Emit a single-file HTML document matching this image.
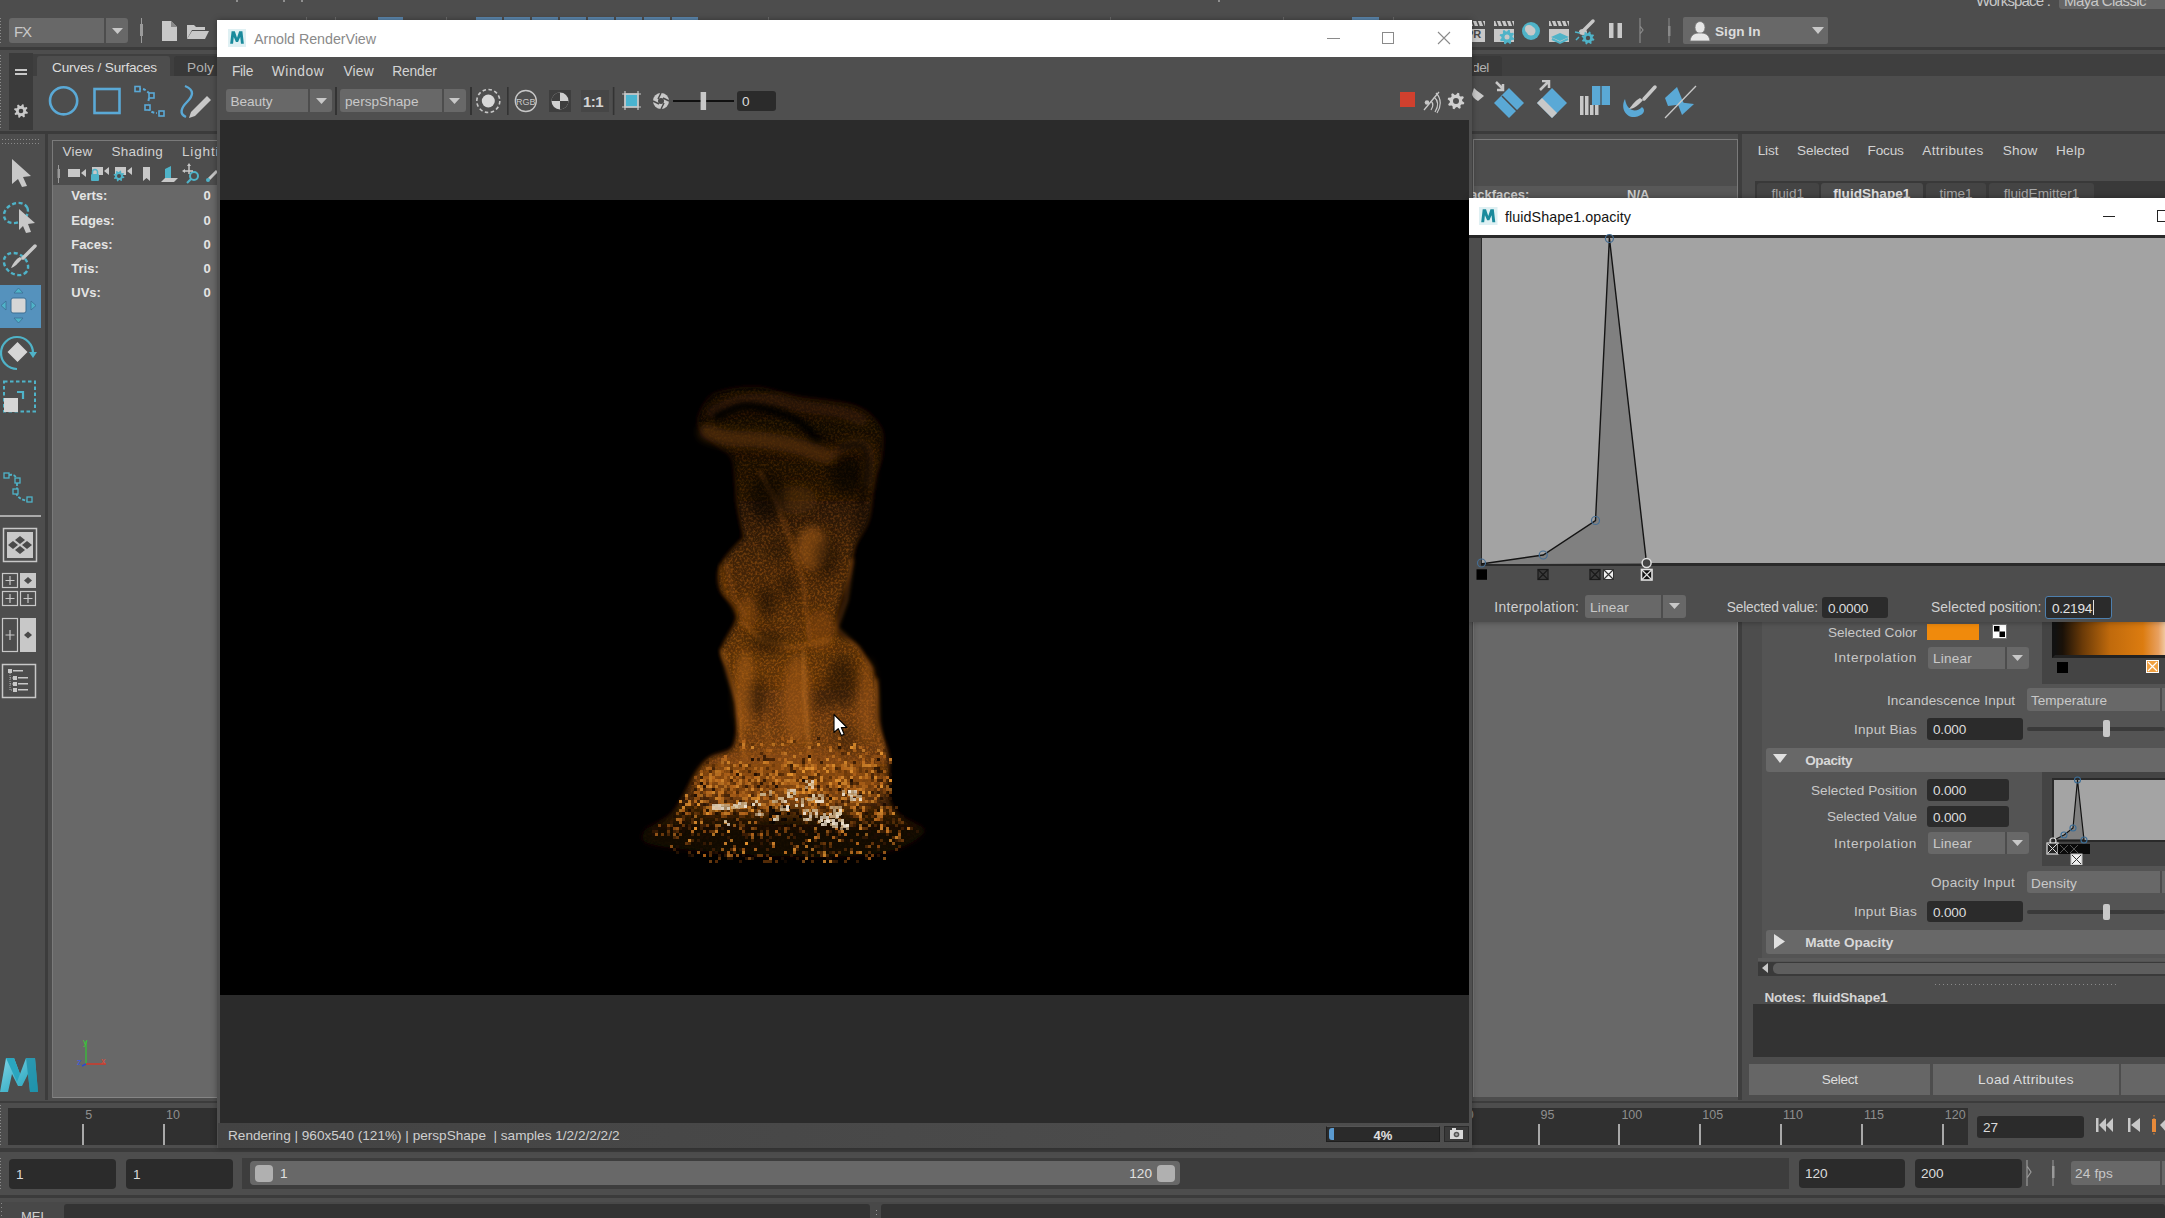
<!DOCTYPE html>
<html><head><meta charset="utf-8">
<style>
*{margin:0;padding:0;box-sizing:border-box}
html,body{width:2165px;height:1218px;overflow:hidden;background:#4d4d4d;font-family:"Liberation Sans",sans-serif;color:#c8c8c8;position:relative}
.a{position:absolute}
.t{position:absolute;white-space:pre;line-height:1}
</style></head><body>
<div class="t" style="left:1976.0px;top:-7.2px;font-size:15px;font-weight:400;color:#c8c8c8;letter-spacing:-0.827px;">Workspace :</div>
<div class="a" style="left:2059px;top:0px;width:106px;height:9px;background:#666666;border-radius:0 0 0 3px"></div>
<div class="t" style="left:2064.0px;top:-7.2px;font-size:15px;font-weight:400;color:#c8c8c8;letter-spacing:-0.599px;">Maya Classic</div>
<div class="a" style="left:236px;top:0px;width:2px;height:2px;background:#8f8f8f;"></div>
<div class="a" style="left:283px;top:0px;width:2px;height:2px;background:#8f8f8f;"></div>
<div class="a" style="left:301px;top:0px;width:2px;height:2px;background:#8f8f8f;"></div>
<div class="a" style="left:1218px;top:0px;width:2px;height:2px;background:#8f8f8f;"></div>
<div class="a" style="left:306px;top:17px;width:1px;height:4px;background:#6a6a6a;"></div>
<div class="a" style="left:335px;top:17px;width:1px;height:4px;background:#6a6a6a;"></div>
<div class="a" style="left:446px;top:17px;width:1px;height:4px;background:#6a6a6a;"></div>
<div class="a" style="left:768px;top:17px;width:1px;height:4px;background:#6a6a6a;"></div>
<div class="a" style="left:1110px;top:17px;width:1px;height:4px;background:#6a6a6a;"></div>
<div class="a" style="left:1283px;top:17px;width:1px;height:4px;background:#6a6a6a;"></div>
<div class="a" style="left:1393px;top:17px;width:1px;height:4px;background:#6a6a6a;"></div>
<div class="a" style="left:378px;top:17px;width:25px;height:4px;background:#5b87ad;"></div>
<div class="a" style="left:476px;top:17px;width:26px;height:4px;background:#5b87ad;"></div>
<div class="a" style="left:504px;top:17px;width:26px;height:4px;background:#5b87ad;"></div>
<div class="a" style="left:532px;top:17px;width:26px;height:4px;background:#5b87ad;"></div>
<div class="a" style="left:560px;top:17px;width:26px;height:4px;background:#5b87ad;"></div>
<div class="a" style="left:588px;top:17px;width:26px;height:4px;background:#5b87ad;"></div>
<div class="a" style="left:616px;top:17px;width:26px;height:4px;background:#5b87ad;"></div>
<div class="a" style="left:644px;top:17px;width:26px;height:4px;background:#5b87ad;"></div>
<div class="a" style="left:672px;top:17px;width:26px;height:4px;background:#5b87ad;"></div>
<div class="a" style="left:1352px;top:17px;width:27px;height:4px;background:#5b87ad;"></div>
<div class="a" style="left:9px;top:18px;width:119px;height:25px;background:#686868;border-radius:3px"></div>
<div class="a" style="left:104px;top:18px;width:2px;height:25px;background:#4d4d4d;"></div>
<svg class="a" style="left:111.5px;top:27.5px;" width="11" height="6" viewBox="0 0 11 6"><polygon points="0,0 11,0 5.5,6" fill="#c8c8c8"/></svg>
<div class="t" style="left:14.0px;top:24.3px;font-size:15px;font-weight:400;color:#c8c8c8;letter-spacing:-1.086px;">FX</div>
<div class="a" style="left:141px;top:18px;width:1px;height:25px;background:#9a9a9a;"></div>
<div class="a" style="left:140px;top:24px;width:3px;height:12px;background:#9a9a9a;"></div>
<svg class="a" style="left:160px;top:20px;" width="20" height="22" viewBox="0 0 20 22"><path d="M2,1 H11 L17,7 V21 H2 Z" fill="#c8c8c8"/><path d="M11,1 V7 H17" fill="#888"/></svg>
<svg class="a" style="left:186px;top:22px;" width="24" height="18" viewBox="0 0 24 18"><path d="M1,3 H8 L10,5 H19 V8 H6 L1,17 Z" fill="#c8c8c8"/><path d="M6,9 H23 L19,17 H1 Z" fill="#c8c8c8"/></svg>
<svg class="a" style="left:1472px;top:18px;" width="230" height="28" viewBox="0 0 230 28"><g transform="translate(-7,3)"><rect x="0" y="0" width="20" height="5" fill="#c8c8c8"/><path d="M2,0 L4,5 M7,0 L9,5 M12,0 L14,5 M17,0 L19,5" stroke="#4a4a4a" stroke-width="1.6"/><rect x="0" y="8" width="20" height="13" fill="#c8c8c8"/></g><text x="-6" y="20" font-size="11" font-weight="700" fill="#4a4a4a" font-family="Liberation Sans">PR</text><g transform="translate(22,3)"><rect x="0" y="0" width="20" height="5" fill="#c8c8c8"/><path d="M2,0 L4,5 M7,0 L9,5 M12,0 L14,5 M17,0 L19,5" stroke="#4a4a4a" stroke-width="1.6"/><rect x="0" y="8" width="20" height="13" fill="#c8c8c8"/></g><polygon points="40.50,19.00 42.36,20.46 41.93,21.87 39.57,22.06 38.89,22.89 39.17,25.24 37.87,25.93 36.07,24.39 35.00,24.50 33.54,26.36 32.13,25.93 31.94,23.57 31.11,22.89 28.76,23.17 28.07,21.87 29.61,20.07 29.50,19.00 27.64,17.54 28.07,16.13 30.43,15.94 31.11,15.11 30.83,12.76 32.13,12.07 33.93,13.61 35.00,13.50 36.46,11.64 37.87,12.07 38.06,14.43 38.89,15.11 41.24,14.83 41.93,16.13 40.39,17.93" fill="#4fb3c8"/><circle cx="35" cy="19" r="2.5" fill="#c8c8c8"/><circle cx="59" cy="13" r="9" fill="#4fb3c8"/><circle cx="59" cy="13" r="4.5" fill="#c8c8c8"/><circle cx="57" cy="11" r="4" fill="#c8c8c8"/><g transform="translate(77,3)"><rect x="0" y="0" width="20" height="5" fill="#c8c8c8"/><path d="M2,0 L4,5 M7,0 L9,5 M12,0 L14,5 M17,0 L19,5" stroke="#4a4a4a" stroke-width="1.6"/><rect x="0" y="8" width="20" height="13" fill="#c8c8c8"/></g><path d="M88,15 L97,19 L88,23 L79,19 Z" fill="#4fb3c8"/><path d="M80,21 L88,25 L96,21" stroke="#4fb3c8" stroke-width="2" fill="none"/><path d="M121,3 L112,12" stroke="#c8c8c8" stroke-width="3.5" stroke-linecap="round"/><ellipse cx="111" cy="14" rx="4" ry="3" fill="#c8c8c8"/><polygon points="120.80,20.00 122.38,21.27 122.01,22.49 119.99,22.67 119.39,23.39 119.61,25.40 118.49,26.01 116.94,24.71 116.00,24.80 114.73,26.38 113.51,26.01 113.33,23.99 112.61,23.39 110.60,23.61 109.99,22.49 111.29,20.94 111.20,20.00 109.62,18.73 109.99,17.51 112.01,17.33 112.61,16.61 112.39,14.60 113.51,13.99 115.06,15.29 116.00,15.20 117.27,13.62 118.49,13.99 118.67,16.01 119.39,16.61 121.40,16.39 122.01,17.51 120.71,19.06" fill="#4fb3c8"/><circle cx="116" cy="20" r="2.2" fill="#4d4d4d"/><path d="M103,14 L108,15 M104,22 L107,19" stroke="#4fb3c8" stroke-width="1.5"/><rect x="137" y="5" width="4.5" height="15" fill="#c8c8c8"/><rect x="145.5" y="5" width="4.5" height="15" fill="#c8c8c8"/><path d="M168,0 V25 M168,8 L171,12 L168,16" stroke="#8a8a8a" stroke-width="1.2" fill="none"/><path d="M197,0 V25" stroke="#8a8a8a" stroke-width="1"/><rect x="196" y="8" width="2.5" height="10" fill="#8a8a8a"/></svg>
<div class="a" style="left:1683px;top:17px;width:145px;height:27px;background:#686868;border-radius:2px"></div>
<svg class="a" style="left:1689px;top:20px;" width="22" height="22" viewBox="0 0 22 22"><ellipse cx="11" cy="7.5" rx="5" ry="6" fill="#e6e6e6" stroke="#777" stroke-width="0.8"/><path d="M1,21 C2,14 6,13 11,13 C16,13 20,14 21,21 Z" fill="#e6e6e6" stroke="#777" stroke-width="0.8"/></svg>
<div class="t" style="left:1715.0px;top:24.9px;font-size:13.6px;font-weight:700;color:#dcdcdc;letter-spacing:0.027px;">Sign In</div>
<svg class="a" style="left:1812.0px;top:26.5px;" width="12" height="7" viewBox="0 0 12 7"><polygon points="0,0 12,0 6.0,7" fill="#c8c8c8"/></svg>
<div class="a" style="left:0px;top:47px;width:2165px;height:3px;background:#3b3b3b;"></div>
<div class="a" style="left:33px;top:54px;width:2165px;height:22px;background:#3f3f3f;"></div>
<div class="a" style="left:9px;top:53px;width:24px;height:77px;background:#3b3b3b;"></div>
<div class="a" style="left:15px;top:69px;width:12px;height:2px;background:#c8c8c8;"></div>
<div class="a" style="left:15px;top:73px;width:12px;height:2px;background:#c8c8c8;"></div>
<svg class="a" style="left:13px;top:103px;" width="16" height="16" viewBox="0 0 16 16"><polygon points="13.00,8.00 14.87,9.37 14.47,10.68 12.16,10.78 11.54,11.54 11.89,13.82 10.68,14.47 8.98,12.90 8.00,13.00 6.63,14.87 5.32,14.47 5.22,12.16 4.46,11.54 2.18,11.89 1.53,10.68 3.10,8.98 3.00,8.00 1.13,6.63 1.53,5.32 3.84,5.22 4.46,4.46 4.11,2.18 5.32,1.53 7.02,3.10 8.00,3.00 9.37,1.13 10.68,1.53 10.78,3.84 11.54,4.46 13.82,4.11 14.47,5.32 12.90,7.02" fill="#c8c8c8"/><circle cx="8" cy="8" r="2.3" fill="#3b3b3b"/></svg>
<div class="a" style="left:37px;top:56px;width:133px;height:22px;background:#4d4d4d;border-radius:3px 3px 0 0"></div>
<div class="t" style="left:52.0px;top:60.9px;font-size:13.6px;font-weight:400;color:#dddddd;letter-spacing:-0.179px;">Curves / Surfaces</div>
<div class="a" style="left:174px;top:56px;width:46px;height:20px;background:#393939;border-radius:3px 3px 0 0"></div>
<div class="t" style="left:187.0px;top:60.9px;font-size:13.6px;font-weight:400;color:#b0b0b0;letter-spacing:0.137px;">Poly</div>
<div class="a" style="left:1472px;top:56px;width:30px;height:20px;background:#393939;border-radius:0 3px 0 0"></div>
<div class="t" style="left:1472.0px;top:60.9px;font-size:13.6px;font-weight:400;color:#b0b0b0;letter-spacing:-0.380px;clip-path:inset(0 0 0 2px)">del</div>
<svg class="a" style="left:45px;top:84px;" width="180" height="36" viewBox="0 0 180 36"><circle cx="18.6" cy="16.8" r="13.6" fill="none" stroke="#5aa9d6" stroke-width="2.6"/><rect x="49.5" y="5" width="25" height="24" fill="none" stroke="#5aa9d6" stroke-width="2.6"/><path d="M93,5 C98,4 101,6 104,9 M104,14 L103,19 M103,24 C105,28 109,29 112,29" fill="none" stroke="#5aa9d6" stroke-width="2" stroke-dasharray="3 2"/><g fill="#4a4a4a" stroke="#5aa9d6" stroke-width="1.6"><rect x="90" y="2.5" width="5" height="5"/><rect x="104" y="9" width="5" height="5"/><rect x="100" y="21" width="5" height="5"/><rect x="114" y="27" width="5" height="5"/></g><path d="M140,2 C150,6 148,12 142,18 C136,24 134,30 141,33" fill="none" stroke="#5aa9d6" stroke-width="2.4"/><path d="M162,12 L166,16 L150,32 L144,34 L146,28 Z" fill="#c8c8c8"/></svg>
<svg class="a" style="left:1472px;top:80px;" width="230" height="45" viewBox="0 0 230 45"><path d="M2,8 C6,12 10,14 12,16 L6,21 C2,19 0,16 0,14 Z" fill="#c8c8c8"/><g transform="translate(0,-4)"><path d="M37,12 L52,27 L37,42 L22,27 Z" fill="#5aa9d6"/><path d="M37,12 L52,27" stroke="#4a4a4a" stroke-width="0"/><path d="M30,20 L45,35" stroke="#4a4a4a" stroke-width="1.5"/><path d="M24,6 L31,13 M31,8 V14 H25" stroke="#c8c8c8" stroke-width="2.5" fill="none"/><path d="M80,12 L95,27 L80,42 L65,27 Z" fill="#5aa9d6"/><path d="M70,22 L65,27 L80,42 L85,37 Z" fill="#c8c8c8"/><path d="M68,14 L76,6 M70,5 H77 V12" stroke="#c8c8c8" stroke-width="2.5" fill="none"/></g><rect x="120" y="6" width="18" height="19" fill="#5aa9d6"/><path d="M129,6 V25" stroke="#4a4a4a" stroke-width="1.2"/><rect x="108" y="16" width="3.5" height="19" fill="#c8c8c8"/><rect x="113" y="16" width="3.5" height="19" fill="#c8c8c8"/><rect x="118" y="25" width="3.5" height="10" fill="#c8c8c8"/><rect x="123" y="25" width="3.5" height="10" fill="#c8c8c8"/><path d="M153,19 C148,28 154,38 163,37 C170,36 175,31 170,27 C165,33 155,32 153,19 Z" fill="#5aa9d6"/><path d="M183,7 L172,19" stroke="#c8c8c8" stroke-width="3.5" stroke-linecap="round"/><path d="M171,20 C168,24 162,29 157,29 C160,25 164,20 168,18 Z" fill="#c8c8c8"/><path d="M193,18 L205,7 L212,24 L196,26 Z" fill="#5aa9d6"/><path d="M205,22 L222,24 L210,35 Z" fill="#5aa9d6"/><path d="M224,6 L193,38" stroke="#c8c8c8" stroke-width="1.3"/></svg>
<div class="a" style="left:0px;top:131px;width:2165px;height:3px;background:#3b3b3b;"></div>
<div class="a" style="left:45px;top:134px;width:3px;height:966px;background:#3c3c3c;"></div>
<div class="a" style="left:2px;top:139px;width:1px;height:1px;background:#8a8a8a;"></div>
<div class="a" style="left:2px;top:143px;width:1px;height:1px;background:#8a8a8a;"></div>
<div class="a" style="left:5px;top:139px;width:1px;height:1px;background:#8a8a8a;"></div>
<div class="a" style="left:5px;top:143px;width:1px;height:1px;background:#8a8a8a;"></div>
<div class="a" style="left:8px;top:139px;width:1px;height:1px;background:#8a8a8a;"></div>
<div class="a" style="left:8px;top:143px;width:1px;height:1px;background:#8a8a8a;"></div>
<div class="a" style="left:11px;top:139px;width:1px;height:1px;background:#8a8a8a;"></div>
<div class="a" style="left:11px;top:143px;width:1px;height:1px;background:#8a8a8a;"></div>
<div class="a" style="left:14px;top:139px;width:1px;height:1px;background:#8a8a8a;"></div>
<div class="a" style="left:14px;top:143px;width:1px;height:1px;background:#8a8a8a;"></div>
<div class="a" style="left:17px;top:139px;width:1px;height:1px;background:#8a8a8a;"></div>
<div class="a" style="left:17px;top:143px;width:1px;height:1px;background:#8a8a8a;"></div>
<div class="a" style="left:20px;top:139px;width:1px;height:1px;background:#8a8a8a;"></div>
<div class="a" style="left:20px;top:143px;width:1px;height:1px;background:#8a8a8a;"></div>
<div class="a" style="left:23px;top:139px;width:1px;height:1px;background:#8a8a8a;"></div>
<div class="a" style="left:23px;top:143px;width:1px;height:1px;background:#8a8a8a;"></div>
<div class="a" style="left:26px;top:139px;width:1px;height:1px;background:#8a8a8a;"></div>
<div class="a" style="left:26px;top:143px;width:1px;height:1px;background:#8a8a8a;"></div>
<div class="a" style="left:29px;top:139px;width:1px;height:1px;background:#8a8a8a;"></div>
<div class="a" style="left:29px;top:143px;width:1px;height:1px;background:#8a8a8a;"></div>
<div class="a" style="left:32px;top:139px;width:1px;height:1px;background:#8a8a8a;"></div>
<div class="a" style="left:32px;top:143px;width:1px;height:1px;background:#8a8a8a;"></div>
<div class="a" style="left:35px;top:139px;width:1px;height:1px;background:#8a8a8a;"></div>
<div class="a" style="left:35px;top:143px;width:1px;height:1px;background:#8a8a8a;"></div>
<div class="a" style="left:38px;top:139px;width:1px;height:1px;background:#8a8a8a;"></div>
<div class="a" style="left:38px;top:143px;width:1px;height:1px;background:#8a8a8a;"></div>
<svg class="a" style="left:8px;top:158px;" width="26" height="30" viewBox="0 0 26 30"><path d="M4,1 L23,18 L15,19 L19,28 L14,29 L10,21 L4,26 Z" fill="#c8c8c8"/></svg>
<svg class="a" style="left:1px;top:200px;" width="36" height="34" viewBox="0 0 36 34"><ellipse cx="15" cy="13" rx="12.5" ry="9.5" transform="rotate(-25 15 13)" fill="none" stroke="#4fb3c8" stroke-width="2.4" stroke-dasharray="4 2.5"/><path d="M18,9 L34,23 L27,24 L30,32 L25,33 L22,26 L18,30 Z" fill="#c8c8c8"/></svg>
<svg class="a" style="left:1px;top:243px;" width="36" height="38" viewBox="0 0 36 38"><ellipse cx="15" cy="21" rx="13" ry="10" transform="rotate(35 15 21)" fill="none" stroke="#4fb3c8" stroke-width="2.4" stroke-dasharray="4 2.5"/><path d="M34,3 L22,15" stroke="#c8c8c8" stroke-width="3.5" stroke-linecap="round"/><path d="M21,16 C17,20 14,24 10,25 C12,20 15,16 19,14 Z" fill="#c8c8c8"/></svg>
<div class="a" style="left:0px;top:285px;width:41px;height:43px;background:#5592bd;"></div>
<svg class="a" style="left:0px;top:286px;" width="41" height="42" viewBox="0 0 41 42"><rect x="11" y="12" width="15" height="15" rx="2" fill="#d6d6d6" stroke="#3d6f94" stroke-width="1"/><path d="M14,7 L18.5,2 L23,7 Z M14,32 L18.5,37 L23,32 Z M6,15 L1,19.5 L6,24 Z M31,15 L36,19.5 L31,24 Z" fill="#4fb3c8" stroke="#3d6f94" stroke-width="0.8"/></svg>
<svg class="a" style="left:0px;top:334px;" width="40" height="38" viewBox="0 0 40 38"><path d="M17,35 A16,16 0 1 1 33,19" fill="none" stroke="#4fb3c8" stroke-width="2.2"/><path d="M29,18 L37,18 L33,24 Z" fill="#4fb3c8"/><path d="M17.5,8 L27.5,18 L17.5,28 L7.5,18 Z" fill="#d6d6d6"/></svg>
<svg class="a" style="left:2px;top:380px;" width="36" height="34" viewBox="0 0 36 34"><rect x="2" y="1.5" width="31" height="30" fill="none" stroke="#4fb3c8" stroke-width="2" stroke-dasharray="3.5 2.5"/><path d="M15,12 H21 V19" fill="none" stroke="#4fb3c8" stroke-width="2.2"/><rect x="2" y="18" width="14" height="14" fill="#d6d6d6"/></svg>
<svg class="a" style="left:2px;top:470px;" width="34" height="36" viewBox="0 0 34 36"><path d="M7,5 C12,4 14,6 14,9 M15,13 V19 M14,23 C16,29 22,30 26,31" fill="none" stroke="#4fb3c8" stroke-width="1.8" stroke-dasharray="3 1.5"/><g fill="#4a4a4a" stroke="#4fb3c8" stroke-width="1.3"><rect x="2" y="3" width="5" height="5"/><rect x="13" y="8" width="5" height="5"/><rect x="11" y="19" width="5" height="5"/><rect x="25" y="27" width="5" height="5"/></g></svg>
<div class="a" style="left:0px;top:515px;width:41px;height:2px;background:#aaaaaa;"></div>
<svg class="a" style="left:2px;top:527px;" width="36" height="36" viewBox="0 0 36 36"><rect x="1.5" y="1.5" width="33" height="33" fill="none" stroke="#c8c8c8" stroke-width="1.5"/><rect x="5" y="5" width="26" height="26" fill="#c8c8c8"/><path d="M18,9 L23,13 L18,17 L13,13 Z M11,14 L16,18 L11,22 L6,18 Z M25,14 L30,18 L25,22 L20,18 Z M18,19 L23,23 L18,27 L13,23 Z" fill="#4a4a4a"/></svg>
<svg class="a" style="left:1px;top:572px;" width="38" height="36" viewBox="0 0 38 36"><g fill="none" stroke="#c8c8c8" stroke-width="1.2"><rect x="1.5" y="1.5" width="15" height="14"/><rect x="1.5" y="19.5" width="15" height="14"/><rect x="19.5" y="19.5" width="15" height="14"/></g><rect x="19" y="1" width="16" height="15" fill="#c8c8c8"/><path d="M27,5 L31,8.5 L27,12 L23,8.5 Z" fill="#4a4a4a"/><path d="M9,4 V13 M4.5,8.5 H13.5 M9,22 V31 M4.5,26.5 H13.5 M27,22 V31 M22.5,26.5 H31.5" stroke="#c8c8c8" stroke-width="1.2"/></svg>
<svg class="a" style="left:1px;top:617px;" width="38" height="36" viewBox="0 0 38 36"><rect x="1.5" y="1.5" width="15" height="33" fill="none" stroke="#c8c8c8" stroke-width="1.2"/><rect x="19" y="1" width="16" height="34" fill="#c8c8c8"/><path d="M9,13 V23 M4.5,18 H13.5" stroke="#c8c8c8" stroke-width="1.2"/><path d="M27,14.5 L31,18 L27,21.5 L23,18 Z" fill="#4a4a4a"/></svg>
<svg class="a" style="left:1px;top:663px;" width="38" height="36" viewBox="0 0 38 36"><rect x="1.5" y="1.5" width="33" height="33" fill="none" stroke="#c8c8c8" stroke-width="1.5"/><g fill="#c8c8c8"><rect x="7" y="6" width="4" height="4"/><rect x="12" y="7" width="10" height="1.5"/><rect x="12" y="13" width="4" height="4"/><rect x="17" y="14" width="10" height="1.5"/><rect x="12" y="19" width="4" height="4"/><rect x="17" y="20" width="10" height="1.5"/><rect x="12" y="25" width="4" height="4"/><rect x="17" y="26" width="10" height="1.5"/></g><path d="M9,10 V27 H12 M9,15 H12 M9,21 H12" stroke="#c8c8c8" stroke-width="0.8" fill="none" stroke-dasharray="1 1"/></svg>
<svg class="a" style="left:0px;top:1052px;" width="40" height="42" viewBox="0 0 40 42"><defs><linearGradient id="mlg" x1="0" y1="0" x2="1" y2="1"><stop offset="0" stop-color="#7fd3e6"/><stop offset="1" stop-color="#1b9fb8"/></linearGradient></defs><path d="M0,40 L6,6 L14,6 L20,22 L26,6 L35,6 L38,40 L30,40 L28,22 L22,34 L18,34 L12,22 L8,40 Z" fill="url(#mlg)"/><path d="M6,6 L14,6 L20,22 L17,30 Z" fill="#2aa6bf"/><path d="M26,6 L35,6 L38,40 L30,40 Z" fill="#1f8fa8" opacity="0.8"/></svg>
<div class="a" style="left:52px;top:140px;width:166px;height:958px;background:#4d4d4d;"></div>
<div class="a" style="left:52px;top:140px;width:166px;height:1px;background:#7a7a7a;"></div>
<div class="a" style="left:52px;top:140px;width:1px;height:958px;background:#7a7a7a;"></div>
<div class="a" style="left:53px;top:185px;width:165px;height:912px;background:#686868;"></div>
<div class="a" style="left:53px;top:1097px;width:165px;height:1px;background:#858585;"></div>
<div class="t" style="left:62.5px;top:145.0px;font-size:13.5px;font-weight:400;color:#d2d2d2;letter-spacing:0.242px;">View</div>
<div class="t" style="left:111.5px;top:145.0px;font-size:13.5px;font-weight:400;color:#d2d2d2;letter-spacing:0.279px;">Shading</div>
<div class="t" style="left:182.0px;top:145.0px;font-size:13.5px;font-weight:400;color:#d2d2d2;letter-spacing:0.838px;">Lighting</div>
<svg class="a" style="left:53px;top:162px;" width="165" height="24" viewBox="0 0 165 24"><path d="M5.5,3 V21" stroke="#9a9a9a" stroke-width="1"/><rect x="4.5" y="7" width="2.5" height="9" fill="#9a9a9a"/><rect x="15" y="7" width="12" height="8" fill="#c8c8c8"/><path d="M28,11 L33,7 V15 Z" fill="#c8c8c8"/><rect x="39" y="5" width="11" height="8" fill="#c8c8c8"/><path d="M51,9 L56,5 V13 Z" fill="#c8c8c8"/><rect x="38" y="12" width="8" height="7" rx="1" fill="#4fb3c8"/><path d="M39.5,12 V10 A2.5,2.5 0 0 1 44.5,10 V12" fill="none" stroke="#4fb3c8" stroke-width="1.5"/><rect x="62" y="5" width="11" height="8" fill="#c8c8c8"/><path d="M74,9 L79,5 V13 Z" fill="#c8c8c8"/><polygon points="70.00,14.00 71.39,15.07 71.08,16.10 69.33,16.22 68.83,16.83 69.06,18.57 68.10,19.08 66.78,17.92 66.00,18.00 64.93,19.39 63.90,19.08 63.78,17.33 63.17,16.83 61.43,17.06 60.92,16.10 62.08,14.78 62.00,14.00 60.61,12.93 60.92,11.90 62.67,11.78 63.17,11.17 62.94,9.43 63.90,8.92 65.22,10.08 66.00,10.00 67.07,8.61 68.10,8.92 68.22,10.67 68.83,11.17 70.57,10.94 71.08,11.90 69.92,13.22" fill="#4fb3c8"/><circle cx="66" cy="14" r="2" fill="#4d4d4d"/><path d="M90,5 H97 V19 L93.5,16 L90,19 Z" fill="#c8c8c8"/><path d="M112,7 L118,4 V16 L112,19 Z" fill="#4fb3c8"/><path d="M108,20 L112,16 H125 L121,20 Z" fill="#c8c8c8"/><circle cx="141" cy="14" r="4" fill="none" stroke="#4fb3c8" stroke-width="2"/><path d="M138,17 L134,21" stroke="#4fb3c8" stroke-width="2.2"/><path d="M131,9 H140 M136,4 V12" stroke="#c8c8c8" stroke-width="1.5"/><path d="M129,9 L132,7 V11 Z M134,4 L136,1 L138,4 Z" fill="#c8c8c8"/><path d="M164,9 L156,17" stroke="#c8c8c8" stroke-width="3"/><circle cx="155" cy="18" r="2" fill="#4fb3c8"/></svg>
<div class="t" style="left:71.3px;top:189.2px;font-size:13px;font-weight:700;color:#e4e4e4;">Verts:</div>
<div class="t" style="left:203.4px;top:189.2px;font-size:13px;font-weight:700;color:#e4e4e4;">0</div>
<div class="t" style="left:71.3px;top:213.5px;font-size:13px;font-weight:700;color:#e4e4e4;">Edges:</div>
<div class="t" style="left:203.4px;top:213.5px;font-size:13px;font-weight:700;color:#e4e4e4;">0</div>
<div class="t" style="left:71.3px;top:237.8px;font-size:13px;font-weight:700;color:#e4e4e4;">Faces:</div>
<div class="t" style="left:203.4px;top:237.8px;font-size:13px;font-weight:700;color:#e4e4e4;">0</div>
<div class="t" style="left:71.3px;top:262.1px;font-size:13px;font-weight:700;color:#e4e4e4;">Tris:</div>
<div class="t" style="left:203.4px;top:262.1px;font-size:13px;font-weight:700;color:#e4e4e4;">0</div>
<div class="t" style="left:71.3px;top:286.4px;font-size:13px;font-weight:700;color:#e4e4e4;">UVs:</div>
<div class="t" style="left:203.4px;top:286.4px;font-size:13px;font-weight:700;color:#e4e4e4;">0</div>
<svg class="a" style="left:74px;top:1036px;" width="40" height="34" viewBox="0 0 40 34"><path d="M12,5 V28" stroke="#3cb43c" stroke-width="1.5"/><path d="M12,28 H32" stroke="#d03a2a" stroke-width="1.5"/><path d="M12,28 L8,30" stroke="#2a4ad0" stroke-width="1.5"/><text x="9" y="9" font-size="9" fill="#3cc83c" font-family="Liberation Sans">y</text><text x="27" y="28" font-size="9" fill="#e04a3a" font-family="Liberation Sans">x</text><text x="3" y="29" font-size="9" fill="#3a5ae0" font-family="Liberation Sans">z</text></svg>
<div class="a" style="left:1473px;top:139px;width:265px;height:958px;background:#4d4d4d;border:1px solid #7a7a7a"></div>
<div class="a" style="left:1474px;top:186px;width:263px;height:12px;background:#585858;"></div>
<div class="t" style="left:1470.0px;top:187.7px;font-size:13px;font-weight:700;color:#cfcfcf;clip-path:inset(0 0 0 3px)">ackfaces:</div>
<div class="t" style="left:1627.0px;top:187.7px;font-size:13px;font-weight:700;color:#cfcfcf;">N/A</div>
<div class="a" style="left:1474px;top:622px;width:263px;height:475px;background:#686868;"></div>
<div class="a" style="left:1738px;top:134px;width:4px;height:966px;background:#3e3e3e;"></div>
<div class="t" style="left:1757.7px;top:143.9px;font-size:13.6px;font-weight:400;color:#d2d2d2;letter-spacing:-0.139px;">List</div>
<div class="t" style="left:1797.0px;top:143.9px;font-size:13.6px;font-weight:400;color:#d2d2d2;letter-spacing:-0.113px;">Selected</div>
<div class="t" style="left:1867.6px;top:143.9px;font-size:13.6px;font-weight:400;color:#d2d2d2;letter-spacing:-0.206px;">Focus</div>
<div class="t" style="left:1922.2px;top:143.9px;font-size:13.6px;font-weight:400;color:#d2d2d2;letter-spacing:0.408px;">Attributes</div>
<div class="t" style="left:2002.7px;top:143.9px;font-size:13.6px;font-weight:400;color:#d2d2d2;letter-spacing:0.246px;">Show</div>
<div class="t" style="left:2056.0px;top:143.9px;font-size:13.6px;font-weight:400;color:#d2d2d2;letter-spacing:0.258px;">Help</div>
<div class="a" style="left:1755px;top:181px;width:410px;height:17px;background:#393939;"></div>
<div class="a" style="left:1757px;top:183px;width:61.5px;height:15px;background:#444444;border-radius:3px 3px 0 0"></div>
<div class="t" style="left:1771.5px;top:187.4px;font-size:13.6px;font-weight:400;color:#a8a8a8;">fluid1</div>
<div class="a" style="left:1821px;top:183px;width:101.59999999999991px;height:15px;background:#4d4d4d;border-radius:3px 3px 0 0"></div>
<div class="t" style="left:1833.3px;top:187.4px;font-size:13.6px;font-weight:700;color:#e0e0e0;">fluidShape1</div>
<div class="a" style="left:1926px;top:183px;width:60px;height:15px;background:#444444;border-radius:3px 3px 0 0"></div>
<div class="t" style="left:1939.4px;top:187.4px;font-size:13.6px;font-weight:400;color:#a8a8a8;">time1</div>
<div class="a" style="left:1989px;top:183px;width:105px;height:15px;background:#444444;border-radius:3px 3px 0 0"></div>
<div class="t" style="left:2003.7px;top:187.4px;font-size:13.6px;font-weight:400;color:#a8a8a8;">fluidEmitter1</div>
<div class="a" style="left:1742px;top:622px;width:20px;height:478px;background:#4d4d4d;"></div>
<div class="a" style="left:1762px;top:622px;width:403px;height:340px;background:#545454;"></div>
<div class="t" style="left:1828.0px;top:626.4px;font-size:13.6px;font-weight:400;color:#c8c8c8;letter-spacing:-0.012px;">Selected Color</div>
<div class="a" style="left:1926.6px;top:624.4px;width:52.4px;height:15.6px;background:#f08a0c;"></div>
<svg class="a" style="left:1992px;top:624px;" width="16" height="15" viewBox="0 0 16 15"><rect x="0.5" y="0.5" width="14" height="14" fill="#fff" stroke="#777"/><rect x="2" y="2" width="5.5" height="5.5" fill="#000"/><rect x="7.5" y="7.5" width="5.5" height="5.5" fill="#000"/></svg>
<div class="a" style="left:1928px;top:646.5px;width:100.6px;height:22.5px;background:#686868;border-radius:3px"></div>
<div class="a" style="left:2004.5px;top:646.5px;width:2px;height:22.5px;background:#4d4d4d;"></div>
<svg class="a" style="left:2012.05px;top:654.75px;" width="11" height="6" viewBox="0 0 11 6"><polygon points="0,0 11,0 5.5,6" fill="#c8c8c8"/></svg>
<div class="t" style="left:1933.0px;top:652.2px;font-size:13.6px;font-weight:400;color:#c8c8c8;letter-spacing:0.201px;">Linear</div>
<div class="t" style="left:1834.0px;top:651.4px;font-size:13.6px;font-weight:400;color:#c8c8c8;letter-spacing:0.629px;">Interpolation</div>
<div class="a" style="left:2041.5px;top:622px;width:124px;height:61.5px;background:#444444;"></div>
<div class="a" style="left:2052px;top:622px;width:113px;height:36px;background:linear-gradient(90deg,#111 0%,#1a1108 7%,#6a3a08 25%,#c06a0c 50%,#dc7c10 80%,#e8a060 94%,#f0c8a0 100%);border-bottom:3px solid #222;border-left:3px solid #111"></div>
<div class="a" style="left:2057px;top:662px;width:11px;height:11px;background:#000;"></div>
<svg class="a" style="left:2146px;top:660px;" width="13" height="13" viewBox="0 0 13 13"><rect x="0.5" y="0.5" width="12" height="12" fill="#f0a040" stroke="#fff" stroke-width="1"/><path d="M2,2 L11,11 M11,2 L2,11" stroke="#fff" stroke-width="1.2"/></svg>
<div class="t" style="left:1886.9px;top:694.0px;font-size:13.6px;font-weight:400;color:#c8c8c8;letter-spacing:0.154px;">Incandescence Input</div>
<div class="a" style="left:2027px;top:688.4px;width:138px;height:22.3px;background:#686868;border-radius:3px 0 0 3px"></div>
<div class="t" style="left:2031.0px;top:694.4px;font-size:13.6px;font-weight:400;color:#c8c8c8;letter-spacing:-0.028px;">Temperature</div>
<div class="a" style="left:2160px;top:688px;width:2px;height:23px;background:#4d4d4d;"></div>
<div class="t" style="left:1854.0px;top:722.6px;font-size:13.6px;font-weight:400;color:#c8c8c8;letter-spacing:0.253px;">Input Bias</div>
<div class="a" style="left:1927px;top:718.4px;width:95.6px;height:21.3px;background:#2b2b2b;border-radius:3px"></div>
<div class="t" style="left:1933.0px;top:723.4px;font-size:13.6px;font-weight:400;color:#dcdcdc;letter-spacing:-0.206px;">0.000</div>
<div class="a" style="left:2027px;top:727px;width:138px;height:4px;background:#3a3a3a;border-radius:2px"></div>
<div class="a" style="left:2102.7px;top:720px;width:7.5px;height:17px;background:#c8c8c8;border-radius:2px"></div>
<div class="a" style="left:1765.5px;top:748px;width:400px;height:23.5px;background:#686868;border-radius:3px 0 0 3px"></div>
<svg class="a" style="left:1773.0px;top:754.0px;" width="14" height="9" viewBox="0 0 14 9"><polygon points="0,0 14,0 7.0,9" fill="#e0e0e0"/></svg>
<div class="t" style="left:1805.2px;top:754.4px;font-size:13.6px;font-weight:700;color:#d8d8d8;letter-spacing:-0.411px;">Opacity</div>
<div class="a" style="left:1762px;top:771.5px;width:403px;height:188px;background:#545454;"></div>
<div class="t" style="left:1811.0px;top:783.8px;font-size:13.6px;font-weight:400;color:#c8c8c8;letter-spacing:0.056px;">Selected Position</div>
<div class="a" style="left:1927px;top:779px;width:82.3px;height:21.5px;background:#2b2b2b;border-radius:3px"></div>
<div class="t" style="left:1933.0px;top:784.4px;font-size:13.6px;font-weight:400;color:#dcdcdc;letter-spacing:-0.206px;">0.000</div>
<div class="t" style="left:1827.0px;top:810.2px;font-size:13.6px;font-weight:400;color:#c8c8c8;letter-spacing:-0.031px;">Selected Value</div>
<div class="a" style="left:1927px;top:806px;width:82.3px;height:21.3px;background:#2b2b2b;border-radius:3px"></div>
<div class="t" style="left:1933.0px;top:810.9px;font-size:13.6px;font-weight:400;color:#dcdcdc;letter-spacing:-0.206px;">0.000</div>
<div class="t" style="left:1834.0px;top:837.4px;font-size:13.6px;font-weight:400;color:#c8c8c8;letter-spacing:0.629px;">Interpolation</div>
<div class="a" style="left:1928px;top:831.6px;width:100.6px;height:22.6px;background:#686868;border-radius:3px"></div>
<div class="a" style="left:2004.5px;top:831.6px;width:2px;height:22.6px;background:#4d4d4d;"></div>
<svg class="a" style="left:2012.05px;top:839.9px;" width="11" height="6" viewBox="0 0 11 6"><polygon points="0,0 11,0 5.5,6" fill="#c8c8c8"/></svg>
<div class="t" style="left:1933.0px;top:837.3px;font-size:13.6px;font-weight:400;color:#c8c8c8;letter-spacing:0.201px;">Linear</div>
<div class="a" style="left:2041.5px;top:772px;width:124px;height:93.6px;background:#444444;"></div>
<div class="a" style="left:2052px;top:778px;width:113px;height:64px;background:#2a2a2a;"></div>
<div class="a" style="left:2054px;top:780px;width:111px;height:60px;background:#a4a4a4;"></div>
<svg class="a" style="left:2040px;top:770px;" width="125" height="95" viewBox="0 0 125 95"><path d="M14,70 L24,65 L33,58 L37.5,10 L44,70 Z" fill="#808080" stroke="#111" stroke-width="1.2"/><g fill="none" stroke="#3b6e98" stroke-width="1.1"><circle cx="24" cy="65" r="3"/><circle cx="33" cy="58" r="3"/><circle cx="37.5" cy="10" r="3"/><circle cx="44" cy="70" r="3"/></g><circle cx="13" cy="71" r="3" fill="none" stroke="#ddd" stroke-width="1.2"/><rect x="7" y="73" width="11" height="11" fill="#222" stroke="#ddd" stroke-width="1.2"/><path d="M8,74 L17,83 M17,74 L8,83" stroke="#ddd" stroke-width="1"/><rect x="18" y="74" width="32" height="10" fill="#0a0a0a"/><path d="M20,75 L28,83 M28,75 L20,83 M30,75 L38,83 M38,75 L30,83" stroke="#555" stroke-width="1"/><rect x="31" y="84" width="11" height="11" fill="#eee" stroke="#bbb" stroke-width="1"/><path d="M32,85 L41,94 M41,85 L32,94" stroke="#333" stroke-width="1"/></svg>
<div class="t" style="left:1931.0px;top:876.2px;font-size:13.6px;font-weight:400;color:#c8c8c8;letter-spacing:0.299px;">Opacity Input</div>
<div class="a" style="left:2027px;top:871px;width:138px;height:22px;background:#686868;border-radius:3px 0 0 3px"></div>
<div class="t" style="left:2031.0px;top:876.9px;font-size:13.6px;font-weight:400;color:#c8c8c8;letter-spacing:0.096px;">Density</div>
<div class="a" style="left:2160px;top:871px;width:2px;height:22px;background:#4d4d4d;"></div>
<div class="t" style="left:1854.0px;top:905.1px;font-size:13.6px;font-weight:400;color:#c8c8c8;letter-spacing:0.253px;">Input Bias</div>
<div class="a" style="left:1927px;top:901px;width:95.6px;height:21px;background:#2b2b2b;border-radius:3px"></div>
<div class="t" style="left:1933.0px;top:905.9px;font-size:13.6px;font-weight:400;color:#dcdcdc;letter-spacing:-0.206px;">0.000</div>
<div class="a" style="left:2027px;top:910px;width:138px;height:4px;background:#3a3a3a;border-radius:2px"></div>
<div class="a" style="left:2102.7px;top:904px;width:7.5px;height:16px;background:#c8c8c8;border-radius:2px"></div>
<div class="a" style="left:1765.5px;top:930px;width:400px;height:23.6px;background:#686868;border-radius:3px 0 0 3px"></div>
<svg class="a" style="left:1774px;top:934px;" width="12" height="15" viewBox="0 0 12 15"><polygon points="0,0 11,7.5 0,15" fill="#e0e0e0"/></svg>
<div class="t" style="left:1805.2px;top:936.4px;font-size:13.6px;font-weight:700;color:#d8d8d8;letter-spacing:-0.088px;">Matte Opacity</div>
<div class="a" style="left:1758px;top:958px;width:407px;height:3px;background:#5a5a5a;"></div>
<div class="a" style="left:1758px;top:961.5px;width:407px;height:14px;background:#3a3a3a;"></div>
<svg class="a" style="left:1760px;top:963px;" width="10" height="10" viewBox="0 0 10 10"><polygon points="2,5 8,0 8,10" fill="#c8c8c8"/></svg>
<div class="a" style="left:1773px;top:963px;width:392px;height:11px;background:#5e5e5e;border-radius:5px 0 0 5px"></div>
<div class="a" style="left:1935px;top:983.5px;width:1px;height:1px;background:#8a8a8a;"></div>
<div class="a" style="left:1939px;top:983.5px;width:1px;height:1px;background:#8a8a8a;"></div>
<div class="a" style="left:1943px;top:983.5px;width:1px;height:1px;background:#8a8a8a;"></div>
<div class="a" style="left:1947px;top:983.5px;width:1px;height:1px;background:#8a8a8a;"></div>
<div class="a" style="left:1951px;top:983.5px;width:1px;height:1px;background:#8a8a8a;"></div>
<div class="a" style="left:1955px;top:983.5px;width:1px;height:1px;background:#8a8a8a;"></div>
<div class="a" style="left:1959px;top:983.5px;width:1px;height:1px;background:#8a8a8a;"></div>
<div class="a" style="left:1963px;top:983.5px;width:1px;height:1px;background:#8a8a8a;"></div>
<div class="a" style="left:1967px;top:983.5px;width:1px;height:1px;background:#8a8a8a;"></div>
<div class="a" style="left:1971px;top:983.5px;width:1px;height:1px;background:#8a8a8a;"></div>
<div class="a" style="left:1975px;top:983.5px;width:1px;height:1px;background:#8a8a8a;"></div>
<div class="a" style="left:1979px;top:983.5px;width:1px;height:1px;background:#8a8a8a;"></div>
<div class="a" style="left:1983px;top:983.5px;width:1px;height:1px;background:#8a8a8a;"></div>
<div class="a" style="left:1987px;top:983.5px;width:1px;height:1px;background:#8a8a8a;"></div>
<div class="a" style="left:1991px;top:983.5px;width:1px;height:1px;background:#8a8a8a;"></div>
<div class="a" style="left:1995px;top:983.5px;width:1px;height:1px;background:#8a8a8a;"></div>
<div class="a" style="left:1999px;top:983.5px;width:1px;height:1px;background:#8a8a8a;"></div>
<div class="a" style="left:2003px;top:983.5px;width:1px;height:1px;background:#8a8a8a;"></div>
<div class="a" style="left:2007px;top:983.5px;width:1px;height:1px;background:#8a8a8a;"></div>
<div class="a" style="left:2011px;top:983.5px;width:1px;height:1px;background:#8a8a8a;"></div>
<div class="a" style="left:2015px;top:983.5px;width:1px;height:1px;background:#8a8a8a;"></div>
<div class="a" style="left:2019px;top:983.5px;width:1px;height:1px;background:#8a8a8a;"></div>
<div class="a" style="left:2023px;top:983.5px;width:1px;height:1px;background:#8a8a8a;"></div>
<div class="a" style="left:2027px;top:983.5px;width:1px;height:1px;background:#8a8a8a;"></div>
<div class="a" style="left:2031px;top:983.5px;width:1px;height:1px;background:#8a8a8a;"></div>
<div class="a" style="left:2035px;top:983.5px;width:1px;height:1px;background:#8a8a8a;"></div>
<div class="a" style="left:2039px;top:983.5px;width:1px;height:1px;background:#8a8a8a;"></div>
<div class="a" style="left:2043px;top:983.5px;width:1px;height:1px;background:#8a8a8a;"></div>
<div class="a" style="left:2047px;top:983.5px;width:1px;height:1px;background:#8a8a8a;"></div>
<div class="a" style="left:2051px;top:983.5px;width:1px;height:1px;background:#8a8a8a;"></div>
<div class="a" style="left:2055px;top:983.5px;width:1px;height:1px;background:#8a8a8a;"></div>
<div class="a" style="left:2059px;top:983.5px;width:1px;height:1px;background:#8a8a8a;"></div>
<div class="a" style="left:2063px;top:983.5px;width:1px;height:1px;background:#8a8a8a;"></div>
<div class="a" style="left:2067px;top:983.5px;width:1px;height:1px;background:#8a8a8a;"></div>
<div class="a" style="left:2071px;top:983.5px;width:1px;height:1px;background:#8a8a8a;"></div>
<div class="a" style="left:2075px;top:983.5px;width:1px;height:1px;background:#8a8a8a;"></div>
<div class="a" style="left:2079px;top:983.5px;width:1px;height:1px;background:#8a8a8a;"></div>
<div class="a" style="left:2083px;top:983.5px;width:1px;height:1px;background:#8a8a8a;"></div>
<div class="a" style="left:2087px;top:983.5px;width:1px;height:1px;background:#8a8a8a;"></div>
<div class="a" style="left:2091px;top:983.5px;width:1px;height:1px;background:#8a8a8a;"></div>
<div class="a" style="left:2095px;top:983.5px;width:1px;height:1px;background:#8a8a8a;"></div>
<div class="a" style="left:2099px;top:983.5px;width:1px;height:1px;background:#8a8a8a;"></div>
<div class="a" style="left:2103px;top:983.5px;width:1px;height:1px;background:#8a8a8a;"></div>
<div class="a" style="left:2107px;top:983.5px;width:1px;height:1px;background:#8a8a8a;"></div>
<div class="a" style="left:2111px;top:983.5px;width:1px;height:1px;background:#8a8a8a;"></div>
<div class="a" style="left:2115px;top:983.5px;width:1px;height:1px;background:#8a8a8a;"></div>
<div class="t" style="left:1764.4px;top:990.9px;font-size:13.6px;font-weight:700;color:#d4d4d4;letter-spacing:-0.205px;">Notes:  fluidShape1</div>
<div class="a" style="left:1753.3px;top:1004px;width:412px;height:53px;background:#333333;"></div>
<div class="a" style="left:1749.4px;top:1064px;width:180.8px;height:30.6px;background:#666666;"></div>
<div class="t" style="left:1821.8px;top:1073.4px;font-size:13.6px;font-weight:400;color:#dddddd;letter-spacing:-0.297px;">Select</div>
<div class="a" style="left:1933px;top:1064px;width:185.8px;height:30.6px;background:#666666;"></div>
<div class="t" style="left:1978.1px;top:1073.4px;font-size:13.6px;font-weight:400;color:#dddddd;letter-spacing:0.333px;">Load Attributes</div>
<div class="a" style="left:2121.4px;top:1064px;width:44px;height:30.6px;background:#666666;"></div>
<div class="a" style="left:0px;top:1100px;width:2165px;height:48px;background:#4d4d4d;"></div>
<div class="a" style="left:0px;top:1101px;width:2165px;height:2px;background:#3c3c3c;"></div>
<div class="a" style="left:8px;top:1108px;width:1960px;height:37px;background:#303030;"></div>
<div class="a" style="left:82.28px;top:1124px;width:2px;height:21px;background:#a8a8a8;"></div>
<div class="t" style="left:85.3px;top:1108.5px;font-size:12.5px;font-weight:400;color:#8e8e8e;">5</div>
<div class="a" style="left:163.13000000000002px;top:1124px;width:2px;height:21px;background:#a8a8a8;"></div>
<div class="t" style="left:166.1px;top:1108.5px;font-size:12.5px;font-weight:400;color:#8e8e8e;">10</div>
<div class="a" style="left:243.98000000000002px;top:1124px;width:2px;height:21px;background:#a8a8a8;"></div>
<div class="t" style="left:247.0px;top:1108.5px;font-size:12.5px;font-weight:400;color:#8e8e8e;">15</div>
<div class="a" style="left:324.83000000000004px;top:1124px;width:2px;height:21px;background:#a8a8a8;"></div>
<div class="t" style="left:327.8px;top:1108.5px;font-size:12.5px;font-weight:400;color:#8e8e8e;">20</div>
<div class="a" style="left:405.68000000000006px;top:1124px;width:2px;height:21px;background:#a8a8a8;"></div>
<div class="t" style="left:408.7px;top:1108.5px;font-size:12.5px;font-weight:400;color:#8e8e8e;">25</div>
<div class="a" style="left:486.5300000000001px;top:1124px;width:2px;height:21px;background:#a8a8a8;"></div>
<div class="t" style="left:489.5px;top:1108.5px;font-size:12.5px;font-weight:400;color:#8e8e8e;">30</div>
<div class="a" style="left:567.3800000000001px;top:1124px;width:2px;height:21px;background:#a8a8a8;"></div>
<div class="t" style="left:570.4px;top:1108.5px;font-size:12.5px;font-weight:400;color:#8e8e8e;">35</div>
<div class="a" style="left:648.2300000000001px;top:1124px;width:2px;height:21px;background:#a8a8a8;"></div>
<div class="t" style="left:651.2px;top:1108.5px;font-size:12.5px;font-weight:400;color:#8e8e8e;">40</div>
<div class="a" style="left:729.08px;top:1124px;width:2px;height:21px;background:#a8a8a8;"></div>
<div class="t" style="left:732.1px;top:1108.5px;font-size:12.5px;font-weight:400;color:#8e8e8e;">45</div>
<div class="a" style="left:809.9300000000001px;top:1124px;width:2px;height:21px;background:#a8a8a8;"></div>
<div class="t" style="left:812.9px;top:1108.5px;font-size:12.5px;font-weight:400;color:#8e8e8e;">50</div>
<div class="a" style="left:890.7800000000001px;top:1124px;width:2px;height:21px;background:#a8a8a8;"></div>
<div class="t" style="left:893.8px;top:1108.5px;font-size:12.5px;font-weight:400;color:#8e8e8e;">55</div>
<div class="a" style="left:971.6300000000001px;top:1124px;width:2px;height:21px;background:#a8a8a8;"></div>
<div class="t" style="left:974.6px;top:1108.5px;font-size:12.5px;font-weight:400;color:#8e8e8e;">60</div>
<div class="a" style="left:1052.48px;top:1124px;width:2px;height:21px;background:#a8a8a8;"></div>
<div class="t" style="left:1055.5px;top:1108.5px;font-size:12.5px;font-weight:400;color:#8e8e8e;">65</div>
<div class="a" style="left:1133.33px;top:1124px;width:2px;height:21px;background:#a8a8a8;"></div>
<div class="t" style="left:1136.3px;top:1108.5px;font-size:12.5px;font-weight:400;color:#8e8e8e;">70</div>
<div class="a" style="left:1214.18px;top:1124px;width:2px;height:21px;background:#a8a8a8;"></div>
<div class="t" style="left:1217.2px;top:1108.5px;font-size:12.5px;font-weight:400;color:#8e8e8e;">75</div>
<div class="a" style="left:1295.03px;top:1124px;width:2px;height:21px;background:#a8a8a8;"></div>
<div class="t" style="left:1298.0px;top:1108.5px;font-size:12.5px;font-weight:400;color:#8e8e8e;">80</div>
<div class="a" style="left:1375.88px;top:1124px;width:2px;height:21px;background:#a8a8a8;"></div>
<div class="t" style="left:1378.9px;top:1108.5px;font-size:12.5px;font-weight:400;color:#8e8e8e;">85</div>
<div class="a" style="left:1456.73px;top:1124px;width:2px;height:21px;background:#a8a8a8;"></div>
<div class="t" style="left:1459.7px;top:1108.5px;font-size:12.5px;font-weight:400;color:#8e8e8e;">90</div>
<div class="a" style="left:1537.5800000000002px;top:1124px;width:2px;height:21px;background:#a8a8a8;"></div>
<div class="t" style="left:1540.6px;top:1108.5px;font-size:12.5px;font-weight:400;color:#8e8e8e;">95</div>
<div class="a" style="left:1618.43px;top:1124px;width:2px;height:21px;background:#a8a8a8;"></div>
<div class="t" style="left:1621.4px;top:1108.5px;font-size:12.5px;font-weight:400;color:#8e8e8e;">100</div>
<div class="a" style="left:1699.2800000000002px;top:1124px;width:2px;height:21px;background:#a8a8a8;"></div>
<div class="t" style="left:1702.3px;top:1108.5px;font-size:12.5px;font-weight:400;color:#8e8e8e;">105</div>
<div class="a" style="left:1780.13px;top:1124px;width:2px;height:21px;background:#a8a8a8;"></div>
<div class="t" style="left:1783.1px;top:1108.5px;font-size:12.5px;font-weight:400;color:#8e8e8e;">110</div>
<div class="a" style="left:1860.98px;top:1124px;width:2px;height:21px;background:#a8a8a8;"></div>
<div class="t" style="left:1864.0px;top:1108.5px;font-size:12.5px;font-weight:400;color:#8e8e8e;">115</div>
<div class="a" style="left:1941.8300000000002px;top:1124px;width:2px;height:21px;background:#a8a8a8;"></div>
<div class="t" style="left:1944.8px;top:1108.5px;font-size:12.5px;font-weight:400;color:#8e8e8e;">120</div>
<div class="a" style="left:1977px;top:1116px;width:107px;height:22px;background:#2b2b2b;border-radius:3px"></div>
<div class="t" style="left:1983.0px;top:1121.4px;font-size:13.6px;font-weight:400;color:#dcdcdc;">27</div>
<svg class="a" style="left:2090px;top:1114px;" width="75" height="30" viewBox="0 0 75 30"><g fill="#c8c8c8"><rect x="6" y="4" width="2.5" height="14"/><path d="M9,11 L16,4 V18 Z M16,11 L23,4 V18 Z"/><rect x="38" y="4" width="2.5" height="14"/><path d="M41,11 L50,4 V18 Z"/></g><rect x="62" y="5" width="4" height="13" fill="#e88a3a"/><path d="M70,11 L76,5 V18 Z" fill="#c8c8c8"/><path d="M64,1 V22" stroke="#e88a3a" stroke-width="1" stroke-dasharray="1.5 1.5"/></svg>
<div class="a" style="left:0px;top:1148px;width:2165px;height:4px;background:#3b3b3b;"></div>
<div class="a" style="left:0px;top:1152px;width:2165px;height:37px;background:#4d4d4d;"></div>
<div class="a" style="left:9px;top:1159px;width:107px;height:30px;background:#2b2b2b;border-radius:4px"></div>
<div class="t" style="left:16.0px;top:1167.9px;font-size:13.6px;font-weight:400;color:#dcdcdc;">1</div>
<div class="a" style="left:126px;top:1159px;width:107px;height:30px;background:#2b2b2b;border-radius:4px"></div>
<div class="t" style="left:133.0px;top:1167.9px;font-size:13.6px;font-weight:400;color:#dcdcdc;">1</div>
<div class="a" style="left:242px;top:1158px;width:1547px;height:31px;background:#3d3d3d;"></div>
<div class="a" style="left:250px;top:1161px;width:930px;height:24px;background:#686868;border-radius:4px"></div>
<div class="a" style="left:255px;top:1165px;width:18px;height:17px;background:#b0b0b0;border-radius:4px"></div>
<div class="a" style="left:1157px;top:1165px;width:18px;height:17px;background:#b0b0b0;border-radius:4px"></div>
<div class="t" style="left:280.0px;top:1167.4px;font-size:13.6px;font-weight:400;color:#e0e0e0;">1</div>
<div class="t" style="left:1129.3px;top:1167.4px;font-size:13.6px;font-weight:400;color:#e0e0e0;">120</div>
<div class="a" style="left:1799px;top:1159px;width:106px;height:29px;background:#2b2b2b;border-radius:4px"></div>
<div class="t" style="left:1805.0px;top:1167.4px;font-size:13.6px;font-weight:400;color:#dcdcdc;">120</div>
<div class="a" style="left:1915px;top:1159px;width:107px;height:29px;background:#2b2b2b;border-radius:4px"></div>
<div class="t" style="left:1921.0px;top:1167.4px;font-size:13.6px;font-weight:400;color:#dcdcdc;">200</div>
<svg class="a" style="left:2024px;top:1158px;" width="36" height="30" viewBox="0 0 36 30"><path d="M3,2 V28 M3,8 L7,14 L3,20" stroke="#9a9a9a" stroke-width="1.2" fill="none"/><path d="M29,2 V28" stroke="#9a9a9a" stroke-width="1"/><rect x="28" y="8" width="2.5" height="12" fill="#9a9a9a"/></svg>
<div class="a" style="left:2071px;top:1161px;width:94px;height:24px;background:#686868;border-radius:3px 0 0 3px"></div>
<div class="t" style="left:2075.0px;top:1167.4px;font-size:13.6px;font-weight:400;color:#c8c8c8;letter-spacing:0.161px;">24 fps</div>
<div class="a" style="left:2160px;top:1161px;width:2px;height:24px;background:#4d4d4d;"></div>
<div class="a" style="left:0px;top:1195px;width:2165px;height:3px;background:#3b3b3b;"></div>
<div class="a" style="left:0px;top:1202px;width:2165px;height:16px;background:#484848;"></div>
<div class="a" style="left:1px;top:1203px;width:1px;height:1px;background:#8a8a8a;"></div>
<div class="a" style="left:1px;top:1207px;width:1px;height:1px;background:#8a8a8a;"></div>
<div class="a" style="left:1px;top:1211px;width:1px;height:1px;background:#8a8a8a;"></div>
<div class="a" style="left:1px;top:1215px;width:1px;height:1px;background:#8a8a8a;"></div>
<div class="t" style="left:21.0px;top:1209.7px;font-size:13px;font-weight:400;color:#d0d0d0;">MEL</div>
<div class="a" style="left:64px;top:1204px;width:806px;height:14px;background:#333333;border-radius:3px 3px 0 0"></div>
<div class="a" style="left:876px;top:1210px;width:1px;height:1px;background:#999;"></div>
<div class="a" style="left:876px;top:1214px;width:1px;height:1px;background:#999;"></div>
<div class="a" style="left:881px;top:1204px;width:1284px;height:14px;background:#333333;border-radius:3px 3px 0 0"></div>
<div class="a" style="left:217px;top:20px;width:1255px;height:1128px;background:#4f4f4f;box-shadow:0 0 6px rgba(0,0,0,0.35)"></div>
<div class="a" style="left:217px;top:20px;width:1255px;height:37px;background:#ffffff;"></div>
<svg class="a" style="left:228px;top:29px;" width="18" height="18" viewBox="0 0 18 18"><rect x="0" y="0" width="18" height="18" fill="#dff0f3"/><path d="M2.16,14.76 L3.6,2.16 L6.84,2.16 L9.0,8.64 L11.16,2.16 L14.4,2.16 L15.84,14.76 L12.959999999999999,14.76 L12.24,8.1 L10.080000000000002,12.959999999999999 L7.92,12.959999999999999 L5.76,8.1 L5.040000000000001,14.76 Z" fill="#1a8a9c"/></svg>
<div class="t" style="left:254.0px;top:31.6px;font-size:14.3px;font-weight:400;color:#8a8a8a;letter-spacing:-0.054px;">Arnold RenderView</div>
<div class="a" style="left:1327px;top:38px;width:13px;height:1px;background:#8a8a8a;"></div>
<div class="a" style="left:1382px;top:32px;width:12px;height:12px;background:transparent;border:1px solid #8a8a8a"></div>
<svg class="a" style="left:1437px;top:31px;" width="14" height="14" viewBox="0 0 14 14"><path d="M1,1 L13,13 M13,1 L1,13" stroke="#8a8a8a" stroke-width="1.1"/></svg>
<div class="t" style="left:232.0px;top:65.3px;font-size:13.8px;font-weight:400;color:#d4d4d4;letter-spacing:-0.309px;">File</div>
<div class="t" style="left:271.7px;top:65.3px;font-size:13.8px;font-weight:400;color:#d4d4d4;letter-spacing:0.570px;">Window</div>
<div class="t" style="left:343.4px;top:65.3px;font-size:13.8px;font-weight:400;color:#d4d4d4;letter-spacing:0.211px;">View</div>
<div class="t" style="left:392.2px;top:65.3px;font-size:13.8px;font-weight:400;color:#d4d4d4;letter-spacing:-0.128px;">Render</div>
<div class="a" style="left:225.6px;top:89px;width:106.4px;height:23px;background:#686868;border-radius:3px"></div>
<div class="a" style="left:308px;top:89px;width:2px;height:23px;background:#4d4d4d;"></div>
<svg class="a" style="left:315.5px;top:97.5px;" width="11" height="6" viewBox="0 0 11 6"><polygon points="0,0 11,0 5.5,6" fill="#c8c8c8"/></svg>
<div class="t" style="left:230.6px;top:94.9px;font-size:13.6px;font-weight:400;color:#c8c8c8;letter-spacing:-0.055px;">Beauty</div>
<div class="a" style="left:334.5px;top:87px;width:2px;height:28px;background:#333333;"></div>
<div class="a" style="left:340px;top:89px;width:126px;height:23px;background:#686868;border-radius:3px"></div>
<div class="a" style="left:441.7px;top:89px;width:2px;height:23px;background:#4d4d4d;"></div>
<svg class="a" style="left:449.35px;top:97.5px;" width="11" height="6" viewBox="0 0 11 6"><polygon points="0,0 11,0 5.5,6" fill="#c8c8c8"/></svg>
<div class="t" style="left:345.0px;top:94.9px;font-size:13.6px;font-weight:400;color:#c8c8c8;letter-spacing:0.019px;">perspShape</div>
<div class="a" style="left:469.5px;top:87px;width:2px;height:28px;background:#333333;"></div>
<svg class="a" style="left:474px;top:86px;" width="310" height="30" viewBox="0 0 310 30"><circle cx="14.3" cy="15" r="11.5" fill="none" stroke="#c8c8c8" stroke-width="1.6" stroke-dasharray="3.5 2.5"/><circle cx="14.3" cy="15" r="6.5" fill="#d8d8d8"/><rect x="33" y="1" width="1.6" height="28" fill="#333"/><circle cx="51.8" cy="15" r="10.5" fill="none" stroke="#c8c8c8" stroke-width="1.3"/><text x="51.8" y="18.5" font-size="9" fill="#c8c8c8" text-anchor="middle" font-family="Liberation Sans">RGB</text><rect x="75" y="4" width="22" height="22" fill="#3e3e3e"/><rect x="107" y="4" width="28" height="22" fill="#464646"/><circle cx="86" cy="15" r="8.5" fill="#d0d0d0"/><path d="M86,15 V6.5 A8.5,8.5 0 0 0 77.5,15 Z M86,15 V23.5 A8.5,8.5 0 0 0 94.5,15 Z" fill="#3e3e3e"/><text x="109" y="21" font-size="15" font-weight="700" fill="#d4d4d4" font-family="Liberation Sans" letter-spacing="-0.5">1:1</text><rect x="138.8" y="1" width="1.6" height="28" fill="#333"/><rect x="151" y="8" width="13" height="13" fill="#4ab4d0" stroke="#c8c8c8" stroke-width="1.5"/><path d="M148,8 H167 M148,21 H167 M151,5 V24 M164,5 V24" stroke="#c8c8c8" stroke-width="1.2"/><circle cx="187" cy="15" r="8" fill="#c8c8c8"/><circle cx="187" cy="15" r="3" fill="#4a4a4a"/><path d="M187,7 L184,13 M195,15 L189,12 M187,23 L190,17 M179,15 L185,18" stroke="#4a4a4a" stroke-width="1.5"/><path d="M199,15 H260" stroke="#111" stroke-width="2.2"/><rect x="226.6" y="6" width="5.5" height="18" fill="#c8c8c8"/></svg>
<div class="a" style="left:736.7px;top:91.3px;width:39px;height:19.5px;background:#2b2b2b;border-radius:3px"></div>
<div class="t" style="left:742.0px;top:94.9px;font-size:13.6px;font-weight:400;color:#dcdcdc;">0</div>
<div class="a" style="left:1400px;top:92px;width:15px;height:15px;background:#d0402e;"></div>
<svg class="a" style="left:1421px;top:88px;" width="60" height="26" viewBox="0 0 60 26"><circle cx="6" cy="14.5" r="2.3" fill="#c8c8c8"/><path d="M3,22 L18,4" stroke="#c8c8c8" stroke-width="1.3"/><path d="M10,13 C13,16 12,19 10,22 M13,9 C18,13 17,19 14,24 M15,5 C21,11 20,19 16,25" stroke="#c8c8c8" stroke-width="1.2" fill="none"/><polygon points="41.20,13.00 43.34,14.66 42.85,16.25 40.16,16.44 39.38,17.38 39.72,20.07 38.25,20.85 36.21,19.08 35.00,19.20 33.34,21.34 31.75,20.85 31.56,18.16 30.62,17.38 27.93,17.72 27.15,16.25 28.92,14.21 28.80,13.00 26.66,11.34 27.15,9.75 29.84,9.56 30.62,8.62 30.28,5.93 31.75,5.15 33.79,6.92 35.00,6.80 36.66,4.66 38.25,5.15 38.44,7.84 39.38,8.62 42.07,8.28 42.85,9.75 41.08,11.79" fill="#d0d0d0"/><circle cx="35" cy="13" r="3" fill="#4f4f4f"/></svg>
<div class="a" style="left:220px;top:119.5px;width:1249px;height:1003px;background:#2b2b2b;"></div>
<div class="a" style="left:220px;top:200px;width:1249px;height:795px;background:#000000;"></div>
<div class="a" style="left:218px;top:1123px;width:1253px;height:25px;background:linear-gradient(90deg,#434343,#4e4e4e)"></div>
<div class="t" style="left:228.0px;top:1129.4px;font-size:13.6px;font-weight:400;color:#cfcfcf;">Rendering | 960x540 (121%) | perspShape  | samples 1/2/2/2/2/2</div>
<div class="a" style="left:1326px;top:1126px;width:114px;height:16px;background:#2a2a2a;border:1px solid #1e1e1e;border-top-color:#555"></div>
<div class="a" style="left:1329px;top:1128px;width:5px;height:12px;background:#5a9ad0;border-radius:3px 0 0 3px"></div>
<div class="t" style="left:1373.6px;top:1129.2px;font-size:13px;font-weight:700;color:#e0e0e0;">4%</div>
<div class="a" style="left:1443.6px;top:1126px;width:25.4px;height:16px;background:#3a3a3a;border:1px solid #2a2a2a"></div>
<svg class="a" style="left:1449px;top:1127px;" width="16" height="14" viewBox="0 0 16 14"><rect x="1" y="3" width="13" height="9" fill="#d8d8d8"/><rect x="3" y="1" width="4" height="3" fill="#d8d8d8"/><circle cx="7.5" cy="7.5" r="2.8" fill="#555"/><circle cx="7.5" cy="7.5" r="1.3" fill="#aaa"/></svg>
<div class="a" style="left:1469px;top:198px;width:700px;height:424px;background:#4d4d4d;box-shadow:0 0 6px rgba(0,0,0,0.35)"></div>
<div class="a" style="left:1469px;top:198px;width:700px;height:37px;background:#ffffff;"></div>
<svg class="a" style="left:1479px;top:206.6px;" width="18.5" height="18.5" viewBox="0 0 18.5 18.5"><rect x="0" y="0" width="18.5" height="18.5" fill="#dff0f3"/><path d="M2.2199999999999998,15.17 L3.7,2.2199999999999998 L7.03,2.2199999999999998 L9.25,8.879999999999999 L11.47,2.2199999999999998 L14.8,2.2199999999999998 L16.28,15.17 L13.32,15.17 L12.58,8.325000000000001 L10.360000000000001,13.32 L8.14,13.32 L5.92,8.325000000000001 L5.180000000000001,15.17 Z" fill="#1a8a9c"/></svg>
<div class="t" style="left:1505.0px;top:210.1px;font-size:14.3px;font-weight:400;color:#141414;letter-spacing:0.063px;">fluidShape1.opacity</div>
<div class="a" style="left:2103px;top:216px;width:12px;height:1.2px;background:#222;"></div>
<div class="a" style="left:2157px;top:210px;width:12px;height:12px;background:transparent;border:1px solid #222"></div>
<div class="a" style="left:1469px;top:235px;width:700px;height:3px;background:#262626;"></div>
<div class="a" style="left:1480.7px;top:235px;width:690px;height:331px;background:#2a2a2a;"></div>
<div class="a" style="left:1482.4px;top:238px;width:690px;height:325px;background:#a3a3a3;"></div>
<svg class="a" style="left:1470px;top:230px;" width="695" height="360" viewBox="0 0 695 360"><path d="M11,334 L73.2,325 L125.5,290.5 L139.4,8 L176.6,333.6 Z" fill="#808080"/><path d="M11,334 L73.2,325 L125.5,290.5 L139.4,8 L176.6,333.6" fill="none" stroke="#141414" stroke-width="1.4"/><g fill="none" stroke="#456e94" stroke-width="1.2"><circle cx="11.5" cy="333" r="4"/><circle cx="73.2" cy="325" r="4"/><circle cx="125.5" cy="290.5" r="4"/><circle cx="139.4" cy="8.5" r="4"/></g><circle cx="176.6" cy="333" r="4.5" fill="#444" stroke="#e0e0e0" stroke-width="1.5"/><rect x="6.5" y="339.3" width="10.5" height="10.5" fill="#000"/><g stroke="#1a1a1a" stroke-width="1.2"><rect x="68" y="339.5" width="10" height="10" fill="#3a3a3a"/><path d="M68,339.5 L78,349.5 M78,339.5 L68,349.5"/><rect x="120" y="339.5" width="10" height="10" fill="#3a3a3a"/><path d="M120,339.5 L130,349.5 M130,339.5 L120,349.5"/></g><rect x="133.5" y="339.5" width="10" height="10" fill="#f0f0f0" stroke="#333" stroke-width="1"/><path d="M134,340 L143,349 M143,340 L134,349" stroke="#333" stroke-width="1.2"/><rect x="171.5" y="339.5" width="10.5" height="10.5" fill="#111" stroke="#e0e0e0" stroke-width="1.6"/><path d="M172,340 L181.5,349.5 M181.5,340 L172,349.5" stroke="#e0e0e0" stroke-width="1.2"/></svg>
<div class="t" style="left:1494.3px;top:600.8px;font-size:13.8px;font-weight:400;color:#d0d0d0;letter-spacing:0.373px;">Interpolation:</div>
<div class="a" style="left:1585px;top:595.2px;width:100.7px;height:22.4px;background:#686868;border-radius:3px"></div>
<div class="a" style="left:1661px;top:595.2px;width:2px;height:22.4px;background:#4d4d4d;"></div>
<svg class="a" style="left:1668.85px;top:603.4000000000001px;" width="11" height="6" viewBox="0 0 11 6"><polygon points="0,0 11,0 5.5,6" fill="#c8c8c8"/></svg>
<div class="t" style="left:1590.0px;top:600.8px;font-size:13.6px;font-weight:400;color:#c8c8c8;letter-spacing:0.201px;">Linear</div>
<div class="t" style="left:1726.8px;top:600.8px;font-size:13.8px;font-weight:400;color:#d0d0d0;letter-spacing:-0.223px;">Selected value:</div>
<div class="a" style="left:1822.4px;top:597px;width:65.6px;height:21px;background:#2b2b2b;border-radius:3px"></div>
<div class="t" style="left:1828.0px;top:601.9px;font-size:13.6px;font-weight:400;color:#dcdcdc;letter-spacing:-0.263px;">0.0000</div>
<div class="t" style="left:1931.0px;top:600.8px;font-size:13.8px;font-weight:400;color:#d0d0d0;letter-spacing:0.088px;">Selected position:</div>
<div class="a" style="left:2045px;top:596px;width:67px;height:23px;background:#2b2b2b;border:1.5px solid #4d7fae;border-radius:3px"></div>
<div class="t" style="left:2052.0px;top:601.9px;font-size:13.6px;font-weight:400;color:#e4e4e4;letter-spacing:-0.263px;">0.2194</div>
<div class="a" style="left:2093px;top:600px;width:1px;height:15px;background:#e0e0e0;"></div>
<svg class="a" style="left:600px;top:360px;" width="380" height="540" viewBox="0 0 380 540"><defs><filter id="b1" x="-20%" y="-20%" width="140%" height="140%"><feGaussianBlur stdDeviation="1.2"/></filter><filter id="b2" x="-20%" y="-20%" width="140%" height="140%"><feGaussianBlur stdDeviation="2.2"/></filter><filter id="b4" x="-40%" y="-40%" width="180%" height="180%"><feGaussianBlur stdDeviation="4"/></filter><filter id="b6" x="-40%" y="-40%" width="180%" height="180%"><feGaussianBlur stdDeviation="6"/></filter><filter id="grain" x="0" y="0" width="100%" height="100%"><feTurbulence type="fractalNoise" baseFrequency="0.45" numOctaves="2" seed="5" result="n"/><feColorMatrix in="n" type="matrix" values="0 0 0 0 0  0 0 0 0 0  0 0 0 0 0  0 0 0 -3.2 2.35" result="m"/><feComposite in="SourceGraphic" in2="m" operator="in"/></filter><linearGradient id="colg" gradientUnits="userSpaceOnUse" x1="0" y1="25" x2="0" y2="470"><stop offset="0" stop-color="#2a1604"/><stop offset="0.2" stop-color="#452506"/><stop offset="0.4" stop-color="#84480c"/><stop offset="0.62" stop-color="#a25810"/><stop offset="0.8" stop-color="#b4621a"/><stop offset="0.88" stop-color="#9a5210"/><stop offset="0.96" stop-color="#4a2806"/><stop offset="1" stop-color="#1a0c02"/></linearGradient><linearGradient id="graing" gradientUnits="userSpaceOnUse" x1="0" y1="25" x2="0" y2="470"><stop offset="0" stop-color="#000" stop-opacity="0.65"/><stop offset="0.5" stop-color="#000" stop-opacity="0.4"/><stop offset="1" stop-color="#000" stop-opacity="0.25"/></linearGradient></defs><path d="M99.0,58.0 C99.8,52.7 104.2,44.3 108.0,40.0 C111.8,35.7 113.7,34.0 122.0,32.0 C130.3,30.0 145.5,27.0 158.0,28.0 C170.5,29.0 185.0,35.7 197.0,38.0 C209.0,40.3 219.5,40.2 230.0,42.0 C240.5,43.8 251.7,44.7 260.0,49.0 C268.3,53.3 276.5,60.3 280.0,68.0 C283.5,75.7 282.0,86.3 281.0,95.0 C280.0,103.7 276.2,109.2 274.0,120.0 C271.8,130.8 271.2,149.2 268.0,160.0 C264.8,170.8 258.2,176.2 255.0,185.0 C251.8,193.8 252.3,199.2 249.0,213.0 C245.7,226.8 233.7,255.7 235.0,268.0 C236.3,280.3 250.3,278.3 257.0,287.0 C263.7,295.7 271.7,307.7 275.0,320.0 C278.3,332.3 274.8,348.2 277.0,361.0 C279.2,373.8 286.2,384.3 288.0,397.0 C289.8,409.7 285.8,427.0 288.0,437.0 C290.2,447.0 295.0,451.2 301.0,457.0 C307.0,462.8 327.5,466.0 324.0,472.0 C320.5,478.0 304.0,489.0 280.0,493.0 C256.0,497.0 216.7,497.2 180.0,496.0 C143.3,494.8 82.7,490.0 60.0,486.0 C37.3,482.0 41.8,477.5 44.0,472.0 C46.2,466.5 64.3,462.7 73.0,453.0 C81.7,443.3 89.8,423.2 96.0,414.0 C102.2,404.8 103.7,402.7 110.0,398.0 C116.3,393.3 129.5,395.0 134.0,386.0 C138.5,377.0 137.8,356.5 137.0,344.0 C136.2,331.5 131.5,320.0 129.0,311.0 C126.5,302.0 120.5,299.5 122.0,290.0 C123.5,280.5 138.2,264.0 138.0,254.0 C137.8,244.0 123.8,238.0 121.0,230.0 C118.2,222.0 117.5,214.3 121.0,206.0 C124.5,197.7 138.0,184.2 142.0,180.0 C146.0,175.8 145.7,186.8 145.0,181.0 C144.3,175.2 139.5,155.2 138.0,145.0 C136.5,134.8 137.0,127.8 136.0,120.0 C135.0,112.2 135.0,103.8 132.0,98.0 C129.0,92.2 122.8,89.3 118.0,85.0 C113.2,80.7 106.2,76.5 103.0,72.0 C99.8,67.5 98.2,63.3 99.0,58.0Z" fill="#1e0f03" opacity="0.6" filter="url(#b4)"/><g filter="url(#b2)"><path d="M99.0,58.0 C99.8,52.7 104.2,44.3 108.0,40.0 C111.8,35.7 113.7,34.0 122.0,32.0 C130.3,30.0 145.5,27.0 158.0,28.0 C170.5,29.0 185.0,35.7 197.0,38.0 C209.0,40.3 219.5,40.2 230.0,42.0 C240.5,43.8 251.7,44.7 260.0,49.0 C268.3,53.3 276.5,60.3 280.0,68.0 C283.5,75.7 282.0,86.3 281.0,95.0 C280.0,103.7 276.2,109.2 274.0,120.0 C271.8,130.8 271.2,149.2 268.0,160.0 C264.8,170.8 258.2,176.2 255.0,185.0 C251.8,193.8 252.3,199.2 249.0,213.0 C245.7,226.8 233.7,255.7 235.0,268.0 C236.3,280.3 250.3,278.3 257.0,287.0 C263.7,295.7 271.7,307.7 275.0,320.0 C278.3,332.3 274.8,348.2 277.0,361.0 C279.2,373.8 286.2,384.3 288.0,397.0 C289.8,409.7 285.8,427.0 288.0,437.0 C290.2,447.0 295.0,451.2 301.0,457.0 C307.0,462.8 327.5,466.0 324.0,472.0 C320.5,478.0 304.0,489.0 280.0,493.0 C256.0,497.0 216.7,497.2 180.0,496.0 C143.3,494.8 82.7,490.0 60.0,486.0 C37.3,482.0 41.8,477.5 44.0,472.0 C46.2,466.5 64.3,462.7 73.0,453.0 C81.7,443.3 89.8,423.2 96.0,414.0 C102.2,404.8 103.7,402.7 110.0,398.0 C116.3,393.3 129.5,395.0 134.0,386.0 C138.5,377.0 137.8,356.5 137.0,344.0 C136.2,331.5 131.5,320.0 129.0,311.0 C126.5,302.0 120.5,299.5 122.0,290.0 C123.5,280.5 138.2,264.0 138.0,254.0 C137.8,244.0 123.8,238.0 121.0,230.0 C118.2,222.0 117.5,214.3 121.0,206.0 C124.5,197.7 138.0,184.2 142.0,180.0 C146.0,175.8 145.7,186.8 145.0,181.0 C144.3,175.2 139.5,155.2 138.0,145.0 C136.5,134.8 137.0,127.8 136.0,120.0 C135.0,112.2 135.0,103.8 132.0,98.0 C129.0,92.2 122.8,89.3 118.0,85.0 C113.2,80.7 106.2,76.5 103.0,72.0 C99.8,67.5 98.2,63.3 99.0,58.0Z" fill="url(#colg)" opacity="0.85"/></g><g filter="url(#grain)"><path d="M99.0,58.0 C99.8,52.7 104.2,44.3 108.0,40.0 C111.8,35.7 113.7,34.0 122.0,32.0 C130.3,30.0 145.5,27.0 158.0,28.0 C170.5,29.0 185.0,35.7 197.0,38.0 C209.0,40.3 219.5,40.2 230.0,42.0 C240.5,43.8 251.7,44.7 260.0,49.0 C268.3,53.3 276.5,60.3 280.0,68.0 C283.5,75.7 282.0,86.3 281.0,95.0 C280.0,103.7 276.2,109.2 274.0,120.0 C271.8,130.8 271.2,149.2 268.0,160.0 C264.8,170.8 258.2,176.2 255.0,185.0 C251.8,193.8 252.3,199.2 249.0,213.0 C245.7,226.8 233.7,255.7 235.0,268.0 C236.3,280.3 250.3,278.3 257.0,287.0 C263.7,295.7 271.7,307.7 275.0,320.0 C278.3,332.3 274.8,348.2 277.0,361.0 C279.2,373.8 286.2,384.3 288.0,397.0 C289.8,409.7 285.8,427.0 288.0,437.0 C290.2,447.0 295.0,451.2 301.0,457.0 C307.0,462.8 327.5,466.0 324.0,472.0 C320.5,478.0 304.0,489.0 280.0,493.0 C256.0,497.0 216.7,497.2 180.0,496.0 C143.3,494.8 82.7,490.0 60.0,486.0 C37.3,482.0 41.8,477.5 44.0,472.0 C46.2,466.5 64.3,462.7 73.0,453.0 C81.7,443.3 89.8,423.2 96.0,414.0 C102.2,404.8 103.7,402.7 110.0,398.0 C116.3,393.3 129.5,395.0 134.0,386.0 C138.5,377.0 137.8,356.5 137.0,344.0 C136.2,331.5 131.5,320.0 129.0,311.0 C126.5,302.0 120.5,299.5 122.0,290.0 C123.5,280.5 138.2,264.0 138.0,254.0 C137.8,244.0 123.8,238.0 121.0,230.0 C118.2,222.0 117.5,214.3 121.0,206.0 C124.5,197.7 138.0,184.2 142.0,180.0 C146.0,175.8 145.7,186.8 145.0,181.0 C144.3,175.2 139.5,155.2 138.0,145.0 C136.5,134.8 137.0,127.8 136.0,120.0 C135.0,112.2 135.0,103.8 132.0,98.0 C129.0,92.2 122.8,89.3 118.0,85.0 C113.2,80.7 106.2,76.5 103.0,72.0 C99.8,67.5 98.2,63.3 99.0,58.0Z" fill="url(#graing)"/></g><ellipse cx="212" cy="188" rx="16" ry="22" fill="#a05a14" opacity="0.6" filter="url(#b4)"/><ellipse cx="197" cy="340" rx="14" ry="45" fill="#a35a16" opacity="0.55" filter="url(#b4)"/><ellipse cx="145" cy="330" rx="10" ry="40" fill="#a85e16" opacity="0.55" filter="url(#b4)"/><ellipse cx="266" cy="340" rx="9" ry="40" fill="#9a5412" opacity="0.5" filter="url(#b4)"/><ellipse cx="148" cy="252" rx="10" ry="16" fill="#8e4e10" opacity="0.5" filter="url(#b4)"/><ellipse cx="220" cy="270" rx="14" ry="20" fill="#8a4a10" opacity="0.5" filter="url(#b4)"/><ellipse cx="195" cy="140" rx="22" ry="14" fill="#55300a" opacity="0.5" filter="url(#b4)"/><path d="M122.0,290.0 L129.0,316.0 L138.0,344.0 L142.0,380.0 L145.0,400.0" fill="none" stroke="#b8681a" stroke-width="3" opacity="0.7" stroke-linecap="round" filter="url(#b2)"/><path d="M276.0,320.0 L278.0,361.0 L284.0,400.0" fill="none" stroke="#b0641a" stroke-width="3" opacity="0.6" stroke-linecap="round" filter="url(#b2)"/><path d="M203.0,290.0 L205.0,340.0 L210.0,400.0 L212.0,435.0" fill="none" stroke="#c87a26" stroke-width="2.2" opacity="0.75" stroke-linecap="round" filter="url(#b2)"/><path d="M142.0,262.0 L162.0,280.0 L192.0,288.0 L230.0,280.0" fill="none" stroke="#b06418" stroke-width="3" opacity="0.6" stroke-linecap="round" filter="url(#b2)"/><path d="M160.0,112.0 L176.0,142.0 L190.0,180.0 L203.0,222.0 L210.0,280.0" fill="none" stroke="#a05814" stroke-width="3" opacity="0.55" stroke-linecap="round" filter="url(#b2)"/><path d="M252.0,200.0 L246.0,240.0 L236.0,268.0 L258.0,288.0 L272.0,310.0" fill="none" stroke="#a65c16" stroke-width="3" opacity="0.6" stroke-linecap="round" filter="url(#b2)"/><path d="M126.0,202.0 L134.0,238.0 L146.0,256.0" fill="none" stroke="#9a5414" stroke-width="3" opacity="0.55" stroke-linecap="round" filter="url(#b2)"/><path d="M238.0,340.0 L236.0,380.0 L240.0,420.0" fill="none" stroke="#b06418" stroke-width="2" opacity="0.5" stroke-linecap="round" filter="url(#b2)"/><path d="M165.0,340.0 L168.0,380.0 L172.0,420.0" fill="none" stroke="#b86a1c" stroke-width="2" opacity="0.5" stroke-linecap="round" filter="url(#b2)"/><path d="M121.0,206.0 L125.0,232.0 L138.0,254.0" fill="none" stroke="#8a4a10" stroke-width="3" opacity="0.6" stroke-linecap="round" filter="url(#b2)"/><ellipse cx="217" cy="80" rx="11.5" ry="8.8" fill="#000" opacity="0.56" filter="url(#b6)"/><ellipse cx="248" cy="116" rx="18.4" ry="19.8" fill="#000" opacity="0.60" filter="url(#b6)"/><ellipse cx="167" cy="137" rx="18.4" ry="24.2" fill="#000" opacity="0.52" filter="url(#b6)"/><ellipse cx="167" cy="242" rx="9.2" ry="15.4" fill="#000" opacity="0.44" filter="url(#b6)"/><ellipse cx="188" cy="226" rx="6.9" ry="13.2" fill="#000" opacity="0.40" filter="url(#b6)"/><ellipse cx="168" cy="282" rx="16.1" ry="11.0" fill="#000" opacity="0.40" filter="url(#b6)"/><ellipse cx="158" cy="338" rx="9.2" ry="19.8" fill="#000" opacity="0.40" filter="url(#b6)"/><ellipse cx="242" cy="322" rx="14.9" ry="26.4" fill="#000" opacity="0.44" filter="url(#b6)"/><ellipse cx="222" cy="338" rx="9.2" ry="13.2" fill="#000" opacity="0.36" filter="url(#b6)"/><ellipse cx="226" cy="198" rx="11.5" ry="19.8" fill="#000" opacity="0.40" filter="url(#b6)"/><ellipse cx="178" cy="191" rx="6.9" ry="8.8" fill="#000" opacity="0.36" filter="url(#b6)"/><ellipse cx="116" cy="102" rx="16.1" ry="13.2" fill="#000" opacity="0.76" filter="url(#b6)"/><ellipse cx="245" cy="380" rx="11.5" ry="15.4" fill="#000" opacity="0.28" filter="url(#b6)"/><ellipse cx="262" cy="160" rx="6.9" ry="22.0" fill="#000" opacity="0.40" filter="url(#b6)"/><ellipse cx="112" cy="50" rx="9.2" ry="11.0" fill="#000" opacity="0.48" filter="url(#b6)"/><path d="M112.0,52.0 C116.7,50.2 129.5,43.0 140.0,41.0 C150.5,39.0 165.0,39.2 175.0,40.0 C185.0,40.8 189.2,44.0 200.0,46.0 C210.8,48.0 229.7,49.7 240.0,52.0 C250.3,54.3 258.3,58.7 262.0,60.0" fill="none" stroke="#4a2808" stroke-width="12" opacity="0.5" stroke-linecap="round" filter="url(#b4)"/><path d="M118.0,56.0 C122.5,54.3 134.7,46.5 145.0,46.0 C155.3,45.5 170.0,49.7 180.0,53.0 C190.0,56.3 199.0,61.5 205.0,66.0 C211.0,70.5 214.2,77.7 216.0,80.0" fill="none" stroke="#000" stroke-width="8" opacity="0.85" stroke-linecap="round" filter="url(#b2)"/><path d="M107.0,72.0 C110.5,73.0 118.8,76.7 128.0,78.0 C137.2,79.3 150.0,78.5 162.0,80.0 C174.0,81.5 189.3,84.3 200.0,87.0 C210.7,89.7 221.7,94.5 226.0,96.0" fill="none" stroke="#5e340b" stroke-width="16" opacity="0.65" stroke-linecap="round" filter="url(#b4)"/><path d="M232.0,96.0 C234.3,94.3 241.0,88.0 246.0,86.0 C251.0,84.0 258.0,82.3 262.0,84.0 C266.0,85.7 269.0,89.2 270.0,96.0 C271.0,102.8 268.3,120.2 268.0,125.0" fill="none" stroke="#56300a" stroke-width="9" opacity="0.5" stroke-linecap="round" filter="url(#b4)"/><path d="M242.0,87.0 C245.3,86.8 257.7,82.2 262.0,86.0 C266.3,89.8 268.0,101.0 268.0,110.0 C268.0,119.0 263.0,135.0 262.0,140.0" fill="none" stroke="#000" stroke-width="6" opacity="0.5" stroke-linecap="round" filter="url(#b2)"/><ellipse cx="190" cy="422" rx="92" ry="32" fill="#a05814" opacity="0.5" filter="url(#b6)"/><rect x="181" y="377" width="3" height="3" fill="#a65c16" opacity="0.84"/><rect x="190" y="377" width="3" height="3" fill="#c47422" opacity="0.57"/><rect x="217" y="377" width="3" height="3" fill="#1c0c02" opacity="0.73"/><rect x="238" y="377" width="3" height="3" fill="#c47422" opacity="0.73"/><rect x="253" y="377" width="3" height="3" fill="#5a2e08" opacity="0.76"/><rect x="142" y="380" width="3" height="3" fill="#b8681c" opacity="0.86"/><rect x="169" y="380" width="3" height="3" fill="#8a4a10" opacity="0.69"/><rect x="187" y="380" width="3" height="3" fill="#b8681c" opacity="0.75"/><rect x="190" y="380" width="3" height="3" fill="#d0842c" opacity="0.72"/><rect x="193" y="380" width="3" height="3" fill="#3a1c04" opacity="0.56"/><rect x="250" y="380" width="3" height="3" fill="#5a2e08" opacity="0.57"/><rect x="280" y="380" width="3" height="3" fill="#5a2e08" opacity="0.68"/><rect x="136" y="383" width="3" height="3" fill="#6e3a0a" opacity="0.66"/><rect x="139" y="383" width="3" height="3" fill="#3a1c04" opacity="0.59"/><rect x="142" y="383" width="3" height="3" fill="#d0842c" opacity="0.85"/><rect x="151" y="383" width="3" height="3" fill="#5a2e08" opacity="0.76"/><rect x="160" y="383" width="3" height="3" fill="#c47422" opacity="0.77"/><rect x="172" y="383" width="3" height="3" fill="#e0902e" opacity="0.57"/><rect x="181" y="383" width="3" height="3" fill="#d0842c" opacity="0.71"/><rect x="217" y="383" width="3" height="3" fill="#d0842c" opacity="0.95"/><rect x="238" y="383" width="3" height="3" fill="#c47422" opacity="0.69"/><rect x="241" y="383" width="3" height="3" fill="#5a2e08" opacity="0.77"/><rect x="253" y="383" width="3" height="3" fill="#e0902e" opacity="0.83"/><rect x="142" y="386" width="3" height="3" fill="#c47422" opacity="0.87"/><rect x="151" y="386" width="3" height="3" fill="#d0842c" opacity="0.97"/><rect x="208" y="386" width="3" height="3" fill="#d0842c" opacity="0.66"/><rect x="211" y="386" width="3" height="3" fill="#5a2e08" opacity="0.75"/><rect x="229" y="386" width="3" height="3" fill="#b8681c" opacity="0.87"/><rect x="238" y="386" width="3" height="3" fill="#1c0c02" opacity="0.79"/><rect x="250" y="386" width="3" height="3" fill="#e0902e" opacity="0.96"/><rect x="253" y="386" width="3" height="3" fill="#e0902e" opacity="0.72"/><rect x="259" y="386" width="3" height="3" fill="#c47422" opacity="0.72"/><rect x="157" y="389" width="3" height="3" fill="#8a4a10" opacity="0.74"/><rect x="166" y="389" width="3" height="3" fill="#a65c16" opacity="0.91"/><rect x="169" y="389" width="3" height="3" fill="#b8681c" opacity="0.76"/><rect x="211" y="389" width="3" height="3" fill="#8a4a10" opacity="0.67"/><rect x="229" y="389" width="3" height="3" fill="#d0842c" opacity="0.81"/><rect x="232" y="389" width="3" height="3" fill="#8a4a10" opacity="0.55"/><rect x="241" y="389" width="3" height="3" fill="#8a4a10" opacity="0.91"/><rect x="253" y="389" width="3" height="3" fill="#a65c16" opacity="0.96"/><rect x="262" y="389" width="3" height="3" fill="#d0842c" opacity="0.75"/><rect x="277" y="389" width="3" height="3" fill="#d0842c" opacity="0.61"/><rect x="283" y="389" width="3" height="3" fill="#3a1c04" opacity="0.56"/><rect x="148" y="392" width="3" height="3" fill="#8a4a10" opacity="0.83"/><rect x="160" y="392" width="3" height="3" fill="#3a1c04" opacity="0.65"/><rect x="181" y="392" width="3" height="3" fill="#c47422" opacity="0.61"/><rect x="184" y="392" width="3" height="3" fill="#d0842c" opacity="0.72"/><rect x="199" y="392" width="3" height="3" fill="#c47422" opacity="0.59"/><rect x="235" y="392" width="3" height="3" fill="#8a4a10" opacity="0.78"/><rect x="241" y="392" width="3" height="3" fill="#3a1c04" opacity="0.63"/><rect x="244" y="392" width="3" height="3" fill="#5a2e08" opacity="0.81"/><rect x="247" y="392" width="3" height="3" fill="#c47422" opacity="0.89"/><rect x="265" y="392" width="3" height="3" fill="#b8681c" opacity="0.63"/><rect x="277" y="392" width="3" height="3" fill="#5a2e08" opacity="0.70"/><rect x="280" y="392" width="3" height="3" fill="#e0902e" opacity="0.97"/><rect x="124" y="395" width="3" height="3" fill="#b8681c" opacity="0.92"/><rect x="151" y="395" width="3" height="3" fill="#a65c16" opacity="0.60"/><rect x="163" y="395" width="3" height="3" fill="#1c0c02" opacity="0.70"/><rect x="193" y="395" width="3" height="3" fill="#e0902e" opacity="0.66"/><rect x="208" y="395" width="3" height="3" fill="#1c0c02" opacity="0.96"/><rect x="232" y="395" width="3" height="3" fill="#c47422" opacity="0.72"/><rect x="259" y="395" width="3" height="3" fill="#d0842c" opacity="0.71"/><rect x="262" y="395" width="3" height="3" fill="#8a4a10" opacity="0.97"/><rect x="271" y="395" width="3" height="3" fill="#8a4a10" opacity="0.57"/><rect x="274" y="395" width="3" height="3" fill="#a65c16" opacity="0.57"/><rect x="277" y="395" width="3" height="3" fill="#8a4a10" opacity="0.99"/><rect x="283" y="395" width="3" height="3" fill="#a65c16" opacity="0.87"/><rect x="109" y="398" width="3" height="3" fill="#6e3a0a" opacity="0.61"/><rect x="121" y="398" width="3" height="3" fill="#c47422" opacity="0.64"/><rect x="124" y="398" width="3" height="3" fill="#c47422" opacity="0.71"/><rect x="127" y="398" width="3" height="3" fill="#8a4a10" opacity="0.67"/><rect x="151" y="398" width="3" height="3" fill="#1c0c02" opacity="0.90"/><rect x="157" y="398" width="3" height="3" fill="#3a1c04" opacity="0.83"/><rect x="163" y="398" width="3" height="3" fill="#3a1c04" opacity="0.95"/><rect x="166" y="398" width="3" height="3" fill="#1c0c02" opacity="0.67"/><rect x="169" y="398" width="3" height="3" fill="#3a1c04" opacity="0.79"/><rect x="172" y="398" width="3" height="3" fill="#3a1c04" opacity="0.80"/><rect x="178" y="398" width="3" height="3" fill="#b8681c" opacity="0.70"/><rect x="184" y="398" width="3" height="3" fill="#c47422" opacity="0.75"/><rect x="202" y="398" width="3" height="3" fill="#3a1c04" opacity="0.84"/><rect x="208" y="398" width="3" height="3" fill="#e0902e" opacity="0.92"/><rect x="211" y="398" width="3" height="3" fill="#8a4a10" opacity="0.59"/><rect x="217" y="398" width="3" height="3" fill="#6e3a0a" opacity="0.92"/><rect x="226" y="398" width="3" height="3" fill="#e0902e" opacity="0.82"/><rect x="238" y="398" width="3" height="3" fill="#b8681c" opacity="0.71"/><rect x="244" y="398" width="3" height="3" fill="#6e3a0a" opacity="0.81"/><rect x="262" y="398" width="3" height="3" fill="#a65c16" opacity="0.99"/><rect x="271" y="398" width="3" height="3" fill="#c47422" opacity="0.71"/><rect x="277" y="398" width="3" height="3" fill="#1c0c02" opacity="0.91"/><rect x="289" y="398" width="3" height="3" fill="#d0842c" opacity="0.92"/><rect x="106" y="401" width="3" height="3" fill="#3a1c04" opacity="0.81"/><rect x="118" y="401" width="3" height="3" fill="#8a4a10" opacity="0.59"/><rect x="121" y="401" width="3" height="3" fill="#d0842c" opacity="0.59"/><rect x="127" y="401" width="3" height="3" fill="#e0902e" opacity="0.74"/><rect x="139" y="401" width="3" height="3" fill="#d0842c" opacity="0.70"/><rect x="163" y="401" width="3" height="3" fill="#e0902e" opacity="0.71"/><rect x="166" y="401" width="3" height="3" fill="#c47422" opacity="0.95"/><rect x="184" y="401" width="3" height="3" fill="#b8681c" opacity="0.66"/><rect x="187" y="401" width="3" height="3" fill="#e0902e" opacity="0.63"/><rect x="190" y="401" width="3" height="3" fill="#d0842c" opacity="0.67"/><rect x="202" y="401" width="3" height="3" fill="#3a1c04" opacity="0.96"/><rect x="208" y="401" width="3" height="3" fill="#c47422" opacity="0.69"/><rect x="211" y="401" width="3" height="3" fill="#8a4a10" opacity="0.66"/><rect x="220" y="401" width="3" height="3" fill="#1c0c02" opacity="0.73"/><rect x="244" y="401" width="3" height="3" fill="#e0902e" opacity="0.80"/><rect x="253" y="401" width="3" height="3" fill="#3a1c04" opacity="0.91"/><rect x="256" y="401" width="3" height="3" fill="#8a4a10" opacity="0.90"/><rect x="262" y="401" width="3" height="3" fill="#c47422" opacity="0.94"/><rect x="271" y="401" width="3" height="3" fill="#b8681c" opacity="0.74"/><rect x="277" y="401" width="3" height="3" fill="#8a4a10" opacity="0.61"/><rect x="289" y="401" width="3" height="3" fill="#b8681c" opacity="0.55"/><rect x="112" y="404" width="3" height="3" fill="#5a2e08" opacity="0.95"/><rect x="118" y="404" width="3" height="3" fill="#8a4a10" opacity="0.94"/><rect x="121" y="404" width="3" height="3" fill="#a65c16" opacity="0.64"/><rect x="130" y="404" width="3" height="3" fill="#6e3a0a" opacity="0.79"/><rect x="133" y="404" width="3" height="3" fill="#d0842c" opacity="0.69"/><rect x="136" y="404" width="3" height="3" fill="#a65c16" opacity="0.85"/><rect x="139" y="404" width="3" height="3" fill="#3a1c04" opacity="0.60"/><rect x="142" y="404" width="3" height="3" fill="#c47422" opacity="0.84"/><rect x="145" y="404" width="3" height="3" fill="#e0902e" opacity="0.76"/><rect x="148" y="404" width="3" height="3" fill="#5a2e08" opacity="0.94"/><rect x="160" y="404" width="3" height="3" fill="#8a4a10" opacity="0.89"/><rect x="172" y="404" width="3" height="3" fill="#6e3a0a" opacity="0.88"/><rect x="175" y="404" width="3" height="3" fill="#8a4a10" opacity="0.76"/><rect x="181" y="404" width="3" height="3" fill="#c47422" opacity="0.61"/><rect x="184" y="404" width="3" height="3" fill="#e0902e" opacity="0.63"/><rect x="187" y="404" width="3" height="3" fill="#6e3a0a" opacity="0.82"/><rect x="190" y="404" width="3" height="3" fill="#3a1c04" opacity="0.99"/><rect x="193" y="404" width="3" height="3" fill="#d0842c" opacity="0.96"/><rect x="196" y="404" width="3" height="3" fill="#e0902e" opacity="0.64"/><rect x="199" y="404" width="3" height="3" fill="#a65c16" opacity="0.70"/><rect x="202" y="404" width="3" height="3" fill="#6e3a0a" opacity="0.83"/><rect x="205" y="404" width="3" height="3" fill="#b8681c" opacity="0.85"/><rect x="211" y="404" width="3" height="3" fill="#d0842c" opacity="0.69"/><rect x="214" y="404" width="3" height="3" fill="#b8681c" opacity="0.78"/><rect x="226" y="404" width="3" height="3" fill="#d0842c" opacity="0.80"/><rect x="229" y="404" width="3" height="3" fill="#b8681c" opacity="0.81"/><rect x="232" y="404" width="3" height="3" fill="#e0902e" opacity="0.87"/><rect x="241" y="404" width="3" height="3" fill="#c47422" opacity="0.61"/><rect x="244" y="404" width="3" height="3" fill="#d0842c" opacity="0.70"/><rect x="250" y="404" width="3" height="3" fill="#c47422" opacity="0.75"/><rect x="256" y="404" width="3" height="3" fill="#8a4a10" opacity="0.80"/><rect x="262" y="404" width="3" height="3" fill="#d0842c" opacity="0.82"/><rect x="265" y="404" width="3" height="3" fill="#d0842c" opacity="0.86"/><rect x="268" y="404" width="3" height="3" fill="#d0842c" opacity="0.92"/><rect x="271" y="404" width="3" height="3" fill="#c47422" opacity="0.75"/><rect x="274" y="404" width="3" height="3" fill="#e0902e" opacity="0.61"/><rect x="106" y="407" width="3" height="3" fill="#c47422" opacity="0.61"/><rect x="109" y="407" width="3" height="3" fill="#b8681c" opacity="0.70"/><rect x="112" y="407" width="3" height="3" fill="#1c0c02" opacity="0.57"/><rect x="124" y="407" width="3" height="3" fill="#c47422" opacity="0.76"/><rect x="127" y="407" width="3" height="3" fill="#e0902e" opacity="0.80"/><rect x="130" y="407" width="3" height="3" fill="#6e3a0a" opacity="0.93"/><rect x="136" y="407" width="3" height="3" fill="#8a4a10" opacity="0.60"/><rect x="142" y="407" width="3" height="3" fill="#a65c16" opacity="0.96"/><rect x="145" y="407" width="3" height="3" fill="#6e3a0a" opacity="0.88"/><rect x="154" y="407" width="3" height="3" fill="#c47422" opacity="0.66"/><rect x="160" y="407" width="3" height="3" fill="#c47422" opacity="0.76"/><rect x="163" y="407" width="3" height="3" fill="#8a4a10" opacity="0.69"/><rect x="166" y="407" width="3" height="3" fill="#5a2e08" opacity="1.00"/><rect x="175" y="407" width="3" height="3" fill="#8a4a10" opacity="0.91"/><rect x="178" y="407" width="3" height="3" fill="#8a4a10" opacity="0.61"/><rect x="181" y="407" width="3" height="3" fill="#b8681c" opacity="0.61"/><rect x="190" y="407" width="3" height="3" fill="#1c0c02" opacity="0.56"/><rect x="193" y="407" width="3" height="3" fill="#a65c16" opacity="0.92"/><rect x="196" y="407" width="3" height="3" fill="#8a4a10" opacity="0.65"/><rect x="199" y="407" width="3" height="3" fill="#d0842c" opacity="0.69"/><rect x="202" y="407" width="3" height="3" fill="#a65c16" opacity="0.95"/><rect x="205" y="407" width="3" height="3" fill="#e0902e" opacity="0.95"/><rect x="208" y="407" width="3" height="3" fill="#d0842c" opacity="0.95"/><rect x="211" y="407" width="3" height="3" fill="#e0902e" opacity="1.00"/><rect x="214" y="407" width="3" height="3" fill="#b8681c" opacity="0.98"/><rect x="223" y="407" width="3" height="3" fill="#d0842c" opacity="0.94"/><rect x="229" y="407" width="3" height="3" fill="#a65c16" opacity="0.74"/><rect x="232" y="407" width="3" height="3" fill="#c47422" opacity="0.87"/><rect x="235" y="407" width="3" height="3" fill="#3a1c04" opacity="0.78"/><rect x="238" y="407" width="3" height="3" fill="#5a2e08" opacity="0.82"/><rect x="241" y="407" width="3" height="3" fill="#b8681c" opacity="0.85"/><rect x="244" y="407" width="3" height="3" fill="#c47422" opacity="0.76"/><rect x="247" y="407" width="3" height="3" fill="#c47422" opacity="0.79"/><rect x="250" y="407" width="3" height="3" fill="#d0842c" opacity="0.79"/><rect x="253" y="407" width="3" height="3" fill="#b8681c" opacity="0.68"/><rect x="259" y="407" width="3" height="3" fill="#5a2e08" opacity="0.63"/><rect x="268" y="407" width="3" height="3" fill="#8a4a10" opacity="0.72"/><rect x="274" y="407" width="3" height="3" fill="#1c0c02" opacity="0.69"/><rect x="277" y="407" width="3" height="3" fill="#1c0c02" opacity="0.78"/><rect x="100" y="410" width="3" height="3" fill="#b8681c" opacity="0.60"/><rect x="109" y="410" width="3" height="3" fill="#3a1c04" opacity="0.67"/><rect x="112" y="410" width="3" height="3" fill="#8a4a10" opacity="0.77"/><rect x="115" y="410" width="3" height="3" fill="#e0902e" opacity="0.57"/><rect x="118" y="410" width="3" height="3" fill="#d0842c" opacity="0.62"/><rect x="121" y="410" width="3" height="3" fill="#a65c16" opacity="0.78"/><rect x="130" y="410" width="3" height="3" fill="#3a1c04" opacity="0.81"/><rect x="133" y="410" width="3" height="3" fill="#b8681c" opacity="0.83"/><rect x="136" y="410" width="3" height="3" fill="#e0902e" opacity="0.69"/><rect x="142" y="410" width="3" height="3" fill="#6e3a0a" opacity="0.59"/><rect x="148" y="410" width="3" height="3" fill="#3a1c04" opacity="0.77"/><rect x="157" y="410" width="3" height="3" fill="#a65c16" opacity="0.71"/><rect x="160" y="410" width="3" height="3" fill="#c47422" opacity="0.61"/><rect x="169" y="410" width="3" height="3" fill="#8a4a10" opacity="0.89"/><rect x="172" y="410" width="3" height="3" fill="#3a1c04" opacity="0.59"/><rect x="175" y="410" width="3" height="3" fill="#c47422" opacity="0.99"/><rect x="190" y="410" width="3" height="3" fill="#3a1c04" opacity="0.74"/><rect x="193" y="410" width="3" height="3" fill="#1c0c02" opacity="0.70"/><rect x="202" y="410" width="3" height="3" fill="#e0902e" opacity="1.00"/><rect x="208" y="410" width="3" height="3" fill="#8a4a10" opacity="0.97"/><rect x="211" y="410" width="3" height="3" fill="#b8681c" opacity="0.72"/><rect x="217" y="410" width="3" height="3" fill="#b8681c" opacity="0.91"/><rect x="223" y="410" width="3" height="3" fill="#8a4a10" opacity="0.76"/><rect x="226" y="410" width="3" height="3" fill="#e0902e" opacity="0.86"/><rect x="232" y="410" width="3" height="3" fill="#c47422" opacity="0.57"/><rect x="235" y="410" width="3" height="3" fill="#8a4a10" opacity="0.56"/><rect x="238" y="410" width="3" height="3" fill="#6e3a0a" opacity="0.81"/><rect x="244" y="410" width="3" height="3" fill="#5a2e08" opacity="0.62"/><rect x="250" y="410" width="3" height="3" fill="#e0902e" opacity="0.93"/><rect x="253" y="410" width="3" height="3" fill="#a65c16" opacity="0.75"/><rect x="259" y="410" width="3" height="3" fill="#5a2e08" opacity="0.69"/><rect x="265" y="410" width="3" height="3" fill="#3a1c04" opacity="0.56"/><rect x="268" y="410" width="3" height="3" fill="#8a4a10" opacity="0.86"/><rect x="271" y="410" width="3" height="3" fill="#d0842c" opacity="0.88"/><rect x="277" y="410" width="3" height="3" fill="#1c0c02" opacity="0.79"/><rect x="280" y="410" width="3" height="3" fill="#1c0c02" opacity="0.65"/><rect x="283" y="410" width="3" height="3" fill="#b8681c" opacity="0.61"/><rect x="100" y="413" width="3" height="3" fill="#e0902e" opacity="0.68"/><rect x="109" y="413" width="3" height="3" fill="#e0902e" opacity="0.60"/><rect x="115" y="413" width="3" height="3" fill="#d0842c" opacity="0.59"/><rect x="118" y="413" width="3" height="3" fill="#c47422" opacity="0.77"/><rect x="124" y="413" width="3" height="3" fill="#b8681c" opacity="0.62"/><rect x="127" y="413" width="3" height="3" fill="#b8681c" opacity="0.71"/><rect x="133" y="413" width="3" height="3" fill="#a65c16" opacity="0.91"/><rect x="136" y="413" width="3" height="3" fill="#1c0c02" opacity="0.87"/><rect x="139" y="413" width="3" height="3" fill="#d0842c" opacity="0.96"/><rect x="145" y="413" width="3" height="3" fill="#8a4a10" opacity="0.68"/><rect x="154" y="413" width="3" height="3" fill="#1c0c02" opacity="0.95"/><rect x="157" y="413" width="3" height="3" fill="#3a1c04" opacity="0.84"/><rect x="160" y="413" width="3" height="3" fill="#d0842c" opacity="0.56"/><rect x="166" y="413" width="3" height="3" fill="#5a2e08" opacity="0.83"/><rect x="169" y="413" width="3" height="3" fill="#d0842c" opacity="0.58"/><rect x="172" y="413" width="3" height="3" fill="#a65c16" opacity="0.57"/><rect x="175" y="413" width="3" height="3" fill="#d0842c" opacity="0.77"/><rect x="178" y="413" width="3" height="3" fill="#3a1c04" opacity="0.67"/><rect x="181" y="413" width="3" height="3" fill="#5a2e08" opacity="0.97"/><rect x="187" y="413" width="3" height="3" fill="#e0902e" opacity="0.89"/><rect x="190" y="413" width="3" height="3" fill="#e0902e" opacity="0.99"/><rect x="193" y="413" width="3" height="3" fill="#c47422" opacity="0.69"/><rect x="211" y="413" width="3" height="3" fill="#a65c16" opacity="0.91"/><rect x="214" y="413" width="3" height="3" fill="#d0842c" opacity="0.89"/><rect x="217" y="413" width="3" height="3" fill="#3a1c04" opacity="0.71"/><rect x="241" y="413" width="3" height="3" fill="#8a4a10" opacity="0.90"/><rect x="244" y="413" width="3" height="3" fill="#6e3a0a" opacity="0.94"/><rect x="247" y="413" width="3" height="3" fill="#6e3a0a" opacity="0.66"/><rect x="253" y="413" width="3" height="3" fill="#b8681c" opacity="0.70"/><rect x="265" y="413" width="3" height="3" fill="#e0902e" opacity="0.61"/><rect x="271" y="413" width="3" height="3" fill="#3a1c04" opacity="0.72"/><rect x="277" y="413" width="3" height="3" fill="#5a2e08" opacity="0.76"/><rect x="289" y="413" width="3" height="3" fill="#1c0c02" opacity="0.83"/><rect x="94" y="416" width="3" height="3" fill="#b8681c" opacity="0.57"/><rect x="100" y="416" width="3" height="3" fill="#1c0c02" opacity="0.71"/><rect x="103" y="416" width="3" height="3" fill="#a65c16" opacity="0.70"/><rect x="106" y="416" width="3" height="3" fill="#a65c16" opacity="0.63"/><rect x="109" y="416" width="3" height="3" fill="#e0902e" opacity="0.68"/><rect x="112" y="416" width="3" height="3" fill="#b8681c" opacity="0.99"/><rect x="115" y="416" width="3" height="3" fill="#8a4a10" opacity="0.68"/><rect x="121" y="416" width="3" height="3" fill="#8a4a10" opacity="0.97"/><rect x="124" y="416" width="3" height="3" fill="#c47422" opacity="0.62"/><rect x="130" y="416" width="3" height="3" fill="#d0842c" opacity="0.83"/><rect x="133" y="416" width="3" height="3" fill="#6e3a0a" opacity="0.64"/><rect x="136" y="416" width="3" height="3" fill="#b8681c" opacity="0.58"/><rect x="142" y="416" width="3" height="3" fill="#3a1c04" opacity="0.70"/><rect x="145" y="416" width="3" height="3" fill="#a65c16" opacity="0.77"/><rect x="148" y="416" width="3" height="3" fill="#a65c16" opacity="0.80"/><rect x="151" y="416" width="3" height="3" fill="#8a4a10" opacity="0.66"/><rect x="154" y="416" width="3" height="3" fill="#b8681c" opacity="1.00"/><rect x="157" y="416" width="3" height="3" fill="#e0902e" opacity="0.57"/><rect x="166" y="416" width="3" height="3" fill="#d0842c" opacity="0.71"/><rect x="172" y="416" width="3" height="3" fill="#c47422" opacity="0.95"/><rect x="175" y="416" width="3" height="3" fill="#8a4a10" opacity="0.67"/><rect x="178" y="416" width="3" height="3" fill="#a65c16" opacity="0.73"/><rect x="193" y="416" width="3" height="3" fill="#a65c16" opacity="0.93"/><rect x="196" y="416" width="3" height="3" fill="#8a4a10" opacity="0.56"/><rect x="199" y="416" width="3" height="3" fill="#6e3a0a" opacity="0.88"/><rect x="202" y="416" width="3" height="3" fill="#d0842c" opacity="0.83"/><rect x="205" y="416" width="3" height="3" fill="#c47422" opacity="0.96"/><rect x="208" y="416" width="3" height="3" fill="#1c0c02" opacity="0.65"/><rect x="211" y="416" width="3" height="3" fill="#3a1c04" opacity="0.80"/><rect x="214" y="416" width="3" height="3" fill="#5a2e08" opacity="0.62"/><rect x="217" y="416" width="3" height="3" fill="#5a2e08" opacity="0.55"/><rect x="220" y="416" width="3" height="3" fill="#d0842c" opacity="0.98"/><rect x="229" y="416" width="3" height="3" fill="#5a2e08" opacity="0.89"/><rect x="232" y="416" width="3" height="3" fill="#a65c16" opacity="0.76"/><rect x="238" y="416" width="3" height="3" fill="#b8681c" opacity="0.92"/><rect x="241" y="416" width="3" height="3" fill="#d0842c" opacity="0.95"/><rect x="247" y="416" width="3" height="3" fill="#6e3a0a" opacity="0.96"/><rect x="250" y="416" width="3" height="3" fill="#d0842c" opacity="0.95"/><rect x="256" y="416" width="3" height="3" fill="#8a4a10" opacity="0.97"/><rect x="259" y="416" width="3" height="3" fill="#e0902e" opacity="0.75"/><rect x="262" y="416" width="3" height="3" fill="#a65c16" opacity="0.78"/><rect x="265" y="416" width="3" height="3" fill="#c47422" opacity="0.78"/><rect x="268" y="416" width="3" height="3" fill="#a65c16" opacity="0.68"/><rect x="271" y="416" width="3" height="3" fill="#1c0c02" opacity="0.62"/><rect x="274" y="416" width="3" height="3" fill="#e0902e" opacity="0.83"/><rect x="277" y="416" width="3" height="3" fill="#8a4a10" opacity="0.73"/><rect x="283" y="416" width="3" height="3" fill="#a65c16" opacity="0.60"/><rect x="286" y="416" width="3" height="3" fill="#b8681c" opacity="0.92"/><rect x="100" y="419" width="3" height="3" fill="#e0902e" opacity="0.70"/><rect x="103" y="419" width="3" height="3" fill="#b8681c" opacity="0.79"/><rect x="109" y="419" width="3" height="3" fill="#e0902e" opacity="0.66"/><rect x="112" y="419" width="3" height="3" fill="#a65c16" opacity="0.94"/><rect x="115" y="419" width="3" height="3" fill="#c47422" opacity="0.90"/><rect x="118" y="419" width="3" height="3" fill="#b8681c" opacity="0.92"/><rect x="121" y="419" width="3" height="3" fill="#d0842c" opacity="0.98"/><rect x="124" y="419" width="3" height="3" fill="#a65c16" opacity="0.63"/><rect x="127" y="419" width="3" height="3" fill="#8a4a10" opacity="0.76"/><rect x="130" y="419" width="3" height="3" fill="#3a1c04" opacity="0.79"/><rect x="133" y="419" width="3" height="3" fill="#b8681c" opacity="0.80"/><rect x="139" y="419" width="3" height="3" fill="#e0902e" opacity="0.69"/><rect x="142" y="419" width="3" height="3" fill="#8a4a10" opacity="0.64"/><rect x="145" y="419" width="3" height="3" fill="#b8681c" opacity="0.86"/><rect x="148" y="419" width="3" height="3" fill="#5a2e08" opacity="0.67"/><rect x="151" y="419" width="3" height="3" fill="#d0842c" opacity="0.64"/><rect x="157" y="419" width="3" height="3" fill="#d0842c" opacity="0.94"/><rect x="163" y="419" width="3" height="3" fill="#1c0c02" opacity="0.74"/><rect x="169" y="419" width="3" height="3" fill="#8a4a10" opacity="0.61"/><rect x="172" y="419" width="3" height="3" fill="#a65c16" opacity="0.66"/><rect x="175" y="419" width="3" height="3" fill="#d0842c" opacity="0.98"/><rect x="178" y="419" width="3" height="3" fill="#b8681c" opacity="0.97"/><rect x="181" y="419" width="3" height="3" fill="#8a4a10" opacity="0.65"/><rect x="184" y="419" width="3" height="3" fill="#d0842c" opacity="0.68"/><rect x="187" y="419" width="3" height="3" fill="#d0842c" opacity="0.85"/><rect x="190" y="419" width="3" height="3" fill="#c47422" opacity="0.74"/><rect x="193" y="419" width="3" height="3" fill="#d0842c" opacity="0.72"/><rect x="196" y="419" width="3" height="3" fill="#5a2e08" opacity="0.80"/><rect x="199" y="419" width="3" height="3" fill="#c47422" opacity="0.91"/><rect x="202" y="419" width="3" height="3" fill="#1c0c02" opacity="1.00"/><rect x="211" y="419" width="3" height="3" fill="#5a2e08" opacity="0.71"/><rect x="214" y="419" width="3" height="3" fill="#e0902e" opacity="0.84"/><rect x="217" y="419" width="3" height="3" fill="#5a2e08" opacity="1.00"/><rect x="220" y="419" width="3" height="3" fill="#e0902e" opacity="0.79"/><rect x="223" y="419" width="3" height="3" fill="#6e3a0a" opacity="0.85"/><rect x="232" y="419" width="3" height="3" fill="#a65c16" opacity="0.72"/><rect x="235" y="419" width="3" height="3" fill="#e0902e" opacity="0.91"/><rect x="238" y="419" width="3" height="3" fill="#e0902e" opacity="0.83"/><rect x="244" y="419" width="3" height="3" fill="#e0902e" opacity="0.76"/><rect x="250" y="419" width="3" height="3" fill="#1c0c02" opacity="0.94"/><rect x="259" y="419" width="3" height="3" fill="#8a4a10" opacity="0.80"/><rect x="268" y="419" width="3" height="3" fill="#8a4a10" opacity="0.61"/><rect x="271" y="419" width="3" height="3" fill="#5a2e08" opacity="0.78"/><rect x="274" y="419" width="3" height="3" fill="#b8681c" opacity="0.66"/><rect x="277" y="419" width="3" height="3" fill="#3a1c04" opacity="0.81"/><rect x="280" y="419" width="3" height="3" fill="#3a1c04" opacity="0.93"/><rect x="283" y="419" width="3" height="3" fill="#b8681c" opacity="0.61"/><rect x="289" y="419" width="3" height="3" fill="#e0902e" opacity="0.98"/><rect x="91" y="422" width="3" height="3" fill="#3a1c04" opacity="0.91"/><rect x="94" y="422" width="3" height="3" fill="#a65c16" opacity="0.62"/><rect x="100" y="422" width="3" height="3" fill="#1c0c02" opacity="0.96"/><rect x="103" y="422" width="3" height="3" fill="#c47422" opacity="0.73"/><rect x="106" y="422" width="3" height="3" fill="#5a2e08" opacity="0.85"/><rect x="109" y="422" width="3" height="3" fill="#b8681c" opacity="0.84"/><rect x="118" y="422" width="3" height="3" fill="#c47422" opacity="0.73"/><rect x="121" y="422" width="3" height="3" fill="#d0842c" opacity="0.65"/><rect x="124" y="422" width="3" height="3" fill="#a65c16" opacity="0.71"/><rect x="127" y="422" width="3" height="3" fill="#c47422" opacity="0.69"/><rect x="130" y="422" width="3" height="3" fill="#6e3a0a" opacity="0.80"/><rect x="133" y="422" width="3" height="3" fill="#5a2e08" opacity="0.87"/><rect x="136" y="422" width="3" height="3" fill="#b8681c" opacity="0.78"/><rect x="139" y="422" width="3" height="3" fill="#d0842c" opacity="0.73"/><rect x="145" y="422" width="3" height="3" fill="#b8681c" opacity="0.71"/><rect x="148" y="422" width="3" height="3" fill="#d0842c" opacity="0.64"/><rect x="154" y="422" width="3" height="3" fill="#5a2e08" opacity="0.78"/><rect x="160" y="422" width="3" height="3" fill="#1c0c02" opacity="0.82"/><rect x="169" y="422" width="3" height="3" fill="#c47422" opacity="0.68"/><rect x="172" y="422" width="3" height="3" fill="#3a1c04" opacity="0.92"/><rect x="175" y="422" width="3" height="3" fill="#b8681c" opacity="0.90"/><rect x="178" y="422" width="3" height="3" fill="#6e3a0a" opacity="0.57"/><rect x="181" y="422" width="3" height="3" fill="#d0842c" opacity="0.84"/><rect x="184" y="422" width="3" height="3" fill="#b8681c" opacity="0.81"/><rect x="187" y="422" width="3" height="3" fill="#a65c16" opacity="0.70"/><rect x="190" y="422" width="3" height="3" fill="#c47422" opacity="0.63"/><rect x="193" y="422" width="3" height="3" fill="#b8681c" opacity="0.72"/><rect x="196" y="422" width="3" height="3" fill="#c47422" opacity="0.75"/><rect x="211" y="422" width="3" height="3" fill="#e0902e" opacity="0.60"/><rect x="214" y="422" width="3" height="3" fill="#e0902e" opacity="0.80"/><rect x="220" y="422" width="3" height="3" fill="#8a4a10" opacity="0.61"/><rect x="226" y="422" width="3" height="3" fill="#a65c16" opacity="0.56"/><rect x="229" y="422" width="3" height="3" fill="#e0902e" opacity="0.87"/><rect x="232" y="422" width="3" height="3" fill="#a65c16" opacity="0.78"/><rect x="235" y="422" width="3" height="3" fill="#b8681c" opacity="0.90"/><rect x="238" y="422" width="3" height="3" fill="#3a1c04" opacity="0.84"/><rect x="241" y="422" width="3" height="3" fill="#e0902e" opacity="0.72"/><rect x="244" y="422" width="3" height="3" fill="#d0842c" opacity="0.90"/><rect x="247" y="422" width="3" height="3" fill="#a65c16" opacity="0.70"/><rect x="250" y="422" width="3" height="3" fill="#1c0c02" opacity="0.71"/><rect x="253" y="422" width="3" height="3" fill="#5a2e08" opacity="0.91"/><rect x="256" y="422" width="3" height="3" fill="#3a1c04" opacity="0.74"/><rect x="259" y="422" width="3" height="3" fill="#a65c16" opacity="0.96"/><rect x="262" y="422" width="3" height="3" fill="#b8681c" opacity="0.63"/><rect x="265" y="422" width="3" height="3" fill="#8a4a10" opacity="0.93"/><rect x="268" y="422" width="3" height="3" fill="#8a4a10" opacity="0.62"/><rect x="271" y="422" width="3" height="3" fill="#a65c16" opacity="0.98"/><rect x="280" y="422" width="3" height="3" fill="#b8681c" opacity="0.99"/><rect x="289" y="422" width="3" height="3" fill="#3a1c04" opacity="0.81"/><rect x="97" y="425" width="3" height="3" fill="#e0902e" opacity="0.91"/><rect x="100" y="425" width="3" height="3" fill="#d0842c" opacity="0.60"/><rect x="103" y="425" width="3" height="3" fill="#1c0c02" opacity="0.85"/><rect x="106" y="425" width="3" height="3" fill="#d0842c" opacity="0.77"/><rect x="109" y="425" width="3" height="3" fill="#d0842c" opacity="0.97"/><rect x="112" y="425" width="3" height="3" fill="#8a4a10" opacity="0.93"/><rect x="115" y="425" width="3" height="3" fill="#e0902e" opacity="0.62"/><rect x="124" y="425" width="3" height="3" fill="#d0842c" opacity="0.57"/><rect x="130" y="425" width="3" height="3" fill="#b8681c" opacity="0.77"/><rect x="133" y="425" width="3" height="3" fill="#b8681c" opacity="0.97"/><rect x="136" y="425" width="3" height="3" fill="#d0842c" opacity="0.95"/><rect x="139" y="425" width="3" height="3" fill="#8a4a10" opacity="0.97"/><rect x="142" y="425" width="3" height="3" fill="#5a2e08" opacity="0.60"/><rect x="145" y="425" width="3" height="3" fill="#1c0c02" opacity="0.69"/><rect x="151" y="425" width="3" height="3" fill="#c47422" opacity="0.61"/><rect x="154" y="425" width="3" height="3" fill="#5a2e08" opacity="0.75"/><rect x="157" y="425" width="3" height="3" fill="#1c0c02" opacity="0.83"/><rect x="166" y="425" width="3" height="3" fill="#3a1c04" opacity="0.59"/><rect x="169" y="425" width="3" height="3" fill="#8a4a10" opacity="0.59"/><rect x="175" y="425" width="3" height="3" fill="#1c0c02" opacity="0.97"/><rect x="193" y="425" width="3" height="3" fill="#8a4a10" opacity="1.00"/><rect x="196" y="425" width="3" height="3" fill="#d0842c" opacity="0.97"/><rect x="199" y="425" width="3" height="3" fill="#c47422" opacity="0.60"/><rect x="202" y="425" width="3" height="3" fill="#c47422" opacity="0.74"/><rect x="205" y="425" width="3" height="3" fill="#5a2e08" opacity="0.55"/><rect x="208" y="425" width="3" height="3" fill="#a65c16" opacity="0.93"/><rect x="211" y="425" width="3" height="3" fill="#d0842c" opacity="0.73"/><rect x="217" y="425" width="3" height="3" fill="#1c0c02" opacity="0.79"/><rect x="220" y="425" width="3" height="3" fill="#a65c16" opacity="0.84"/><rect x="226" y="425" width="3" height="3" fill="#3a1c04" opacity="0.66"/><rect x="229" y="425" width="3" height="3" fill="#d0842c" opacity="0.63"/><rect x="232" y="425" width="3" height="3" fill="#8a4a10" opacity="0.79"/><rect x="235" y="425" width="3" height="3" fill="#b8681c" opacity="0.69"/><rect x="238" y="425" width="3" height="3" fill="#e0902e" opacity="0.88"/><rect x="241" y="425" width="3" height="3" fill="#8a4a10" opacity="0.59"/><rect x="244" y="425" width="3" height="3" fill="#a65c16" opacity="0.65"/><rect x="247" y="425" width="3" height="3" fill="#d0842c" opacity="0.85"/><rect x="250" y="425" width="3" height="3" fill="#6e3a0a" opacity="1.00"/><rect x="253" y="425" width="3" height="3" fill="#b8681c" opacity="0.70"/><rect x="259" y="425" width="3" height="3" fill="#8a4a10" opacity="0.97"/><rect x="262" y="425" width="3" height="3" fill="#c47422" opacity="0.57"/><rect x="265" y="425" width="3" height="3" fill="#a65c16" opacity="0.96"/><rect x="268" y="425" width="3" height="3" fill="#6e3a0a" opacity="0.98"/><rect x="274" y="425" width="3" height="3" fill="#b8681c" opacity="0.91"/><rect x="277" y="425" width="3" height="3" fill="#3a1c04" opacity="0.61"/><rect x="280" y="425" width="3" height="3" fill="#e0902e" opacity="0.95"/><rect x="286" y="425" width="3" height="3" fill="#d0842c" opacity="0.62"/><rect x="94" y="428" width="3" height="3" fill="#1c0c02" opacity="0.63"/><rect x="97" y="428" width="3" height="3" fill="#8a4a10" opacity="0.92"/><rect x="100" y="428" width="3" height="3" fill="#d0842c" opacity="0.98"/><rect x="103" y="428" width="3" height="3" fill="#5a2e08" opacity="0.96"/><rect x="112" y="428" width="3" height="3" fill="#1c0c02" opacity="0.84"/><rect x="115" y="428" width="3" height="3" fill="#8a4a10" opacity="0.76"/><rect x="118" y="428" width="3" height="3" fill="#a65c16" opacity="0.57"/><rect x="121" y="428" width="3" height="3" fill="#e0902e" opacity="0.56"/><rect x="127" y="428" width="3" height="3" fill="#3a1c04" opacity="0.57"/><rect x="130" y="428" width="3" height="3" fill="#c47422" opacity="0.56"/><rect x="133" y="428" width="3" height="3" fill="#8a4a10" opacity="0.84"/><rect x="136" y="428" width="3" height="3" fill="#5a2e08" opacity="0.62"/><rect x="142" y="428" width="3" height="3" fill="#8a4a10" opacity="0.72"/><rect x="145" y="428" width="3" height="3" fill="#d0842c" opacity="0.62"/><rect x="148" y="428" width="3" height="3" fill="#8a4a10" opacity="0.74"/><rect x="151" y="428" width="3" height="3" fill="#d0842c" opacity="0.98"/><rect x="154" y="428" width="3" height="3" fill="#8a4a10" opacity="0.93"/><rect x="160" y="428" width="3" height="3" fill="#d0842c" opacity="0.89"/><rect x="166" y="428" width="3" height="3" fill="#a65c16" opacity="0.62"/><rect x="172" y="428" width="3" height="3" fill="#5a2e08" opacity="0.71"/><rect x="175" y="428" width="3" height="3" fill="#8a4a10" opacity="0.84"/><rect x="178" y="428" width="3" height="3" fill="#a65c16" opacity="0.67"/><rect x="181" y="428" width="3" height="3" fill="#a65c16" opacity="0.58"/><rect x="184" y="428" width="3" height="3" fill="#c47422" opacity="0.84"/><rect x="190" y="428" width="3" height="3" fill="#c47422" opacity="0.68"/><rect x="193" y="428" width="3" height="3" fill="#a65c16" opacity="0.91"/><rect x="196" y="428" width="3" height="3" fill="#8a4a10" opacity="0.60"/><rect x="199" y="428" width="3" height="3" fill="#5a2e08" opacity="0.77"/><rect x="202" y="428" width="3" height="3" fill="#e0902e" opacity="0.78"/><rect x="205" y="428" width="3" height="3" fill="#3a1c04" opacity="0.86"/><rect x="208" y="428" width="3" height="3" fill="#e0902e" opacity="0.96"/><rect x="211" y="428" width="3" height="3" fill="#e0902e" opacity="0.67"/><rect x="214" y="428" width="3" height="3" fill="#c47422" opacity="0.92"/><rect x="217" y="428" width="3" height="3" fill="#5a2e08" opacity="0.98"/><rect x="220" y="428" width="3" height="3" fill="#e0902e" opacity="0.82"/><rect x="229" y="428" width="3" height="3" fill="#3a1c04" opacity="0.60"/><rect x="238" y="428" width="3" height="3" fill="#1c0c02" opacity="0.99"/><rect x="241" y="428" width="3" height="3" fill="#5a2e08" opacity="0.75"/><rect x="244" y="428" width="3" height="3" fill="#c47422" opacity="0.81"/><rect x="250" y="428" width="3" height="3" fill="#a65c16" opacity="0.87"/><rect x="253" y="428" width="3" height="3" fill="#a65c16" opacity="0.91"/><rect x="256" y="428" width="3" height="3" fill="#c47422" opacity="0.86"/><rect x="259" y="428" width="3" height="3" fill="#d0842c" opacity="0.86"/><rect x="262" y="428" width="3" height="3" fill="#c47422" opacity="0.70"/><rect x="271" y="428" width="3" height="3" fill="#8a4a10" opacity="0.69"/><rect x="274" y="428" width="3" height="3" fill="#5a2e08" opacity="0.68"/><rect x="277" y="428" width="3" height="3" fill="#c47422" opacity="0.59"/><rect x="283" y="428" width="3" height="3" fill="#8a4a10" opacity="0.66"/><rect x="286" y="428" width="3" height="3" fill="#b8681c" opacity="0.75"/><rect x="289" y="428" width="3" height="3" fill="#d0842c" opacity="0.68"/><rect x="94" y="431" width="3" height="3" fill="#a65c16" opacity="0.96"/><rect x="97" y="431" width="3" height="3" fill="#a65c16" opacity="0.86"/><rect x="103" y="431" width="3" height="3" fill="#8a4a10" opacity="0.96"/><rect x="106" y="431" width="3" height="3" fill="#c47422" opacity="0.79"/><rect x="109" y="431" width="3" height="3" fill="#c47422" opacity="0.83"/><rect x="112" y="431" width="3" height="3" fill="#e0902e" opacity="0.81"/><rect x="118" y="431" width="3" height="3" fill="#c47422" opacity="0.87"/><rect x="121" y="431" width="3" height="3" fill="#c47422" opacity="0.98"/><rect x="124" y="431" width="3" height="3" fill="#5a2e08" opacity="0.80"/><rect x="127" y="431" width="3" height="3" fill="#8a4a10" opacity="0.75"/><rect x="130" y="431" width="3" height="3" fill="#8a4a10" opacity="0.90"/><rect x="133" y="431" width="3" height="3" fill="#b8681c" opacity="0.86"/><rect x="136" y="431" width="3" height="3" fill="#3a1c04" opacity="0.66"/><rect x="139" y="431" width="3" height="3" fill="#a65c16" opacity="0.58"/><rect x="142" y="431" width="3" height="3" fill="#c47422" opacity="0.64"/><rect x="145" y="431" width="3" height="3" fill="#8a4a10" opacity="0.94"/><rect x="151" y="431" width="3" height="3" fill="#5a2e08" opacity="0.65"/><rect x="157" y="431" width="3" height="3" fill="#a65c16" opacity="0.94"/><rect x="160" y="431" width="3" height="3" fill="#5a2e08" opacity="0.87"/><rect x="163" y="431" width="3" height="3" fill="#a65c16" opacity="0.64"/><rect x="166" y="431" width="3" height="3" fill="#5a2e08" opacity="0.74"/><rect x="169" y="431" width="3" height="3" fill="#a65c16" opacity="0.88"/><rect x="172" y="431" width="3" height="3" fill="#e0902e" opacity="0.72"/><rect x="184" y="431" width="3" height="3" fill="#e0902e" opacity="0.65"/><rect x="187" y="431" width="3" height="3" fill="#8a4a10" opacity="0.85"/><rect x="190" y="431" width="3" height="3" fill="#e0902e" opacity="0.68"/><rect x="193" y="431" width="3" height="3" fill="#1c0c02" opacity="0.80"/><rect x="196" y="431" width="3" height="3" fill="#d0842c" opacity="0.89"/><rect x="199" y="431" width="3" height="3" fill="#b8681c" opacity="0.94"/><rect x="202" y="431" width="3" height="3" fill="#e0902e" opacity="0.96"/><rect x="205" y="431" width="3" height="3" fill="#b8681c" opacity="0.93"/><rect x="208" y="431" width="3" height="3" fill="#e0902e" opacity="0.87"/><rect x="211" y="431" width="3" height="3" fill="#a65c16" opacity="0.66"/><rect x="217" y="431" width="3" height="3" fill="#c47422" opacity="0.61"/><rect x="223" y="431" width="3" height="3" fill="#c47422" opacity="0.67"/><rect x="226" y="431" width="3" height="3" fill="#a65c16" opacity="0.70"/><rect x="235" y="431" width="3" height="3" fill="#a65c16" opacity="0.85"/><rect x="238" y="431" width="3" height="3" fill="#6e3a0a" opacity="0.79"/><rect x="244" y="431" width="3" height="3" fill="#d0842c" opacity="0.74"/><rect x="247" y="431" width="3" height="3" fill="#3a1c04" opacity="0.86"/><rect x="253" y="431" width="3" height="3" fill="#1c0c02" opacity="0.81"/><rect x="256" y="431" width="3" height="3" fill="#a65c16" opacity="0.85"/><rect x="259" y="431" width="3" height="3" fill="#3a1c04" opacity="0.64"/><rect x="262" y="431" width="3" height="3" fill="#e0902e" opacity="0.91"/><rect x="268" y="431" width="3" height="3" fill="#e0902e" opacity="0.81"/><rect x="271" y="431" width="3" height="3" fill="#1c0c02" opacity="0.65"/><rect x="277" y="431" width="3" height="3" fill="#3a1c04" opacity="0.93"/><rect x="283" y="431" width="3" height="3" fill="#8a4a10" opacity="0.68"/><rect x="289" y="431" width="3" height="3" fill="#8a4a10" opacity="0.83"/><rect x="85" y="434" width="3" height="3" fill="#d0842c" opacity="0.90"/><rect x="91" y="434" width="3" height="3" fill="#3a1c04" opacity="0.76"/><rect x="94" y="434" width="3" height="3" fill="#1c0c02" opacity="0.94"/><rect x="97" y="434" width="3" height="3" fill="#b8681c" opacity="0.77"/><rect x="100" y="434" width="3" height="3" fill="#e0902e" opacity="0.58"/><rect x="106" y="434" width="3" height="3" fill="#c47422" opacity="0.70"/><rect x="109" y="434" width="3" height="3" fill="#a65c16" opacity="0.82"/><rect x="115" y="434" width="3" height="3" fill="#5a2e08" opacity="0.96"/><rect x="118" y="434" width="3" height="3" fill="#c47422" opacity="0.85"/><rect x="121" y="434" width="3" height="3" fill="#6e3a0a" opacity="0.90"/><rect x="124" y="434" width="3" height="3" fill="#3a1c04" opacity="0.71"/><rect x="127" y="434" width="3" height="3" fill="#1c0c02" opacity="0.56"/><rect x="130" y="434" width="3" height="3" fill="#b8681c" opacity="0.67"/><rect x="133" y="434" width="3" height="3" fill="#a65c16" opacity="0.85"/><rect x="136" y="434" width="3" height="3" fill="#8a4a10" opacity="0.91"/><rect x="139" y="434" width="3" height="3" fill="#b8681c" opacity="0.74"/><rect x="142" y="434" width="3" height="3" fill="#a65c16" opacity="0.75"/><rect x="145" y="434" width="3" height="3" fill="#b8681c" opacity="0.68"/><rect x="148" y="434" width="3" height="3" fill="#e0902e" opacity="0.91"/><rect x="151" y="434" width="3" height="3" fill="#3a1c04" opacity="0.72"/><rect x="157" y="434" width="3" height="3" fill="#d0842c" opacity="0.89"/><rect x="160" y="434" width="3" height="3" fill="#8a4a10" opacity="0.65"/><rect x="163" y="434" width="3" height="3" fill="#b8681c" opacity="0.58"/><rect x="166" y="434" width="3" height="3" fill="#8a4a10" opacity="0.74"/><rect x="169" y="434" width="3" height="3" fill="#1c0c02" opacity="0.78"/><rect x="175" y="434" width="3" height="3" fill="#c47422" opacity="0.94"/><rect x="187" y="434" width="3" height="3" fill="#a65c16" opacity="0.82"/><rect x="190" y="434" width="3" height="3" fill="#3a1c04" opacity="0.58"/><rect x="196" y="434" width="3" height="3" fill="#a65c16" opacity="0.84"/><rect x="208" y="434" width="3" height="3" fill="#3a1c04" opacity="0.82"/><rect x="211" y="434" width="3" height="3" fill="#3a1c04" opacity="0.98"/><rect x="214" y="434" width="3" height="3" fill="#3a1c04" opacity="0.67"/><rect x="226" y="434" width="3" height="3" fill="#3a1c04" opacity="0.91"/><rect x="229" y="434" width="3" height="3" fill="#a65c16" opacity="0.84"/><rect x="244" y="434" width="3" height="3" fill="#5a2e08" opacity="0.97"/><rect x="247" y="434" width="3" height="3" fill="#a65c16" opacity="0.95"/><rect x="250" y="434" width="3" height="3" fill="#e0902e" opacity="0.63"/><rect x="253" y="434" width="3" height="3" fill="#b8681c" opacity="0.82"/><rect x="256" y="434" width="3" height="3" fill="#5a2e08" opacity="0.58"/><rect x="259" y="434" width="3" height="3" fill="#1c0c02" opacity="0.97"/><rect x="262" y="434" width="3" height="3" fill="#6e3a0a" opacity="0.97"/><rect x="265" y="434" width="3" height="3" fill="#6e3a0a" opacity="0.77"/><rect x="268" y="434" width="3" height="3" fill="#c47422" opacity="0.60"/><rect x="271" y="434" width="3" height="3" fill="#8a4a10" opacity="0.70"/><rect x="274" y="434" width="3" height="3" fill="#8a4a10" opacity="0.63"/><rect x="277" y="434" width="3" height="3" fill="#e0902e" opacity="0.80"/><rect x="280" y="434" width="3" height="3" fill="#5a2e08" opacity="0.59"/><rect x="286" y="434" width="3" height="3" fill="#6e3a0a" opacity="0.65"/><rect x="82" y="437" width="3" height="3" fill="#1c0c02" opacity="0.88"/><rect x="85" y="437" width="3" height="3" fill="#b8681c" opacity="0.67"/><rect x="94" y="437" width="3" height="3" fill="#b8681c" opacity="0.59"/><rect x="97" y="437" width="3" height="3" fill="#8a4a10" opacity="0.99"/><rect x="103" y="437" width="3" height="3" fill="#3a1c04" opacity="0.64"/><rect x="106" y="437" width="3" height="3" fill="#3a1c04" opacity="0.58"/><rect x="115" y="437" width="3" height="3" fill="#e0902e" opacity="0.78"/><rect x="118" y="437" width="3" height="3" fill="#c47422" opacity="0.99"/><rect x="121" y="437" width="3" height="3" fill="#c47422" opacity="0.74"/><rect x="130" y="437" width="3" height="3" fill="#3a1c04" opacity="0.62"/><rect x="142" y="437" width="3" height="3" fill="#d0842c" opacity="0.68"/><rect x="145" y="437" width="3" height="3" fill="#c47422" opacity="0.86"/><rect x="151" y="437" width="3" height="3" fill="#d0842c" opacity="0.89"/><rect x="154" y="437" width="3" height="3" fill="#e0902e" opacity="0.74"/><rect x="157" y="437" width="3" height="3" fill="#e0902e" opacity="0.98"/><rect x="163" y="437" width="3" height="3" fill="#b8681c" opacity="0.93"/><rect x="166" y="437" width="3" height="3" fill="#b8681c" opacity="0.67"/><rect x="169" y="437" width="3" height="3" fill="#5a2e08" opacity="0.75"/><rect x="172" y="437" width="3" height="3" fill="#6e3a0a" opacity="0.64"/><rect x="175" y="437" width="3" height="3" fill="#c47422" opacity="0.67"/><rect x="178" y="437" width="3" height="3" fill="#b8681c" opacity="0.79"/><rect x="181" y="437" width="3" height="3" fill="#8a4a10" opacity="0.70"/><rect x="184" y="437" width="3" height="3" fill="#5a2e08" opacity="0.83"/><rect x="187" y="437" width="3" height="3" fill="#8a4a10" opacity="0.84"/><rect x="190" y="437" width="3" height="3" fill="#b8681c" opacity="0.91"/><rect x="193" y="437" width="3" height="3" fill="#a65c16" opacity="0.97"/><rect x="196" y="437" width="3" height="3" fill="#6e3a0a" opacity="0.66"/><rect x="205" y="437" width="3" height="3" fill="#e0902e" opacity="0.99"/><rect x="208" y="437" width="3" height="3" fill="#b8681c" opacity="0.86"/><rect x="211" y="437" width="3" height="3" fill="#8a4a10" opacity="0.88"/><rect x="214" y="437" width="3" height="3" fill="#e0902e" opacity="0.58"/><rect x="217" y="437" width="3" height="3" fill="#6e3a0a" opacity="0.85"/><rect x="220" y="437" width="3" height="3" fill="#6e3a0a" opacity="0.94"/><rect x="223" y="437" width="3" height="3" fill="#5a2e08" opacity="0.76"/><rect x="226" y="437" width="3" height="3" fill="#c47422" opacity="0.62"/><rect x="229" y="437" width="3" height="3" fill="#1c0c02" opacity="0.96"/><rect x="232" y="437" width="3" height="3" fill="#d0842c" opacity="0.95"/><rect x="235" y="437" width="3" height="3" fill="#c47422" opacity="0.85"/><rect x="241" y="437" width="3" height="3" fill="#e0902e" opacity="0.74"/><rect x="244" y="437" width="3" height="3" fill="#d0842c" opacity="0.77"/><rect x="250" y="437" width="3" height="3" fill="#3a1c04" opacity="0.71"/><rect x="253" y="437" width="3" height="3" fill="#1c0c02" opacity="0.58"/><rect x="256" y="437" width="3" height="3" fill="#d0842c" opacity="0.73"/><rect x="262" y="437" width="3" height="3" fill="#a65c16" opacity="0.93"/><rect x="265" y="437" width="3" height="3" fill="#6e3a0a" opacity="0.79"/><rect x="274" y="437" width="3" height="3" fill="#c47422" opacity="0.82"/><rect x="280" y="437" width="3" height="3" fill="#1c0c02" opacity="0.72"/><rect x="289" y="437" width="3" height="3" fill="#3a1c04" opacity="0.61"/><rect x="79" y="440" width="3" height="3" fill="#e0902e" opacity="0.88"/><rect x="85" y="440" width="3" height="3" fill="#3a1c04" opacity="0.82"/><rect x="88" y="440" width="3" height="3" fill="#d0842c" opacity="0.87"/><rect x="91" y="440" width="3" height="3" fill="#5a2e08" opacity="0.99"/><rect x="94" y="440" width="3" height="3" fill="#b8681c" opacity="0.92"/><rect x="100" y="440" width="3" height="3" fill="#d0842c" opacity="0.96"/><rect x="103" y="440" width="3" height="3" fill="#c47422" opacity="0.74"/><rect x="106" y="440" width="3" height="3" fill="#b8681c" opacity="0.69"/><rect x="118" y="440" width="3" height="3" fill="#b8681c" opacity="0.93"/><rect x="121" y="440" width="3" height="3" fill="#d0842c" opacity="0.66"/><rect x="124" y="440" width="3" height="3" fill="#3a1c04" opacity="0.82"/><rect x="127" y="440" width="3" height="3" fill="#6e3a0a" opacity="0.94"/><rect x="133" y="440" width="3" height="3" fill="#5a2e08" opacity="0.65"/><rect x="136" y="440" width="3" height="3" fill="#e0902e" opacity="0.77"/><rect x="139" y="440" width="3" height="3" fill="#3a1c04" opacity="0.99"/><rect x="142" y="440" width="3" height="3" fill="#6e3a0a" opacity="0.73"/><rect x="145" y="440" width="3" height="3" fill="#a65c16" opacity="0.90"/><rect x="148" y="440" width="3" height="3" fill="#6e3a0a" opacity="0.71"/><rect x="157" y="440" width="3" height="3" fill="#a65c16" opacity="0.86"/><rect x="160" y="440" width="3" height="3" fill="#8a4a10" opacity="0.60"/><rect x="169" y="440" width="3" height="3" fill="#c47422" opacity="0.86"/><rect x="175" y="440" width="3" height="3" fill="#8a4a10" opacity="0.66"/><rect x="181" y="440" width="3" height="3" fill="#d0842c" opacity="0.86"/><rect x="196" y="440" width="3" height="3" fill="#b8681c" opacity="0.84"/><rect x="202" y="440" width="3" height="3" fill="#5a2e08" opacity="0.74"/><rect x="205" y="440" width="3" height="3" fill="#8a4a10" opacity="0.56"/><rect x="208" y="440" width="3" height="3" fill="#d0842c" opacity="0.69"/><rect x="211" y="440" width="3" height="3" fill="#d0842c" opacity="0.99"/><rect x="214" y="440" width="3" height="3" fill="#e0902e" opacity="0.81"/><rect x="217" y="440" width="3" height="3" fill="#c47422" opacity="0.63"/><rect x="220" y="440" width="3" height="3" fill="#b8681c" opacity="0.73"/><rect x="223" y="440" width="3" height="3" fill="#8a4a10" opacity="0.68"/><rect x="226" y="440" width="3" height="3" fill="#6e3a0a" opacity="0.84"/><rect x="229" y="440" width="3" height="3" fill="#e0902e" opacity="0.60"/><rect x="232" y="440" width="3" height="3" fill="#8a4a10" opacity="0.89"/><rect x="238" y="440" width="3" height="3" fill="#a65c16" opacity="0.59"/><rect x="241" y="440" width="3" height="3" fill="#3a1c04" opacity="0.98"/><rect x="247" y="440" width="3" height="3" fill="#3a1c04" opacity="0.80"/><rect x="250" y="440" width="3" height="3" fill="#d0842c" opacity="0.60"/><rect x="253" y="440" width="3" height="3" fill="#a65c16" opacity="0.80"/><rect x="256" y="440" width="3" height="3" fill="#c47422" opacity="0.71"/><rect x="259" y="440" width="3" height="3" fill="#e0902e" opacity="0.63"/><rect x="262" y="440" width="3" height="3" fill="#a65c16" opacity="0.76"/><rect x="265" y="440" width="3" height="3" fill="#c47422" opacity="0.80"/><rect x="268" y="440" width="3" height="3" fill="#8a4a10" opacity="0.81"/><rect x="271" y="440" width="3" height="3" fill="#e0902e" opacity="0.72"/><rect x="274" y="440" width="3" height="3" fill="#a65c16" opacity="0.63"/><rect x="286" y="440" width="3" height="3" fill="#3a1c04" opacity="0.74"/><rect x="79" y="443" width="3" height="3" fill="#3a1c04" opacity="0.96"/><rect x="82" y="443" width="3" height="3" fill="#1c0c02" opacity="0.75"/><rect x="85" y="443" width="3" height="3" fill="#d0842c" opacity="0.91"/><rect x="88" y="443" width="3" height="3" fill="#d0842c" opacity="0.99"/><rect x="91" y="443" width="3" height="3" fill="#6e3a0a" opacity="0.80"/><rect x="97" y="443" width="3" height="3" fill="#e0902e" opacity="0.97"/><rect x="103" y="443" width="3" height="3" fill="#1c0c02" opacity="0.60"/><rect x="109" y="443" width="3" height="3" fill="#8a4a10" opacity="0.72"/><rect x="112" y="443" width="3" height="3" fill="#5a2e08" opacity="0.75"/><rect x="118" y="443" width="3" height="3" fill="#c47422" opacity="0.64"/><rect x="121" y="443" width="3" height="3" fill="#c47422" opacity="0.88"/><rect x="124" y="443" width="3" height="3" fill="#d0842c" opacity="0.59"/><rect x="127" y="443" width="3" height="3" fill="#c47422" opacity="0.96"/><rect x="130" y="443" width="3" height="3" fill="#c47422" opacity="0.63"/><rect x="136" y="443" width="3" height="3" fill="#c47422" opacity="0.76"/><rect x="142" y="443" width="3" height="3" fill="#d0842c" opacity="0.64"/><rect x="151" y="443" width="3" height="3" fill="#1c0c02" opacity="0.96"/><rect x="157" y="443" width="3" height="3" fill="#6e3a0a" opacity="0.58"/><rect x="160" y="443" width="3" height="3" fill="#d0842c" opacity="0.75"/><rect x="163" y="443" width="3" height="3" fill="#d0842c" opacity="0.74"/><rect x="166" y="443" width="3" height="3" fill="#8a4a10" opacity="0.79"/><rect x="169" y="443" width="3" height="3" fill="#c47422" opacity="0.70"/><rect x="172" y="443" width="3" height="3" fill="#d0842c" opacity="0.83"/><rect x="175" y="443" width="3" height="3" fill="#b8681c" opacity="0.60"/><rect x="178" y="443" width="3" height="3" fill="#c47422" opacity="0.88"/><rect x="181" y="443" width="3" height="3" fill="#3a1c04" opacity="0.56"/><rect x="184" y="443" width="3" height="3" fill="#8a4a10" opacity="0.84"/><rect x="187" y="443" width="3" height="3" fill="#d0842c" opacity="0.78"/><rect x="202" y="443" width="3" height="3" fill="#8a4a10" opacity="0.95"/><rect x="208" y="443" width="3" height="3" fill="#c47422" opacity="0.92"/><rect x="214" y="443" width="3" height="3" fill="#c47422" opacity="0.82"/><rect x="217" y="443" width="3" height="3" fill="#3a1c04" opacity="0.95"/><rect x="220" y="443" width="3" height="3" fill="#a65c16" opacity="0.60"/><rect x="223" y="443" width="3" height="3" fill="#a65c16" opacity="0.55"/><rect x="226" y="443" width="3" height="3" fill="#e0902e" opacity="0.90"/><rect x="229" y="443" width="3" height="3" fill="#6e3a0a" opacity="0.88"/><rect x="232" y="443" width="3" height="3" fill="#8a4a10" opacity="0.58"/><rect x="235" y="443" width="3" height="3" fill="#3a1c04" opacity="0.60"/><rect x="244" y="443" width="3" height="3" fill="#d0842c" opacity="0.80"/><rect x="247" y="443" width="3" height="3" fill="#6e3a0a" opacity="0.73"/><rect x="250" y="443" width="3" height="3" fill="#8a4a10" opacity="0.69"/><rect x="253" y="443" width="3" height="3" fill="#8a4a10" opacity="0.65"/><rect x="256" y="443" width="3" height="3" fill="#e0902e" opacity="0.77"/><rect x="262" y="443" width="3" height="3" fill="#5a2e08" opacity="0.61"/><rect x="277" y="443" width="3" height="3" fill="#5a2e08" opacity="0.90"/><rect x="283" y="443" width="3" height="3" fill="#1c0c02" opacity="0.99"/><rect x="82" y="446" width="3" height="3" fill="#e0902e" opacity="0.87"/><rect x="88" y="446" width="3" height="3" fill="#3a1c04" opacity="0.63"/><rect x="94" y="446" width="3" height="3" fill="#6e3a0a" opacity="0.93"/><rect x="100" y="446" width="3" height="3" fill="#5a2e08" opacity="0.57"/><rect x="103" y="446" width="3" height="3" fill="#a65c16" opacity="0.57"/><rect x="106" y="446" width="3" height="3" fill="#e0902e" opacity="0.64"/><rect x="109" y="446" width="3" height="3" fill="#c47422" opacity="0.84"/><rect x="112" y="446" width="3" height="3" fill="#e0902e" opacity="0.87"/><rect x="115" y="446" width="3" height="3" fill="#b8681c" opacity="0.75"/><rect x="118" y="446" width="3" height="3" fill="#c47422" opacity="0.62"/><rect x="130" y="446" width="3" height="3" fill="#e0902e" opacity="0.82"/><rect x="133" y="446" width="3" height="3" fill="#e0902e" opacity="0.94"/><rect x="136" y="446" width="3" height="3" fill="#8a4a10" opacity="0.63"/><rect x="139" y="446" width="3" height="3" fill="#d0842c" opacity="0.85"/><rect x="142" y="446" width="3" height="3" fill="#c47422" opacity="0.85"/><rect x="145" y="446" width="3" height="3" fill="#a65c16" opacity="0.76"/><rect x="148" y="446" width="3" height="3" fill="#e0902e" opacity="0.63"/><rect x="154" y="446" width="3" height="3" fill="#1c0c02" opacity="0.83"/><rect x="160" y="446" width="3" height="3" fill="#8a4a10" opacity="1.00"/><rect x="163" y="446" width="3" height="3" fill="#a65c16" opacity="0.87"/><rect x="166" y="446" width="3" height="3" fill="#c47422" opacity="0.73"/><rect x="169" y="446" width="3" height="3" fill="#0a0502" opacity="0.88"/><rect x="175" y="446" width="3" height="3" fill="#d0842c" opacity="0.70"/><rect x="181" y="446" width="3" height="3" fill="#0a0502" opacity="0.79"/><rect x="184" y="446" width="3" height="3" fill="#0a0502" opacity="0.79"/><rect x="187" y="446" width="3" height="3" fill="#0a0502" opacity="0.95"/><rect x="202" y="446" width="3" height="3" fill="#6e3a0a" opacity="0.57"/><rect x="205" y="446" width="3" height="3" fill="#8a4a10" opacity="0.90"/><rect x="208" y="446" width="3" height="3" fill="#8a4a10" opacity="0.75"/><rect x="211" y="446" width="3" height="3" fill="#d0842c" opacity="0.78"/><rect x="214" y="446" width="3" height="3" fill="#a65c16" opacity="0.92"/><rect x="220" y="446" width="3" height="3" fill="#3a1c04" opacity="0.69"/><rect x="223" y="446" width="3" height="3" fill="#3a1c04" opacity="0.95"/><rect x="229" y="446" width="3" height="3" fill="#c47422" opacity="0.82"/><rect x="235" y="446" width="3" height="3" fill="#e0902e" opacity="0.61"/><rect x="241" y="446" width="3" height="3" fill="#3a1c04" opacity="0.58"/><rect x="250" y="446" width="3" height="3" fill="#c47422" opacity="0.75"/><rect x="253" y="446" width="3" height="3" fill="#c47422" opacity="0.97"/><rect x="256" y="446" width="3" height="3" fill="#3a1c04" opacity="0.87"/><rect x="259" y="446" width="3" height="3" fill="#8a4a10" opacity="0.61"/><rect x="262" y="446" width="3" height="3" fill="#d0842c" opacity="0.86"/><rect x="265" y="446" width="3" height="3" fill="#6e3a0a" opacity="0.72"/><rect x="268" y="446" width="3" height="3" fill="#5a2e08" opacity="0.89"/><rect x="274" y="446" width="3" height="3" fill="#3a1c04" opacity="0.96"/><rect x="280" y="446" width="3" height="3" fill="#d0842c" opacity="0.67"/><rect x="283" y="446" width="3" height="3" fill="#5a2e08" opacity="0.62"/><rect x="286" y="446" width="3" height="3" fill="#8a4a10" opacity="0.98"/><rect x="289" y="446" width="3" height="3" fill="#8a4a10" opacity="0.74"/><rect x="295" y="446" width="3" height="3" fill="#8a4a10" opacity="0.57"/><rect x="79" y="449" width="3" height="3" fill="#e0902e" opacity="0.64"/><rect x="82" y="449" width="3" height="3" fill="#a65c16" opacity="0.96"/><rect x="88" y="449" width="3" height="3" fill="#1c0c02" opacity="0.93"/><rect x="91" y="449" width="3" height="3" fill="#5a2e08" opacity="0.55"/><rect x="103" y="449" width="3" height="3" fill="#b8681c" opacity="0.83"/><rect x="106" y="449" width="3" height="3" fill="#1c0c02" opacity="0.58"/><rect x="109" y="449" width="3" height="3" fill="#d0842c" opacity="0.75"/><rect x="112" y="449" width="3" height="3" fill="#d0842c" opacity="0.55"/><rect x="115" y="449" width="3" height="3" fill="#e0902e" opacity="0.75"/><rect x="118" y="449" width="3" height="3" fill="#b8681c" opacity="0.61"/><rect x="124" y="449" width="3" height="3" fill="#8a4a10" opacity="0.86"/><rect x="127" y="449" width="3" height="3" fill="#5a2e08" opacity="0.57"/><rect x="130" y="449" width="3" height="3" fill="#e0902e" opacity="0.73"/><rect x="136" y="449" width="3" height="3" fill="#8a4a10" opacity="0.64"/><rect x="139" y="449" width="3" height="3" fill="#5a2e08" opacity="0.71"/><rect x="148" y="449" width="3" height="3" fill="#c47422" opacity="0.61"/><rect x="151" y="449" width="3" height="3" fill="#e0902e" opacity="0.96"/><rect x="157" y="449" width="3" height="3" fill="#a65c16" opacity="0.61"/><rect x="160" y="449" width="3" height="3" fill="#3a1c04" opacity="0.86"/><rect x="166" y="449" width="3" height="3" fill="#a65c16" opacity="0.91"/><rect x="169" y="449" width="3" height="3" fill="#0a0502" opacity="0.76"/><rect x="172" y="449" width="3" height="3" fill="#0a0502" opacity="0.94"/><rect x="187" y="449" width="3" height="3" fill="#c47422" opacity="0.95"/><rect x="190" y="449" width="3" height="3" fill="#0a0502" opacity="0.58"/><rect x="193" y="449" width="3" height="3" fill="#0a0502" opacity="0.64"/><rect x="196" y="449" width="3" height="3" fill="#0a0502" opacity="0.57"/><rect x="202" y="449" width="3" height="3" fill="#b8681c" opacity="0.86"/><rect x="208" y="449" width="3" height="3" fill="#e0902e" opacity="0.74"/><rect x="211" y="449" width="3" height="3" fill="#8a4a10" opacity="0.58"/><rect x="214" y="449" width="3" height="3" fill="#d0842c" opacity="0.96"/><rect x="217" y="449" width="3" height="3" fill="#8a4a10" opacity="0.83"/><rect x="220" y="449" width="3" height="3" fill="#6e3a0a" opacity="0.59"/><rect x="226" y="449" width="3" height="3" fill="#3a1c04" opacity="0.57"/><rect x="229" y="449" width="3" height="3" fill="#8a4a10" opacity="0.64"/><rect x="232" y="449" width="3" height="3" fill="#5a2e08" opacity="0.59"/><rect x="238" y="449" width="3" height="3" fill="#d0842c" opacity="0.81"/><rect x="241" y="449" width="3" height="3" fill="#e0902e" opacity="0.79"/><rect x="247" y="449" width="3" height="3" fill="#3a1c04" opacity="0.67"/><rect x="253" y="449" width="3" height="3" fill="#d0842c" opacity="0.63"/><rect x="256" y="449" width="3" height="3" fill="#5a2e08" opacity="0.69"/><rect x="259" y="449" width="3" height="3" fill="#3a1c04" opacity="0.66"/><rect x="262" y="449" width="3" height="3" fill="#b8681c" opacity="0.95"/><rect x="265" y="449" width="3" height="3" fill="#5a2e08" opacity="0.92"/><rect x="274" y="449" width="3" height="3" fill="#8a4a10" opacity="0.65"/><rect x="277" y="449" width="3" height="3" fill="#1c0c02" opacity="0.66"/><rect x="280" y="449" width="3" height="3" fill="#e0902e" opacity="0.94"/><rect x="283" y="449" width="3" height="3" fill="#5a2e08" opacity="0.75"/><rect x="289" y="449" width="3" height="3" fill="#8a4a10" opacity="0.92"/><rect x="292" y="449" width="3" height="3" fill="#3a1c04" opacity="0.68"/><rect x="73" y="452" width="3" height="3" fill="#1c0c02" opacity="0.56"/><rect x="76" y="452" width="3" height="3" fill="#a65c16" opacity="0.63"/><rect x="82" y="452" width="3" height="3" fill="#1c0c02" opacity="0.92"/><rect x="85" y="452" width="3" height="3" fill="#b8681c" opacity="0.79"/><rect x="88" y="452" width="3" height="3" fill="#8a4a10" opacity="0.91"/><rect x="94" y="452" width="3" height="3" fill="#6e3a0a" opacity="0.79"/><rect x="97" y="452" width="3" height="3" fill="#5a2e08" opacity="0.81"/><rect x="103" y="452" width="3" height="3" fill="#b8681c" opacity="0.68"/><rect x="106" y="452" width="3" height="3" fill="#e0902e" opacity="0.95"/><rect x="109" y="452" width="3" height="3" fill="#b8681c" opacity="0.99"/><rect x="112" y="452" width="3" height="3" fill="#8a4a10" opacity="0.62"/><rect x="115" y="452" width="3" height="3" fill="#1c0c02" opacity="0.82"/><rect x="121" y="452" width="3" height="3" fill="#a65c16" opacity="1.00"/><rect x="124" y="452" width="3" height="3" fill="#e0902e" opacity="0.80"/><rect x="127" y="452" width="3" height="3" fill="#c47422" opacity="0.94"/><rect x="130" y="452" width="3" height="3" fill="#6e3a0a" opacity="0.99"/><rect x="133" y="452" width="3" height="3" fill="#1c0c02" opacity="0.68"/><rect x="136" y="452" width="3" height="3" fill="#3a1c04" opacity="0.63"/><rect x="139" y="452" width="3" height="3" fill="#c47422" opacity="0.84"/><rect x="142" y="452" width="3" height="3" fill="#b8681c" opacity="0.96"/><rect x="145" y="452" width="3" height="3" fill="#a65c16" opacity="0.99"/><rect x="151" y="452" width="3" height="3" fill="#5a2e08" opacity="0.83"/><rect x="160" y="452" width="3" height="3" fill="#a65c16" opacity="0.70"/><rect x="166" y="452" width="3" height="3" fill="#5a2e08" opacity="0.66"/><rect x="169" y="452" width="3" height="3" fill="#0a0502" opacity="0.75"/><rect x="172" y="452" width="3" height="3" fill="#0a0502" opacity="0.84"/><rect x="175" y="452" width="3" height="3" fill="#0a0502" opacity="0.99"/><rect x="178" y="452" width="3" height="3" fill="#0a0502" opacity="0.99"/><rect x="181" y="452" width="3" height="3" fill="#8a4a10" opacity="0.67"/><rect x="187" y="452" width="3" height="3" fill="#0a0502" opacity="0.96"/><rect x="190" y="452" width="3" height="3" fill="#3a1c04" opacity="0.59"/><rect x="196" y="452" width="3" height="3" fill="#1c0c02" opacity="0.91"/><rect x="202" y="452" width="3" height="3" fill="#b8681c" opacity="0.70"/><rect x="205" y="452" width="3" height="3" fill="#a65c16" opacity="0.77"/><rect x="211" y="452" width="3" height="3" fill="#8a4a10" opacity="0.60"/><rect x="214" y="452" width="3" height="3" fill="#a65c16" opacity="0.72"/><rect x="217" y="452" width="3" height="3" fill="#6e3a0a" opacity="0.77"/><rect x="220" y="452" width="3" height="3" fill="#a65c16" opacity="0.67"/><rect x="223" y="452" width="3" height="3" fill="#3a1c04" opacity="0.57"/><rect x="226" y="452" width="3" height="3" fill="#c47422" opacity="0.65"/><rect x="229" y="452" width="3" height="3" fill="#c47422" opacity="0.70"/><rect x="235" y="452" width="3" height="3" fill="#b8681c" opacity="0.66"/><rect x="247" y="452" width="3" height="3" fill="#5a2e08" opacity="0.64"/><rect x="250" y="452" width="3" height="3" fill="#a65c16" opacity="0.70"/><rect x="253" y="452" width="3" height="3" fill="#8a4a10" opacity="0.83"/><rect x="256" y="452" width="3" height="3" fill="#e0902e" opacity="0.89"/><rect x="259" y="452" width="3" height="3" fill="#c47422" opacity="0.90"/><rect x="262" y="452" width="3" height="3" fill="#3a1c04" opacity="0.63"/><rect x="265" y="452" width="3" height="3" fill="#1c0c02" opacity="0.74"/><rect x="274" y="452" width="3" height="3" fill="#a65c16" opacity="0.99"/><rect x="277" y="452" width="3" height="3" fill="#d0842c" opacity="0.86"/><rect x="280" y="452" width="3" height="3" fill="#d0842c" opacity="0.93"/><rect x="283" y="452" width="3" height="3" fill="#a65c16" opacity="0.69"/><rect x="289" y="452" width="3" height="3" fill="#a65c16" opacity="0.56"/><rect x="292" y="452" width="3" height="3" fill="#e0902e" opacity="0.86"/><rect x="73" y="455" width="3" height="3" fill="#1c0c02" opacity="0.89"/><rect x="82" y="455" width="3" height="3" fill="#5a2e08" opacity="0.73"/><rect x="91" y="455" width="3" height="3" fill="#1c0c02" opacity="0.72"/><rect x="94" y="455" width="3" height="3" fill="#e0902e" opacity="0.63"/><rect x="106" y="455" width="3" height="3" fill="#3a1c04" opacity="0.76"/><rect x="109" y="455" width="3" height="3" fill="#3a1c04" opacity="0.79"/><rect x="112" y="455" width="3" height="3" fill="#3a1c04" opacity="0.68"/><rect x="121" y="455" width="3" height="3" fill="#8a4a10" opacity="0.84"/><rect x="124" y="455" width="3" height="3" fill="#8a4a10" opacity="0.71"/><rect x="127" y="455" width="3" height="3" fill="#3a1c04" opacity="0.81"/><rect x="130" y="455" width="3" height="3" fill="#3a1c04" opacity="0.80"/><rect x="139" y="455" width="3" height="3" fill="#5a2e08" opacity="0.95"/><rect x="142" y="455" width="3" height="3" fill="#6e3a0a" opacity="0.58"/><rect x="151" y="455" width="3" height="3" fill="#6e3a0a" opacity="0.75"/><rect x="160" y="455" width="3" height="3" fill="#a65c16" opacity="0.65"/><rect x="169" y="455" width="3" height="3" fill="#0a0502" opacity="0.98"/><rect x="172" y="455" width="3" height="3" fill="#c47422" opacity="0.68"/><rect x="175" y="455" width="3" height="3" fill="#c47422" opacity="0.71"/><rect x="199" y="455" width="3" height="3" fill="#0a0502" opacity="0.97"/><rect x="223" y="455" width="3" height="3" fill="#3a1c04" opacity="0.78"/><rect x="229" y="455" width="3" height="3" fill="#d0842c" opacity="0.86"/><rect x="232" y="455" width="3" height="3" fill="#a65c16" opacity="0.65"/><rect x="241" y="455" width="3" height="3" fill="#1c0c02" opacity="0.66"/><rect x="250" y="455" width="3" height="3" fill="#3a1c04" opacity="0.89"/><rect x="253" y="455" width="3" height="3" fill="#6e3a0a" opacity="0.88"/><rect x="256" y="455" width="3" height="3" fill="#8a4a10" opacity="0.72"/><rect x="259" y="455" width="3" height="3" fill="#d0842c" opacity="0.88"/><rect x="265" y="455" width="3" height="3" fill="#6e3a0a" opacity="0.63"/><rect x="271" y="455" width="3" height="3" fill="#6e3a0a" opacity="0.66"/><rect x="274" y="455" width="3" height="3" fill="#3a1c04" opacity="0.73"/><rect x="277" y="455" width="3" height="3" fill="#d0842c" opacity="0.67"/><rect x="280" y="455" width="3" height="3" fill="#b8681c" opacity="0.95"/><rect x="301" y="455" width="3" height="3" fill="#1c0c02" opacity="0.73"/><rect x="76" y="458" width="3" height="3" fill="#c47422" opacity="0.83"/><rect x="79" y="458" width="3" height="3" fill="#b8681c" opacity="0.86"/><rect x="82" y="458" width="3" height="3" fill="#6e3a0a" opacity="0.66"/><rect x="91" y="458" width="3" height="3" fill="#5a2e08" opacity="0.79"/><rect x="100" y="458" width="3" height="3" fill="#6e3a0a" opacity="0.92"/><rect x="115" y="458" width="3" height="3" fill="#6e3a0a" opacity="0.68"/><rect x="118" y="458" width="3" height="3" fill="#3a1c04" opacity="0.85"/><rect x="133" y="458" width="3" height="3" fill="#1c0c02" opacity="0.72"/><rect x="136" y="458" width="3" height="3" fill="#a65c16" opacity="0.64"/><rect x="160" y="458" width="3" height="3" fill="#3a1c04" opacity="0.88"/><rect x="169" y="458" width="3" height="3" fill="#a65c16" opacity="0.79"/><rect x="172" y="458" width="3" height="3" fill="#0a0502" opacity="0.68"/><rect x="181" y="458" width="3" height="3" fill="#0a0502" opacity="0.87"/><rect x="184" y="458" width="3" height="3" fill="#0a0502" opacity="0.97"/><rect x="193" y="458" width="3" height="3" fill="#0a0502" opacity="0.96"/><rect x="208" y="458" width="3" height="3" fill="#e0902e" opacity="0.66"/><rect x="214" y="458" width="3" height="3" fill="#1c0c02" opacity="0.88"/><rect x="223" y="458" width="3" height="3" fill="#6e3a0a" opacity="0.56"/><rect x="229" y="458" width="3" height="3" fill="#3a1c04" opacity="0.94"/><rect x="238" y="458" width="3" height="3" fill="#8a4a10" opacity="0.90"/><rect x="241" y="458" width="3" height="3" fill="#3a1c04" opacity="0.69"/><rect x="259" y="458" width="3" height="3" fill="#a65c16" opacity="0.98"/><rect x="262" y="458" width="3" height="3" fill="#6e3a0a" opacity="0.64"/><rect x="274" y="458" width="3" height="3" fill="#c47422" opacity="0.85"/><rect x="277" y="458" width="3" height="3" fill="#a65c16" opacity="0.97"/><rect x="280" y="458" width="3" height="3" fill="#6e3a0a" opacity="0.98"/><rect x="292" y="458" width="3" height="3" fill="#5a2e08" opacity="0.60"/><rect x="298" y="458" width="3" height="3" fill="#8a4a10" opacity="0.63"/><rect x="70" y="461" width="3" height="3" fill="#3a1c04" opacity="0.67"/><rect x="79" y="461" width="3" height="3" fill="#a65c16" opacity="0.89"/><rect x="82" y="461" width="3" height="3" fill="#1c0c02" opacity="0.99"/><rect x="91" y="461" width="3" height="3" fill="#6e3a0a" opacity="0.67"/><rect x="94" y="461" width="3" height="3" fill="#d0842c" opacity="0.96"/><rect x="100" y="461" width="3" height="3" fill="#e0902e" opacity="0.80"/><rect x="112" y="461" width="3" height="3" fill="#3a1c04" opacity="0.84"/><rect x="124" y="461" width="3" height="3" fill="#d0842c" opacity="0.90"/><rect x="127" y="461" width="3" height="3" fill="#3a1c04" opacity="0.63"/><rect x="136" y="461" width="3" height="3" fill="#1c0c02" opacity="0.96"/><rect x="139" y="461" width="3" height="3" fill="#5a2e08" opacity="0.97"/><rect x="148" y="461" width="3" height="3" fill="#e0902e" opacity="0.68"/><rect x="154" y="461" width="3" height="3" fill="#b8681c" opacity="0.83"/><rect x="157" y="461" width="3" height="3" fill="#3a1c04" opacity="0.56"/><rect x="169" y="461" width="3" height="3" fill="#0a0502" opacity="0.65"/><rect x="172" y="461" width="3" height="3" fill="#0a0502" opacity="1.00"/><rect x="178" y="461" width="3" height="3" fill="#1c0c02" opacity="0.64"/><rect x="202" y="461" width="3" height="3" fill="#3a1c04" opacity="0.61"/><rect x="205" y="461" width="3" height="3" fill="#6e3a0a" opacity="0.89"/><rect x="217" y="461" width="3" height="3" fill="#b8681c" opacity="0.60"/><rect x="223" y="461" width="3" height="3" fill="#1c0c02" opacity="0.72"/><rect x="235" y="461" width="3" height="3" fill="#1c0c02" opacity="0.56"/><rect x="241" y="461" width="3" height="3" fill="#c47422" opacity="0.83"/><rect x="250" y="461" width="3" height="3" fill="#8a4a10" opacity="0.71"/><rect x="253" y="461" width="3" height="3" fill="#5a2e08" opacity="0.90"/><rect x="262" y="461" width="3" height="3" fill="#5a2e08" opacity="0.73"/><rect x="265" y="461" width="3" height="3" fill="#8a4a10" opacity="0.57"/><rect x="271" y="461" width="3" height="3" fill="#6e3a0a" opacity="0.65"/><rect x="280" y="461" width="3" height="3" fill="#3a1c04" opacity="0.80"/><rect x="286" y="461" width="3" height="3" fill="#5a2e08" opacity="0.59"/><rect x="292" y="461" width="3" height="3" fill="#6e3a0a" opacity="0.64"/><rect x="298" y="461" width="3" height="3" fill="#5a2e08" opacity="0.69"/><rect x="301" y="461" width="3" height="3" fill="#8a4a10" opacity="0.65"/><rect x="58" y="464" width="3" height="3" fill="#a65c16" opacity="0.61"/><rect x="67" y="464" width="3" height="3" fill="#a65c16" opacity="0.65"/><rect x="70" y="464" width="3" height="3" fill="#6e3a0a" opacity="0.63"/><rect x="82" y="464" width="3" height="3" fill="#8a4a10" opacity="0.65"/><rect x="88" y="464" width="3" height="3" fill="#3a1c04" opacity="0.94"/><rect x="97" y="464" width="3" height="3" fill="#1c0c02" opacity="0.80"/><rect x="100" y="464" width="3" height="3" fill="#5a2e08" opacity="0.66"/><rect x="103" y="464" width="3" height="3" fill="#3a1c04" opacity="0.98"/><rect x="106" y="464" width="3" height="3" fill="#8a4a10" opacity="0.81"/><rect x="115" y="464" width="3" height="3" fill="#b8681c" opacity="0.77"/><rect x="118" y="464" width="3" height="3" fill="#d0842c" opacity="0.65"/><rect x="133" y="464" width="3" height="3" fill="#c47422" opacity="0.71"/><rect x="139" y="464" width="3" height="3" fill="#6e3a0a" opacity="0.74"/><rect x="142" y="464" width="3" height="3" fill="#6e3a0a" opacity="0.77"/><rect x="184" y="464" width="3" height="3" fill="#0a0502" opacity="0.71"/><rect x="190" y="464" width="3" height="3" fill="#0a0502" opacity="0.87"/><rect x="193" y="464" width="3" height="3" fill="#a65c16" opacity="0.59"/><rect x="232" y="464" width="3" height="3" fill="#3a1c04" opacity="0.72"/><rect x="247" y="464" width="3" height="3" fill="#5a2e08" opacity="0.58"/><rect x="250" y="464" width="3" height="3" fill="#5a2e08" opacity="0.89"/><rect x="253" y="464" width="3" height="3" fill="#3a1c04" opacity="0.91"/><rect x="259" y="464" width="3" height="3" fill="#e0902e" opacity="0.67"/><rect x="268" y="464" width="3" height="3" fill="#d0842c" opacity="0.67"/><rect x="274" y="464" width="3" height="3" fill="#5a2e08" opacity="0.72"/><rect x="280" y="464" width="3" height="3" fill="#c47422" opacity="0.99"/><rect x="283" y="464" width="3" height="3" fill="#5a2e08" opacity="0.56"/><rect x="295" y="464" width="3" height="3" fill="#5a2e08" opacity="0.78"/><rect x="313" y="464" width="3" height="3" fill="#1c0c02" opacity="0.85"/><rect x="52" y="467" width="3" height="3" fill="#1c0c02" opacity="0.88"/><rect x="55" y="467" width="3" height="3" fill="#1c0c02" opacity="0.63"/><rect x="67" y="467" width="3" height="3" fill="#3a1c04" opacity="0.78"/><rect x="73" y="467" width="3" height="3" fill="#8a4a10" opacity="0.93"/><rect x="76" y="467" width="3" height="3" fill="#b8681c" opacity="0.75"/><rect x="79" y="467" width="3" height="3" fill="#3a1c04" opacity="0.56"/><rect x="88" y="467" width="3" height="3" fill="#5a2e08" opacity="0.67"/><rect x="94" y="467" width="3" height="3" fill="#e0902e" opacity="1.00"/><rect x="100" y="467" width="3" height="3" fill="#5a2e08" opacity="0.58"/><rect x="115" y="467" width="3" height="3" fill="#8a4a10" opacity="0.64"/><rect x="121" y="467" width="3" height="3" fill="#3a1c04" opacity="0.71"/><rect x="133" y="467" width="3" height="3" fill="#1c0c02" opacity="0.92"/><rect x="139" y="467" width="3" height="3" fill="#b8681c" opacity="0.66"/><rect x="142" y="467" width="3" height="3" fill="#3a1c04" opacity="0.70"/><rect x="145" y="467" width="3" height="3" fill="#1c0c02" opacity="0.86"/><rect x="151" y="467" width="3" height="3" fill="#c47422" opacity="0.61"/><rect x="154" y="467" width="3" height="3" fill="#6e3a0a" opacity="0.93"/><rect x="163" y="467" width="3" height="3" fill="#1c0c02" opacity="0.63"/><rect x="166" y="467" width="3" height="3" fill="#3a1c04" opacity="0.56"/><rect x="172" y="467" width="3" height="3" fill="#1c0c02" opacity="0.60"/><rect x="178" y="467" width="3" height="3" fill="#3a1c04" opacity="0.87"/><rect x="184" y="467" width="3" height="3" fill="#8a4a10" opacity="0.84"/><rect x="187" y="467" width="3" height="3" fill="#5a2e08" opacity="0.77"/><rect x="199" y="467" width="3" height="3" fill="#8a4a10" opacity="0.59"/><rect x="214" y="467" width="3" height="3" fill="#e0902e" opacity="0.68"/><rect x="235" y="467" width="3" height="3" fill="#b8681c" opacity="0.96"/><rect x="259" y="467" width="3" height="3" fill="#d0842c" opacity="0.95"/><rect x="262" y="467" width="3" height="3" fill="#8a4a10" opacity="0.61"/><rect x="265" y="467" width="3" height="3" fill="#6e3a0a" opacity="0.75"/><rect x="280" y="467" width="3" height="3" fill="#d0842c" opacity="0.92"/><rect x="286" y="467" width="3" height="3" fill="#d0842c" opacity="0.77"/><rect x="301" y="467" width="3" height="3" fill="#3a1c04" opacity="0.98"/><rect x="304" y="467" width="3" height="3" fill="#1c0c02" opacity="0.65"/><rect x="307" y="467" width="3" height="3" fill="#d0842c" opacity="0.87"/><rect x="310" y="467" width="3" height="3" fill="#5a2e08" opacity="0.60"/><rect x="52" y="470" width="3" height="3" fill="#3a1c04" opacity="0.73"/><rect x="55" y="470" width="3" height="3" fill="#3a1c04" opacity="0.93"/><rect x="67" y="470" width="3" height="3" fill="#6e3a0a" opacity="0.89"/><rect x="73" y="470" width="3" height="3" fill="#5a2e08" opacity="0.57"/><rect x="76" y="470" width="3" height="3" fill="#5a2e08" opacity="0.84"/><rect x="82" y="470" width="3" height="3" fill="#1c0c02" opacity="0.83"/><rect x="91" y="470" width="3" height="3" fill="#c47422" opacity="0.87"/><rect x="103" y="470" width="3" height="3" fill="#8a4a10" opacity="0.89"/><rect x="106" y="470" width="3" height="3" fill="#1c0c02" opacity="0.85"/><rect x="109" y="470" width="3" height="3" fill="#8a4a10" opacity="0.60"/><rect x="112" y="470" width="3" height="3" fill="#6e3a0a" opacity="0.84"/><rect x="115" y="470" width="3" height="3" fill="#d0842c" opacity="0.92"/><rect x="127" y="470" width="3" height="3" fill="#e0902e" opacity="0.95"/><rect x="142" y="470" width="3" height="3" fill="#6e3a0a" opacity="0.97"/><rect x="151" y="470" width="3" height="3" fill="#1c0c02" opacity="0.58"/><rect x="160" y="470" width="3" height="3" fill="#5a2e08" opacity="0.59"/><rect x="166" y="470" width="3" height="3" fill="#6e3a0a" opacity="0.84"/><rect x="175" y="470" width="3" height="3" fill="#b8681c" opacity="0.88"/><rect x="184" y="470" width="3" height="3" fill="#6e3a0a" opacity="0.98"/><rect x="196" y="470" width="3" height="3" fill="#1c0c02" opacity="0.73"/><rect x="199" y="470" width="3" height="3" fill="#3a1c04" opacity="0.93"/><rect x="202" y="470" width="3" height="3" fill="#6e3a0a" opacity="1.00"/><rect x="214" y="470" width="3" height="3" fill="#5a2e08" opacity="0.91"/><rect x="226" y="470" width="3" height="3" fill="#c47422" opacity="0.65"/><rect x="229" y="470" width="3" height="3" fill="#3a1c04" opacity="0.99"/><rect x="235" y="470" width="3" height="3" fill="#3a1c04" opacity="0.56"/><rect x="238" y="470" width="3" height="3" fill="#8a4a10" opacity="0.93"/><rect x="241" y="470" width="3" height="3" fill="#d0842c" opacity="0.95"/><rect x="268" y="470" width="3" height="3" fill="#1c0c02" opacity="0.77"/><rect x="277" y="470" width="3" height="3" fill="#c47422" opacity="0.75"/><rect x="280" y="470" width="3" height="3" fill="#5a2e08" opacity="0.56"/><rect x="283" y="470" width="3" height="3" fill="#3a1c04" opacity="0.83"/><rect x="286" y="470" width="3" height="3" fill="#c47422" opacity="0.96"/><rect x="289" y="470" width="3" height="3" fill="#6e3a0a" opacity="0.80"/><rect x="298" y="470" width="3" height="3" fill="#6e3a0a" opacity="0.88"/><rect x="316" y="470" width="3" height="3" fill="#3a1c04" opacity="0.64"/><rect x="52" y="473" width="3" height="3" fill="#1c0c02" opacity="0.83"/><rect x="55" y="473" width="3" height="3" fill="#b8681c" opacity="0.77"/><rect x="61" y="473" width="3" height="3" fill="#6e3a0a" opacity="0.96"/><rect x="67" y="473" width="3" height="3" fill="#5a2e08" opacity="0.69"/><rect x="73" y="473" width="3" height="3" fill="#c47422" opacity="0.68"/><rect x="79" y="473" width="3" height="3" fill="#6e3a0a" opacity="0.95"/><rect x="91" y="473" width="3" height="3" fill="#5a2e08" opacity="0.65"/><rect x="97" y="473" width="3" height="3" fill="#6e3a0a" opacity="0.60"/><rect x="103" y="473" width="3" height="3" fill="#1c0c02" opacity="0.73"/><rect x="112" y="473" width="3" height="3" fill="#e0902e" opacity="0.76"/><rect x="121" y="473" width="3" height="3" fill="#5a2e08" opacity="0.86"/><rect x="124" y="473" width="3" height="3" fill="#1c0c02" opacity="0.64"/><rect x="142" y="473" width="3" height="3" fill="#3a1c04" opacity="0.94"/><rect x="145" y="473" width="3" height="3" fill="#3a1c04" opacity="0.90"/><rect x="148" y="473" width="3" height="3" fill="#6e3a0a" opacity="0.67"/><rect x="151" y="473" width="3" height="3" fill="#b8681c" opacity="0.94"/><rect x="157" y="473" width="3" height="3" fill="#5a2e08" opacity="0.77"/><rect x="160" y="473" width="3" height="3" fill="#a65c16" opacity="0.99"/><rect x="166" y="473" width="3" height="3" fill="#6e3a0a" opacity="0.93"/><rect x="175" y="473" width="3" height="3" fill="#3a1c04" opacity="0.77"/><rect x="178" y="473" width="3" height="3" fill="#6e3a0a" opacity="0.88"/><rect x="190" y="473" width="3" height="3" fill="#6e3a0a" opacity="0.64"/><rect x="193" y="473" width="3" height="3" fill="#1c0c02" opacity="0.55"/><rect x="205" y="473" width="3" height="3" fill="#3a1c04" opacity="0.84"/><rect x="217" y="473" width="3" height="3" fill="#8a4a10" opacity="0.84"/><rect x="226" y="473" width="3" height="3" fill="#5a2e08" opacity="0.93"/><rect x="238" y="473" width="3" height="3" fill="#6e3a0a" opacity="0.70"/><rect x="241" y="473" width="3" height="3" fill="#1c0c02" opacity="0.82"/><rect x="244" y="473" width="3" height="3" fill="#b8681c" opacity="0.90"/><rect x="256" y="473" width="3" height="3" fill="#6e3a0a" opacity="0.96"/><rect x="265" y="473" width="3" height="3" fill="#e0902e" opacity="0.59"/><rect x="274" y="473" width="3" height="3" fill="#1c0c02" opacity="0.91"/><rect x="277" y="473" width="3" height="3" fill="#1c0c02" opacity="0.84"/><rect x="286" y="473" width="3" height="3" fill="#5a2e08" opacity="0.64"/><rect x="298" y="473" width="3" height="3" fill="#b8681c" opacity="0.86"/><rect x="307" y="473" width="3" height="3" fill="#1c0c02" opacity="0.79"/><rect x="73" y="476" width="3" height="3" fill="#6e3a0a" opacity="0.57"/><rect x="76" y="476" width="3" height="3" fill="#8a4a10" opacity="0.68"/><rect x="88" y="476" width="3" height="3" fill="#1c0c02" opacity="0.62"/><rect x="100" y="476" width="3" height="3" fill="#1c0c02" opacity="0.60"/><rect x="106" y="476" width="3" height="3" fill="#1c0c02" opacity="0.65"/><rect x="127" y="476" width="3" height="3" fill="#3a1c04" opacity="0.71"/><rect x="145" y="476" width="3" height="3" fill="#3a1c04" opacity="0.88"/><rect x="151" y="476" width="3" height="3" fill="#c47422" opacity="0.72"/><rect x="160" y="476" width="3" height="3" fill="#8a4a10" opacity="0.69"/><rect x="169" y="476" width="3" height="3" fill="#3a1c04" opacity="0.99"/><rect x="187" y="476" width="3" height="3" fill="#6e3a0a" opacity="0.77"/><rect x="193" y="476" width="3" height="3" fill="#3a1c04" opacity="0.93"/><rect x="214" y="476" width="3" height="3" fill="#c47422" opacity="0.95"/><rect x="217" y="476" width="3" height="3" fill="#c47422" opacity="0.67"/><rect x="232" y="476" width="3" height="3" fill="#b8681c" opacity="0.85"/><rect x="235" y="476" width="3" height="3" fill="#3a1c04" opacity="0.88"/><rect x="241" y="476" width="3" height="3" fill="#1c0c02" opacity="0.70"/><rect x="262" y="476" width="3" height="3" fill="#3a1c04" opacity="0.69"/><rect x="265" y="476" width="3" height="3" fill="#3a1c04" opacity="0.72"/><rect x="271" y="476" width="3" height="3" fill="#1c0c02" opacity="0.62"/><rect x="274" y="476" width="3" height="3" fill="#1c0c02" opacity="0.91"/><rect x="292" y="476" width="3" height="3" fill="#5a2e08" opacity="0.84"/><rect x="295" y="476" width="3" height="3" fill="#e0902e" opacity="0.84"/><rect x="298" y="476" width="3" height="3" fill="#c47422" opacity="0.61"/><rect x="88" y="479" width="3" height="3" fill="#e0902e" opacity="0.84"/><rect x="91" y="479" width="3" height="3" fill="#6e3a0a" opacity="0.55"/><rect x="97" y="479" width="3" height="3" fill="#3a1c04" opacity="0.67"/><rect x="127" y="479" width="3" height="3" fill="#1c0c02" opacity="0.89"/><rect x="130" y="479" width="3" height="3" fill="#e0902e" opacity="0.72"/><rect x="151" y="479" width="3" height="3" fill="#5a2e08" opacity="0.66"/><rect x="157" y="479" width="3" height="3" fill="#1c0c02" opacity="0.78"/><rect x="160" y="479" width="3" height="3" fill="#1c0c02" opacity="0.84"/><rect x="166" y="479" width="3" height="3" fill="#3a1c04" opacity="0.94"/><rect x="205" y="479" width="3" height="3" fill="#5a2e08" opacity="1.00"/><rect x="208" y="479" width="3" height="3" fill="#e0902e" opacity="0.99"/><rect x="214" y="479" width="3" height="3" fill="#5a2e08" opacity="0.73"/><rect x="238" y="479" width="3" height="3" fill="#d0842c" opacity="0.79"/><rect x="241" y="479" width="3" height="3" fill="#5a2e08" opacity="0.88"/><rect x="247" y="479" width="3" height="3" fill="#1c0c02" opacity="0.64"/><rect x="250" y="479" width="3" height="3" fill="#5a2e08" opacity="0.87"/><rect x="280" y="479" width="3" height="3" fill="#6e3a0a" opacity="0.63"/><rect x="289" y="479" width="3" height="3" fill="#d0842c" opacity="0.80"/><rect x="295" y="479" width="3" height="3" fill="#3a1c04" opacity="0.69"/><rect x="298" y="479" width="3" height="3" fill="#6e3a0a" opacity="0.65"/><rect x="301" y="479" width="3" height="3" fill="#8a4a10" opacity="0.72"/><rect x="85" y="482" width="3" height="3" fill="#8a4a10" opacity="0.65"/><rect x="88" y="482" width="3" height="3" fill="#6e3a0a" opacity="0.57"/><rect x="103" y="482" width="3" height="3" fill="#3a1c04" opacity="0.82"/><rect x="109" y="482" width="3" height="3" fill="#5a2e08" opacity="0.66"/><rect x="121" y="482" width="3" height="3" fill="#1c0c02" opacity="0.64"/><rect x="124" y="482" width="3" height="3" fill="#d0842c" opacity="0.92"/><rect x="145" y="482" width="3" height="3" fill="#e0902e" opacity="1.00"/><rect x="160" y="482" width="3" height="3" fill="#3a1c04" opacity="0.78"/><rect x="169" y="482" width="3" height="3" fill="#3a1c04" opacity="0.96"/><rect x="172" y="482" width="3" height="3" fill="#d0842c" opacity="0.94"/><rect x="190" y="482" width="3" height="3" fill="#5a2e08" opacity="0.87"/><rect x="202" y="482" width="3" height="3" fill="#5a2e08" opacity="0.91"/><rect x="220" y="482" width="3" height="3" fill="#6e3a0a" opacity="0.66"/><rect x="223" y="482" width="3" height="3" fill="#6e3a0a" opacity="0.92"/><rect x="229" y="482" width="3" height="3" fill="#6e3a0a" opacity="0.94"/><rect x="256" y="482" width="3" height="3" fill="#b8681c" opacity="0.94"/><rect x="271" y="482" width="3" height="3" fill="#6e3a0a" opacity="0.85"/><rect x="277" y="482" width="3" height="3" fill="#1c0c02" opacity="0.56"/><rect x="283" y="482" width="3" height="3" fill="#3a1c04" opacity="0.65"/><rect x="292" y="482" width="3" height="3" fill="#c47422" opacity="0.65"/><rect x="70" y="485" width="3" height="3" fill="#b8681c" opacity="0.74"/><rect x="76" y="485" width="3" height="3" fill="#1c0c02" opacity="0.88"/><rect x="133" y="485" width="3" height="3" fill="#8a4a10" opacity="0.79"/><rect x="151" y="485" width="3" height="3" fill="#1c0c02" opacity="0.70"/><rect x="154" y="485" width="3" height="3" fill="#1c0c02" opacity="0.82"/><rect x="160" y="485" width="3" height="3" fill="#1c0c02" opacity="0.65"/><rect x="172" y="485" width="3" height="3" fill="#b8681c" opacity="0.83"/><rect x="193" y="485" width="3" height="3" fill="#5a2e08" opacity="0.85"/><rect x="196" y="485" width="3" height="3" fill="#c47422" opacity="0.74"/><rect x="205" y="485" width="3" height="3" fill="#d0842c" opacity="0.87"/><rect x="214" y="485" width="3" height="3" fill="#5a2e08" opacity="0.61"/><rect x="217" y="485" width="3" height="3" fill="#3a1c04" opacity="0.63"/><rect x="223" y="485" width="3" height="3" fill="#3a1c04" opacity="0.63"/><rect x="229" y="485" width="3" height="3" fill="#6e3a0a" opacity="0.69"/><rect x="265" y="485" width="3" height="3" fill="#5a2e08" opacity="0.75"/><rect x="268" y="485" width="3" height="3" fill="#b8681c" opacity="0.65"/><rect x="277" y="485" width="3" height="3" fill="#8a4a10" opacity="0.91"/><rect x="298" y="485" width="3" height="3" fill="#6e3a0a" opacity="0.62"/><rect x="73" y="488" width="3" height="3" fill="#3a1c04" opacity="0.97"/><rect x="100" y="488" width="3" height="3" fill="#1c0c02" opacity="0.88"/><rect x="112" y="488" width="3" height="3" fill="#3a1c04" opacity="0.95"/><rect x="121" y="488" width="3" height="3" fill="#c47422" opacity="0.72"/><rect x="130" y="488" width="3" height="3" fill="#5a2e08" opacity="0.83"/><rect x="133" y="488" width="3" height="3" fill="#c47422" opacity="0.94"/><rect x="139" y="488" width="3" height="3" fill="#3a1c04" opacity="0.60"/><rect x="142" y="488" width="3" height="3" fill="#a65c16" opacity="0.84"/><rect x="145" y="488" width="3" height="3" fill="#1c0c02" opacity="0.67"/><rect x="154" y="488" width="3" height="3" fill="#c47422" opacity="0.83"/><rect x="166" y="488" width="3" height="3" fill="#5a2e08" opacity="0.64"/><rect x="193" y="488" width="3" height="3" fill="#e0902e" opacity="0.89"/><rect x="196" y="488" width="3" height="3" fill="#3a1c04" opacity="0.96"/><rect x="211" y="488" width="3" height="3" fill="#d0842c" opacity="0.77"/><rect x="223" y="488" width="3" height="3" fill="#3a1c04" opacity="0.57"/><rect x="226" y="488" width="3" height="3" fill="#1c0c02" opacity="0.92"/><rect x="244" y="488" width="3" height="3" fill="#5a2e08" opacity="0.76"/><rect x="250" y="488" width="3" height="3" fill="#8a4a10" opacity="0.56"/><rect x="277" y="488" width="3" height="3" fill="#3a1c04" opacity="0.58"/><rect x="295" y="488" width="3" height="3" fill="#6e3a0a" opacity="0.75"/><rect x="76" y="491" width="3" height="3" fill="#3a1c04" opacity="0.60"/><rect x="88" y="491" width="3" height="3" fill="#5a2e08" opacity="0.78"/><rect x="97" y="491" width="3" height="3" fill="#c47422" opacity="0.75"/><rect x="109" y="491" width="3" height="3" fill="#6e3a0a" opacity="0.71"/><rect x="112" y="491" width="3" height="3" fill="#1c0c02" opacity="0.79"/><rect x="115" y="491" width="3" height="3" fill="#3a1c04" opacity="0.58"/><rect x="124" y="491" width="3" height="3" fill="#1c0c02" opacity="0.76"/><rect x="127" y="491" width="3" height="3" fill="#b8681c" opacity="0.85"/><rect x="133" y="491" width="3" height="3" fill="#5a2e08" opacity="0.68"/><rect x="142" y="491" width="3" height="3" fill="#e0902e" opacity="0.85"/><rect x="184" y="491" width="3" height="3" fill="#c47422" opacity="0.92"/><rect x="193" y="491" width="3" height="3" fill="#c47422" opacity="0.88"/><rect x="202" y="491" width="3" height="3" fill="#5a2e08" opacity="0.99"/><rect x="205" y="491" width="3" height="3" fill="#5a2e08" opacity="0.67"/><rect x="217" y="491" width="3" height="3" fill="#b8681c" opacity="0.60"/><rect x="220" y="491" width="3" height="3" fill="#5a2e08" opacity="0.90"/><rect x="223" y="491" width="3" height="3" fill="#e0902e" opacity="0.76"/><rect x="229" y="491" width="3" height="3" fill="#3a1c04" opacity="0.71"/><rect x="232" y="491" width="3" height="3" fill="#6e3a0a" opacity="0.61"/><rect x="235" y="491" width="3" height="3" fill="#1c0c02" opacity="0.71"/><rect x="238" y="491" width="3" height="3" fill="#6e3a0a" opacity="0.67"/><rect x="250" y="491" width="3" height="3" fill="#c47422" opacity="0.86"/><rect x="256" y="491" width="3" height="3" fill="#a65c16" opacity="0.95"/><rect x="259" y="491" width="3" height="3" fill="#e0902e" opacity="0.81"/><rect x="268" y="491" width="3" height="3" fill="#5a2e08" opacity="0.96"/><rect x="283" y="491" width="3" height="3" fill="#c47422" opacity="0.73"/><rect x="88" y="494" width="3" height="3" fill="#1c0c02" opacity="0.76"/><rect x="91" y="494" width="3" height="3" fill="#3a1c04" opacity="0.71"/><rect x="103" y="494" width="3" height="3" fill="#a65c16" opacity="0.99"/><rect x="109" y="494" width="3" height="3" fill="#6e3a0a" opacity="0.77"/><rect x="118" y="494" width="3" height="3" fill="#3a1c04" opacity="0.76"/><rect x="124" y="494" width="3" height="3" fill="#3a1c04" opacity="0.77"/><rect x="127" y="494" width="3" height="3" fill="#d0842c" opacity="0.79"/><rect x="130" y="494" width="3" height="3" fill="#c47422" opacity="0.75"/><rect x="136" y="494" width="3" height="3" fill="#c47422" opacity="0.73"/><rect x="142" y="494" width="3" height="3" fill="#1c0c02" opacity="0.75"/><rect x="154" y="494" width="3" height="3" fill="#1c0c02" opacity="0.91"/><rect x="157" y="494" width="3" height="3" fill="#a65c16" opacity="0.61"/><rect x="160" y="494" width="3" height="3" fill="#6e3a0a" opacity="0.98"/><rect x="166" y="494" width="3" height="3" fill="#6e3a0a" opacity="0.68"/><rect x="190" y="494" width="3" height="3" fill="#3a1c04" opacity="0.67"/><rect x="205" y="494" width="3" height="3" fill="#5a2e08" opacity="0.60"/><rect x="211" y="494" width="3" height="3" fill="#6e3a0a" opacity="0.69"/><rect x="220" y="494" width="3" height="3" fill="#5a2e08" opacity="0.97"/><rect x="223" y="494" width="3" height="3" fill="#e0902e" opacity="0.88"/><rect x="226" y="494" width="3" height="3" fill="#6e3a0a" opacity="0.61"/><rect x="235" y="494" width="3" height="3" fill="#b8681c" opacity="0.96"/><rect x="265" y="494" width="3" height="3" fill="#6e3a0a" opacity="0.88"/><rect x="271" y="494" width="3" height="3" fill="#8a4a10" opacity="0.83"/><rect x="277" y="494" width="3" height="3" fill="#3a1c04" opacity="0.69"/><rect x="118" y="497" width="3" height="3" fill="#5a2e08" opacity="0.99"/><rect x="127" y="497" width="3" height="3" fill="#3a1c04" opacity="0.79"/><rect x="130" y="497" width="3" height="3" fill="#3a1c04" opacity="0.71"/><rect x="145" y="497" width="3" height="3" fill="#3a1c04" opacity="0.69"/><rect x="148" y="497" width="3" height="3" fill="#c47422" opacity="0.61"/><rect x="151" y="497" width="3" height="3" fill="#3a1c04" opacity="0.77"/><rect x="169" y="497" width="3" height="3" fill="#c47422" opacity="0.86"/><rect x="181" y="497" width="3" height="3" fill="#1c0c02" opacity="0.90"/><rect x="196" y="497" width="3" height="3" fill="#3a1c04" opacity="0.71"/><rect x="205" y="497" width="3" height="3" fill="#e0902e" opacity="0.75"/><rect x="226" y="497" width="3" height="3" fill="#1c0c02" opacity="0.84"/><rect x="229" y="497" width="3" height="3" fill="#1c0c02" opacity="0.70"/><rect x="247" y="497" width="3" height="3" fill="#a65c16" opacity="0.72"/><rect x="265" y="497" width="3" height="3" fill="#1c0c02" opacity="0.80"/><rect x="268" y="497" width="3" height="3" fill="#a65c16" opacity="0.91"/><rect x="283" y="497" width="3" height="3" fill="#c47422" opacity="0.67"/><rect x="109" y="500" width="3" height="3" fill="#b8681c" opacity="0.57"/><rect x="115" y="500" width="3" height="3" fill="#5a2e08" opacity="0.94"/><rect x="139" y="500" width="3" height="3" fill="#3a1c04" opacity="0.91"/><rect x="163" y="500" width="3" height="3" fill="#5a2e08" opacity="0.93"/><rect x="166" y="500" width="3" height="3" fill="#6e3a0a" opacity="0.74"/><rect x="169" y="500" width="3" height="3" fill="#6e3a0a" opacity="0.71"/><rect x="175" y="500" width="3" height="3" fill="#5a2e08" opacity="0.97"/><rect x="184" y="500" width="3" height="3" fill="#1c0c02" opacity="0.66"/><rect x="202" y="500" width="3" height="3" fill="#c47422" opacity="0.59"/><rect x="211" y="500" width="3" height="3" fill="#6e3a0a" opacity="0.71"/><rect x="223" y="500" width="3" height="3" fill="#e0902e" opacity="0.82"/><rect x="229" y="500" width="3" height="3" fill="#e0902e" opacity="0.80"/><rect x="232" y="500" width="3" height="3" fill="#3a1c04" opacity="0.90"/><rect x="235" y="500" width="3" height="3" fill="#3a1c04" opacity="0.78"/><rect x="244" y="500" width="3" height="3" fill="#6e3a0a" opacity="0.78"/><rect x="256" y="500" width="3" height="3" fill="#5a2e08" opacity="0.57"/><rect x="112" y="444" width="3" height="3" fill="#e8dcc8" opacity="0.77"/><rect x="112" y="447" width="3" height="3" fill="#e8dcc8" opacity="0.78"/><rect x="115" y="444" width="3" height="3" fill="#d8c8a8" opacity="0.97"/><rect x="115" y="447" width="3" height="3" fill="#f0e6d6" opacity="0.72"/><rect x="118" y="444" width="3" height="3" fill="#e8dcc8" opacity="0.85"/><rect x="118" y="447" width="3" height="3" fill="#f0e6d6" opacity="0.74"/><rect x="121" y="444" width="3" height="3" fill="#d8c8a8" opacity="0.71"/><rect x="121" y="447" width="3" height="3" fill="#f0e6d6" opacity="0.87"/><rect x="124" y="444" width="3" height="3" fill="#bfa27a" opacity="0.82"/><rect x="124" y="447" width="3" height="3" fill="#bfa27a" opacity="0.78"/><rect x="127" y="444" width="3" height="3" fill="#bfa27a" opacity="0.76"/><rect x="127" y="447" width="3" height="3" fill="#e8dcc8" opacity="0.87"/><rect x="133" y="444" width="3" height="3" fill="#e8dcc8" opacity="0.85"/><rect x="136" y="444" width="3" height="3" fill="#c8b08a" opacity="0.88"/><rect x="131" y="446" width="3" height="3" fill="#c8b08a" opacity="0.77"/><rect x="134" y="446" width="3" height="3" fill="#bfa27a" opacity="0.74"/><rect x="137" y="446" width="3" height="3" fill="#c8b08a" opacity="0.78"/><rect x="135" y="445" width="3" height="3" fill="#d8c8a8" opacity="0.95"/><rect x="138" y="442" width="3" height="3" fill="#f0e6d6" opacity="0.79"/><rect x="138" y="445" width="3" height="3" fill="#bfa27a" opacity="0.92"/><rect x="141" y="442" width="3" height="3" fill="#bfa27a" opacity="0.87"/><rect x="141" y="445" width="3" height="3" fill="#bfa27a" opacity="0.96"/><rect x="144" y="442" width="3" height="3" fill="#c8b08a" opacity="0.95"/><rect x="144" y="445" width="3" height="3" fill="#f0e6d6" opacity="0.95"/><rect x="152" y="443" width="3" height="3" fill="#e8dcc8" opacity="0.95"/><rect x="155" y="440" width="3" height="3" fill="#d8c8a8" opacity="0.94"/><rect x="158" y="443" width="3" height="3" fill="#d8c8a8" opacity="0.95"/><rect x="160" y="433" width="3" height="3" fill="#c8b08a" opacity="0.94"/><rect x="163" y="433" width="3" height="3" fill="#c8b08a" opacity="0.93"/><rect x="169" y="430" width="3" height="3" fill="#c8b08a" opacity="0.77"/><rect x="169" y="433" width="3" height="3" fill="#bfa27a" opacity="0.74"/><rect x="172" y="440" width="3" height="3" fill="#bfa27a" opacity="1.00"/><rect x="175" y="440" width="3" height="3" fill="#c8b08a" opacity="0.70"/><rect x="178" y="437" width="3" height="3" fill="#c8b08a" opacity="0.97"/><rect x="181" y="437" width="3" height="3" fill="#d8c8a8" opacity="0.78"/><rect x="181" y="440" width="3" height="3" fill="#bfa27a" opacity="0.99"/><rect x="184" y="440" width="3" height="3" fill="#e8dcc8" opacity="0.87"/><rect x="187" y="429" width="3" height="3" fill="#bfa27a" opacity="0.85"/><rect x="187" y="432" width="3" height="3" fill="#f0e6d6" opacity="0.78"/><rect x="187" y="435" width="3" height="3" fill="#d8c8a8" opacity="1.00"/><rect x="190" y="429" width="3" height="3" fill="#e8dcc8" opacity="0.82"/><rect x="190" y="435" width="3" height="3" fill="#c8b08a" opacity="0.96"/><rect x="193" y="429" width="3" height="3" fill="#e8dcc8" opacity="0.84"/><rect x="193" y="432" width="3" height="3" fill="#d8c8a8" opacity="0.86"/><rect x="195" y="438" width="3" height="3" fill="#e8dcc8" opacity="0.83"/><rect x="195" y="444" width="3" height="3" fill="#d8c8a8" opacity="0.93"/><rect x="201" y="438" width="3" height="3" fill="#bfa27a" opacity="0.86"/><rect x="201" y="441" width="3" height="3" fill="#bfa27a" opacity="0.94"/><rect x="201" y="444" width="3" height="3" fill="#e8dcc8" opacity="0.89"/><rect x="207" y="438" width="3" height="3" fill="#bfa27a" opacity="0.92"/><rect x="210" y="438" width="3" height="3" fill="#c8b08a" opacity="0.70"/><rect x="203" y="449" width="3" height="3" fill="#bfa27a" opacity="0.78"/><rect x="203" y="452" width="3" height="3" fill="#f0e6d6" opacity="0.91"/><rect x="203" y="458" width="3" height="3" fill="#c8b08a" opacity="0.91"/><rect x="206" y="449" width="3" height="3" fill="#c8b08a" opacity="0.86"/><rect x="206" y="458" width="3" height="3" fill="#e8dcc8" opacity="0.82"/><rect x="209" y="452" width="3" height="3" fill="#c8b08a" opacity="0.87"/><rect x="209" y="455" width="3" height="3" fill="#f0e6d6" opacity="0.75"/><rect x="209" y="458" width="3" height="3" fill="#c8b08a" opacity="0.75"/><rect x="212" y="449" width="3" height="3" fill="#c8b08a" opacity="0.86"/><rect x="215" y="449" width="3" height="3" fill="#bfa27a" opacity="0.95"/><rect x="215" y="452" width="3" height="3" fill="#e8dcc8" opacity="0.89"/><rect x="215" y="455" width="3" height="3" fill="#c8b08a" opacity="0.79"/><rect x="212" y="434" width="3" height="3" fill="#d8c8a8" opacity="1.00"/><rect x="212" y="437" width="3" height="3" fill="#c8b08a" opacity="0.94"/><rect x="215" y="437" width="3" height="3" fill="#bfa27a" opacity="0.71"/><rect x="215" y="440" width="3" height="3" fill="#f0e6d6" opacity="0.86"/><rect x="218" y="434" width="3" height="3" fill="#bfa27a" opacity="1.00"/><rect x="218" y="440" width="3" height="3" fill="#f0e6d6" opacity="0.92"/><rect x="221" y="434" width="3" height="3" fill="#bfa27a" opacity="0.74"/><rect x="221" y="437" width="3" height="3" fill="#d8c8a8" opacity="0.76"/><rect x="221" y="440" width="3" height="3" fill="#e8dcc8" opacity="0.97"/><rect x="220" y="456" width="3" height="3" fill="#f0e6d6" opacity="0.73"/><rect x="220" y="459" width="3" height="3" fill="#e8dcc8" opacity="0.95"/><rect x="223" y="453" width="3" height="3" fill="#d8c8a8" opacity="0.81"/><rect x="223" y="456" width="3" height="3" fill="#d8c8a8" opacity="0.74"/><rect x="226" y="456" width="3" height="3" fill="#e8dcc8" opacity="0.84"/><rect x="226" y="459" width="3" height="3" fill="#e8dcc8" opacity="0.95"/><rect x="229" y="453" width="3" height="3" fill="#e8dcc8" opacity="0.77"/><rect x="229" y="459" width="3" height="3" fill="#c8b08a" opacity="0.95"/><rect x="232" y="459" width="3" height="3" fill="#f0e6d6" opacity="0.84"/><rect x="235" y="453" width="3" height="3" fill="#e8dcc8" opacity="0.94"/><rect x="235" y="456" width="3" height="3" fill="#bfa27a" opacity="0.77"/><rect x="238" y="453" width="3" height="3" fill="#d8c8a8" opacity="0.82"/><rect x="238" y="459" width="3" height="3" fill="#c8b08a" opacity="0.72"/><rect x="241" y="459" width="3" height="3" fill="#d8c8a8" opacity="0.94"/><rect x="230" y="446" width="3" height="3" fill="#bfa27a" opacity="0.92"/><rect x="230" y="455" width="3" height="3" fill="#bfa27a" opacity="0.94"/><rect x="233" y="446" width="3" height="3" fill="#bfa27a" opacity="0.75"/><rect x="233" y="449" width="3" height="3" fill="#d8c8a8" opacity="0.71"/><rect x="233" y="452" width="3" height="3" fill="#bfa27a" opacity="0.84"/><rect x="233" y="455" width="3" height="3" fill="#bfa27a" opacity="0.88"/><rect x="236" y="446" width="3" height="3" fill="#bfa27a" opacity="0.72"/><rect x="236" y="452" width="3" height="3" fill="#d8c8a8" opacity="0.99"/><rect x="236" y="455" width="3" height="3" fill="#e8dcc8" opacity="0.89"/><rect x="239" y="446" width="3" height="3" fill="#bfa27a" opacity="0.87"/><rect x="239" y="449" width="3" height="3" fill="#f0e6d6" opacity="0.90"/><rect x="239" y="452" width="3" height="3" fill="#d8c8a8" opacity="0.98"/><rect x="218" y="460" width="3" height="3" fill="#c8b08a" opacity="0.98"/><rect x="221" y="463" width="3" height="3" fill="#f0e6d6" opacity="0.83"/><rect x="224" y="460" width="3" height="3" fill="#f0e6d6" opacity="0.79"/><rect x="224" y="463" width="3" height="3" fill="#e8dcc8" opacity="0.76"/><rect x="227" y="460" width="3" height="3" fill="#f0e6d6" opacity="0.96"/><rect x="230" y="463" width="3" height="3" fill="#bfa27a" opacity="0.87"/><rect x="242" y="430" width="3" height="3" fill="#bfa27a" opacity="0.83"/><rect x="242" y="433" width="3" height="3" fill="#e8dcc8" opacity="0.96"/><rect x="248" y="430" width="3" height="3" fill="#f0e6d6" opacity="0.97"/><rect x="248" y="433" width="3" height="3" fill="#c8b08a" opacity="0.93"/><rect x="251" y="430" width="3" height="3" fill="#c8b08a" opacity="0.83"/><rect x="251" y="433" width="3" height="3" fill="#bfa27a" opacity="0.80"/><rect x="254" y="430" width="3" height="3" fill="#e8dcc8" opacity="0.80"/><rect x="254" y="433" width="3" height="3" fill="#c8b08a" opacity="0.89"/><rect x="250" y="435" width="3" height="3" fill="#e8dcc8" opacity="0.72"/><rect x="250" y="438" width="3" height="3" fill="#c8b08a" opacity="0.92"/><rect x="253" y="438" width="3" height="3" fill="#f0e6d6" opacity="0.77"/><rect x="256" y="435" width="3" height="3" fill="#bfa27a" opacity="0.73"/><rect x="259" y="435" width="3" height="3" fill="#bfa27a" opacity="0.89"/><rect x="259" y="438" width="3" height="3" fill="#f0e6d6" opacity="0.92"/><rect x="205" y="420" width="3" height="3" fill="#c8b08a" opacity="0.97"/><rect x="205" y="426" width="3" height="3" fill="#c8b08a" opacity="0.73"/><rect x="208" y="423" width="3" height="3" fill="#d8c8a8" opacity="0.95"/><rect x="211" y="420" width="3" height="3" fill="#f0e6d6" opacity="0.81"/><rect x="211" y="423" width="3" height="3" fill="#d8c8a8" opacity="0.73"/><rect x="211" y="426" width="3" height="3" fill="#f0e6d6" opacity="0.71"/><rect x="173" y="458" width="3" height="3" fill="#e8dcc8" opacity="0.89"/><rect x="176" y="455" width="3" height="3" fill="#c8b08a" opacity="0.84"/><rect x="176" y="458" width="3" height="3" fill="#d8c8a8" opacity="0.81"/><rect x="232" y="462" width="3" height="3" fill="#e8dcc8" opacity="0.97"/><rect x="232" y="465" width="3" height="3" fill="#c8b08a" opacity="0.82"/><rect x="235" y="462" width="3" height="3" fill="#e8dcc8" opacity="0.85"/><rect x="235" y="465" width="3" height="3" fill="#d8c8a8" opacity="0.81"/><rect x="241" y="462" width="3" height="3" fill="#e8dcc8" opacity="0.99"/><rect x="241" y="465" width="3" height="3" fill="#bfa27a" opacity="0.93"/><rect x="244" y="465" width="3" height="3" fill="#f0e6d6" opacity="0.75"/><rect x="155" y="453" width="3" height="3" fill="#bfa27a" opacity="0.74"/><rect x="158" y="450" width="3" height="3" fill="#bfa27a" opacity="0.74"/><rect x="158" y="453" width="3" height="3" fill="#e8dcc8" opacity="0.80"/><rect x="161" y="453" width="3" height="3" fill="#c8b08a" opacity="0.70"/><rect x="180" y="445" width="3" height="3" fill="#bfa27a" opacity="0.71"/><rect x="180" y="448" width="3" height="3" fill="#d8c8a8" opacity="0.77"/><rect x="183" y="448" width="3" height="3" fill="#bfa27a" opacity="0.83"/><rect x="186" y="445" width="3" height="3" fill="#f0e6d6" opacity="0.92"/><rect x="186" y="448" width="3" height="3" fill="#f0e6d6" opacity="0.95"/><rect x="124" y="460" width="3" height="3" fill="#d8c8a8" opacity="0.81"/><rect x="127" y="463" width="3" height="3" fill="#f0e6d6" opacity="0.75"/><rect x="240" y="467" width="3" height="3" fill="#c8b08a" opacity="0.70"/><rect x="243" y="464" width="3" height="3" fill="#e8dcc8" opacity="0.75"/><rect x="246" y="464" width="3" height="3" fill="#f0e6d6" opacity="0.97"/><rect x="246" y="467" width="3" height="3" fill="#c8b08a" opacity="0.83"/></svg>
<svg class="a" style="left:832px;top:713px;" width="17" height="25" viewBox="0 0 17 25"><path d="M2,1.5 L2,19.5 L6.3,15.6 L9.3,22.5 L12.2,21.3 L9.3,14.5 L15,14.5 Z" fill="#fff" stroke="#000" stroke-width="1.1" stroke-linejoin="round"/></svg>
<div class="a" style="left:0px;top:18px;width:1px;height:1px;background:#8a8a8a;"></div>
<div class="a" style="left:0px;top:21px;width:1px;height:1px;background:#8a8a8a;"></div>
<div class="a" style="left:0px;top:24px;width:1px;height:1px;background:#8a8a8a;"></div>
<div class="a" style="left:0px;top:27px;width:1px;height:1px;background:#8a8a8a;"></div>
<div class="a" style="left:0px;top:30px;width:1px;height:1px;background:#8a8a8a;"></div>
<div class="a" style="left:0px;top:33px;width:1px;height:1px;background:#8a8a8a;"></div>
<div class="a" style="left:0px;top:36px;width:1px;height:1px;background:#8a8a8a;"></div>
<div class="a" style="left:0px;top:39px;width:1px;height:1px;background:#8a8a8a;"></div>
<div class="a" style="left:0px;top:42px;width:1px;height:1px;background:#8a8a8a;"></div>
<div class="a" style="left:0px;top:55px;width:1px;height:1px;background:#8a8a8a;"></div>
<div class="a" style="left:0px;top:58px;width:1px;height:1px;background:#8a8a8a;"></div>
<div class="a" style="left:0px;top:61px;width:1px;height:1px;background:#8a8a8a;"></div>
<div class="a" style="left:0px;top:64px;width:1px;height:1px;background:#8a8a8a;"></div>
<div class="a" style="left:0px;top:67px;width:1px;height:1px;background:#8a8a8a;"></div>
<div class="a" style="left:0px;top:70px;width:1px;height:1px;background:#8a8a8a;"></div>
<div class="a" style="left:0px;top:73px;width:1px;height:1px;background:#8a8a8a;"></div>
<div class="a" style="left:0px;top:76px;width:1px;height:1px;background:#8a8a8a;"></div>
<div class="a" style="left:0px;top:79px;width:1px;height:1px;background:#8a8a8a;"></div>
<div class="a" style="left:0px;top:82px;width:1px;height:1px;background:#8a8a8a;"></div>
<div class="a" style="left:0px;top:85px;width:1px;height:1px;background:#8a8a8a;"></div>
<div class="a" style="left:0px;top:88px;width:1px;height:1px;background:#8a8a8a;"></div>
<div class="a" style="left:0px;top:91px;width:1px;height:1px;background:#8a8a8a;"></div>
<div class="a" style="left:0px;top:94px;width:1px;height:1px;background:#8a8a8a;"></div>
<div class="a" style="left:0px;top:97px;width:1px;height:1px;background:#8a8a8a;"></div>
<div class="a" style="left:0px;top:100px;width:1px;height:1px;background:#8a8a8a;"></div>
<div class="a" style="left:0px;top:103px;width:1px;height:1px;background:#8a8a8a;"></div>
<div class="a" style="left:0px;top:106px;width:1px;height:1px;background:#8a8a8a;"></div>
<div class="a" style="left:0px;top:109px;width:1px;height:1px;background:#8a8a8a;"></div>
<div class="a" style="left:0px;top:112px;width:1px;height:1px;background:#8a8a8a;"></div>
<div class="a" style="left:0px;top:115px;width:1px;height:1px;background:#8a8a8a;"></div>
<div class="a" style="left:0px;top:118px;width:1px;height:1px;background:#8a8a8a;"></div>
<div class="a" style="left:0px;top:121px;width:1px;height:1px;background:#8a8a8a;"></div>
<div class="a" style="left:0px;top:124px;width:1px;height:1px;background:#8a8a8a;"></div>
<div class="a" style="left:0px;top:127px;width:1px;height:1px;background:#8a8a8a;"></div>
<div class="a" style="left:0px;top:1105px;width:1px;height:1px;background:#8a8a8a;"></div>
<div class="a" style="left:0px;top:1108px;width:1px;height:1px;background:#8a8a8a;"></div>
<div class="a" style="left:0px;top:1111px;width:1px;height:1px;background:#8a8a8a;"></div>
<div class="a" style="left:0px;top:1114px;width:1px;height:1px;background:#8a8a8a;"></div>
<div class="a" style="left:0px;top:1117px;width:1px;height:1px;background:#8a8a8a;"></div>
<div class="a" style="left:0px;top:1120px;width:1px;height:1px;background:#8a8a8a;"></div>
<div class="a" style="left:0px;top:1123px;width:1px;height:1px;background:#8a8a8a;"></div>
<div class="a" style="left:0px;top:1126px;width:1px;height:1px;background:#8a8a8a;"></div>
<div class="a" style="left:0px;top:1129px;width:1px;height:1px;background:#8a8a8a;"></div>
<div class="a" style="left:0px;top:1132px;width:1px;height:1px;background:#8a8a8a;"></div>
<div class="a" style="left:0px;top:1135px;width:1px;height:1px;background:#8a8a8a;"></div>
<div class="a" style="left:0px;top:1138px;width:1px;height:1px;background:#8a8a8a;"></div>
<div class="a" style="left:0px;top:1141px;width:1px;height:1px;background:#8a8a8a;"></div>
<div class="a" style="left:0px;top:1144px;width:1px;height:1px;background:#8a8a8a;"></div>
<div class="a" style="left:0px;top:1158px;width:1px;height:1px;background:#8a8a8a;"></div>
<div class="a" style="left:0px;top:1161px;width:1px;height:1px;background:#8a8a8a;"></div>
<div class="a" style="left:0px;top:1164px;width:1px;height:1px;background:#8a8a8a;"></div>
<div class="a" style="left:0px;top:1167px;width:1px;height:1px;background:#8a8a8a;"></div>
<div class="a" style="left:0px;top:1170px;width:1px;height:1px;background:#8a8a8a;"></div>
<div class="a" style="left:0px;top:1173px;width:1px;height:1px;background:#8a8a8a;"></div>
<div class="a" style="left:0px;top:1176px;width:1px;height:1px;background:#8a8a8a;"></div>
<div class="a" style="left:0px;top:1179px;width:1px;height:1px;background:#8a8a8a;"></div>
<div class="a" style="left:0px;top:1182px;width:1px;height:1px;background:#8a8a8a;"></div>
<div class="a" style="left:0px;top:1185px;width:1px;height:1px;background:#8a8a8a;"></div>
<div class="a" style="left:0px;top:1188px;width:1px;height:1px;background:#8a8a8a;"></div>
</body></html>
